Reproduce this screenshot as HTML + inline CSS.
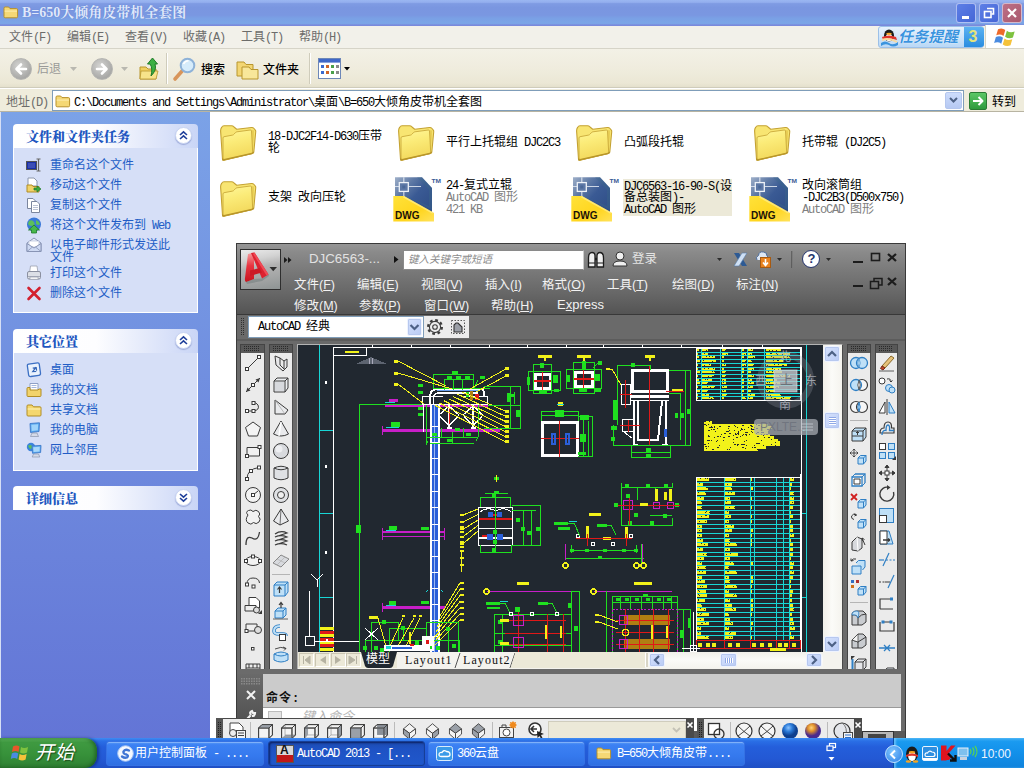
<!DOCTYPE html>
<html lang="zh-CN"><head><meta charset="utf-8"><title>B=650大倾角皮带机全套图</title>
<style>
html,body{margin:0;padding:0;}
body{width:1024px;height:768px;overflow:hidden;position:relative;background:#fff;
 font-family:"Liberation Mono","Noto Sans CJK SC",monospace;font-size:12px;line-height:14px;color:#000;}
div,svg,span.a{position:absolute;box-sizing:border-box;}
svg{overflow:visible}
.t{white-space:nowrap;font-size:12px;line-height:14px;}
.l{letter-spacing:-1.2px;}
.s{font-family:"Liberation Sans","Noto Sans CJK SC",sans-serif;white-space:nowrap;}
.s .l{letter-spacing:0}
.b{font-weight:bold}
.lk{color:#215dc6}
.g{color:#808080}
</style></head><body>
<div style="left:0px;top:0px;width:1024px;height:26px;background:linear-gradient(#9ab6f1 0,#93aeee 9%,#7f9be3 14%,#7a96e0 30%,#7a97e1 58%,#7aa0e5 70%,#7ba6e7 90%,#7a90de 95%,#7986da 100%);"></div>
<svg style="left:3px;top:5px;" width="16" height="14" viewBox="0 0 16 14"><path d="M1 3.2Q1 2 2.2 2H5.6L7 3.6H13.4Q14.6 3.6 14.6 4.8V11.6Q14.6 12.8 13.4 12.8H2.2Q1 12.8 1 11.6Z" fill="#f5d875" stroke="#b8912a" stroke-width="1"/><path d="M1.6 5.6H14V6.6H1.6Z" fill="#fff4c0" opacity=".8"/></svg>
<div class="t" style="left:22px;top:4px;color:#dfe8fb;font-weight:bold;font-size:14px;line-height:17px;font-family:'Liberation Serif','Noto Serif CJK SC',serif;text-shadow:0 0 1px #5b78c8;"><span>B=650</span>大倾角皮带机全套图</div>
<div style="left:956px;top:3px;width:20px;height:20px;border:1px solid rgba(235,240,255,.6);border-radius:3px;background:linear-gradient(135deg,#5d7fe6,#4666d6);"></div>
<div style="left:979px;top:3px;width:20px;height:20px;border:1px solid rgba(235,240,255,.6);border-radius:3px;background:linear-gradient(135deg,#5d7fe6,#4666d6);"></div>
<div style="left:1002px;top:3px;width:20px;height:20px;border:1px solid rgba(235,240,255,.6);border-radius:3px;background:linear-gradient(135deg,#bd6f86,#a9596e);"></div>
<div style="left:962px;top:16px;width:7px;height:3px;background:#fff"></div>
<svg style="left:979px;top:3px;" width="20" height="20" viewBox="0 0 20 20"><path d="M8 5.5H14.5V11H12.5" fill="none" stroke="#fff" stroke-width="1.6"/><rect x="5.5" y="8.5" width="6.5" height="6" fill="none" stroke="#fff" stroke-width="1.6"/></svg>
<svg style="left:1002px;top:3px;" width="20" height="20" viewBox="0 0 20 20"><path d="M6 6L14 14M14 6L6 14" stroke="#fff" stroke-width="2.2"/></svg>
<div style="left:0px;top:26px;width:1024px;height:23px;background:#f2f1ea;border-bottom:1px solid #d6d4c8"></div>
<div class="t" style="left:9px;top:31px;color:#6c6c6a">文件<span class="l">(F)</span></div>
<div class="t" style="left:67px;top:31px;color:#6c6c6a">编辑<span class="l">(E)</span></div>
<div class="t" style="left:125px;top:31px;color:#6c6c6a">查看<span class="l">(V)</span></div>
<div class="t" style="left:183px;top:31px;color:#6c6c6a">收藏<span class="l">(A)</span></div>
<div class="t" style="left:241px;top:31px;color:#6c6c6a">工具<span class="l">(T)</span></div>
<div class="t" style="left:299px;top:31px;color:#6c6c6a">帮助<span class="l">(H)</span></div>
<div style="left:878px;top:26px;width:106px;height:22px;background:linear-gradient(#e7f2fd,#b9d8f6);border:1px solid #9cc0e8;border-radius:3px"></div>
<div style="left:964px;top:27px;width:20px;height:20px;background:linear-gradient(#5cb2f2,#2a8de0);border-radius:0 3px 3px 0"></div>
<div class="s" style="left:968.5px;top:28px;color:#e4e37a;font-weight:bold;font-size:16px;line-height:18px"><span class="l">3</span></div>
<div class="s" style="left:898px;top:28px;color:#3b94de;text-shadow:0 0 1px #fff,0 0 1px #fff;font-weight:bold;font-style:italic;font-size:15px;line-height:18px;letter-spacing:0px">任务提醒</div>
<svg style="left:880px;top:27px;" width="20" height="20" viewBox="0 0 20 20"><path d="M1 16Q5 13 9 16Q13 19 18 15L18 18Q13 21 9 18Q5 16 1 19Z" fill="#3b94de"/><ellipse cx="9" cy="8.500" rx="5" ry="6" fill="#1c1c1c"/><ellipse cx="9" cy="10.500" rx="3.200" ry="3.800" fill="#fff"/><ellipse cx="9" cy="6.800" rx="2.800" ry="1.100" fill="#f5a623"/><path d="M2 10Q9 7 16 10L17 13Q9 10 3 13Z" fill="#e0342c"/><path d="M2 13Q9 10.500 17 15" stroke="#f7d9a0" stroke-width="2" fill="none"/></svg>
<div style="left:985px;top:25px;width:39px;height:23px;background:#fff;border-left:1px solid #d8d5c6"></div>
<svg style="left:994px;top:26px;" width="24" height="22" viewBox="0 0 24 22"><g transform="rotate(6 10 10) scale(1.120)"><path d="M3 3.500Q6.500 1.500 9.500 3.500L8.500 9Q5.500 7.200 2 9Z" fill="#ee6a2a"/><path d="M11 4Q14 6 18 4L17 9.500Q13.500 11.500 10 9.500Z" fill="#7ec23f"/><path d="M1.800 10.500Q5.200 8.600 8.200 10.500L7.200 16Q4.200 14.200 .8 16Z" fill="#4a8be0"/><path d="M9.600 11Q12.800 13 16.600 11L15.600 16.500Q12.200 18.500 8.600 16.500Z" fill="#f5c23a"/></g></svg>
<div style="left:0px;top:49px;width:1024px;height:39px;background:linear-gradient(#f3f1e6,#efecdd 55%,#ebe7d5 90%,#e4e0cc);border-bottom:1px solid #cfccbb"></div>
<div style="left:9.5px;top:58px;width:22px;height:22px;border-radius:11px;background:radial-gradient(circle at 40% 35%,#d4d4d2,#a9a9a7 70%,#9a9a98);border:1px solid #b5b5b2"></div>
<div style="left:90.5px;top:58px;width:22px;height:22px;border-radius:11px;background:radial-gradient(circle at 40% 35%,#d4d4d2,#a9a9a7 70%,#9a9a98);border:1px solid #b5b5b2"></div>
<svg style="left:9.5px;top:58px;" width="22" height="22" viewBox="0 0 22 22"><path d="M16 11H7M11 6.5L6.5 11L11 15.5" fill="none" stroke="#fff" stroke-width="2.6" stroke-linecap="round" stroke-linejoin="round"/></svg>
<svg style="left:90.5px;top:58px;" width="22" height="22" viewBox="0 0 22 22"><path d="M6 11H15M11 6.5L15.5 11L11 15.5" fill="none" stroke="#fff" stroke-width="2.6" stroke-linecap="round" stroke-linejoin="round"/></svg>
<div class="t" style="left:37px;top:63px;color:#9a9a98">后退</div>
<svg style="left:70px;top:67px;" width="7" height="4" viewBox="0 0 7 4"><path d="M0 0H7L3.5 4Z" fill="#b9b8b0"/></svg>
<svg style="left:121px;top:67px;" width="7" height="4" viewBox="0 0 7 4"><path d="M0 0H7L3.5 4Z" fill="#b9b8b0"/></svg>
<svg style="left:138px;top:56px;" width="24" height="26" viewBox="0 0 24 26"><path d="M2 11H8L10 13H18V23H2Z" fill="#f0d060" stroke="#b8962e" stroke-width="1"/><path d="M3 15H20L18 23H2Z" fill="#f7e38a" stroke="#b8962e" stroke-width=".8"/><path d="M13 20Q15 12 12 8H9.5L14.5 2L19.5 8H17Q19 14 13 20Z" fill="#3cb043" stroke="#1f7a28" stroke-width="1"/></svg>
<div style="left:166px;top:53px;width:1px;height:31px;background:#cfccbb;border-right:1px solid #fff;width:2px"></div>
<svg style="left:172px;top:56px;" width="26" height="26" viewBox="0 0 26 26"><path d="M3 23L11 14" stroke="#d8955a" stroke-width="3.6" stroke-linecap="round"/><circle cx="15.5" cy="9.5" r="6.8" fill="#d6ecfb" stroke="#8eb2d8" stroke-width="2"/><path d="M11.5 8Q13 4.8 16.5 4.8" stroke="#fff" stroke-width="1.6" fill="none"/></svg>
<div class="t" style="left:201px;top:63.5px;color:#000;font-weight:500">搜索</div>
<svg style="left:236px;top:57px;" width="24" height="24" viewBox="0 0 24 24"><path d="M1 5H8L10 7.5H17V19H1Z" fill="#f3d673" stroke="#b8962e"/><path d="M6 10H13L15 12.5H22V22H6Z" fill="#f8e79a" stroke="#b8962e"/></svg>
<div class="t" style="left:263px;top:63.5px;color:#000;font-weight:500">文件夹</div>
<div style="left:309px;top:53px;width:2px;height:31px;background:#cfccbb;border-right:1px solid #fff;"></div>
<svg style="left:318px;top:58px;" width="24" height="22" viewBox="0 0 24 22"><rect x=".5" y=".5" width="22" height="20" fill="#fff" stroke="#6d87b8"/><rect x="1" y="1" width="21" height="3.6" fill="#3f68c8"/><rect x="3" y="7" width="3" height="3" fill="#3a6ad0"/><rect x="8" y="7" width="3" height="3" fill="#d0652a"/><rect x="13" y="7" width="3" height="3" fill="#4aa04a"/><rect x="18" y="7" width="3" height="3" fill="#8a8a8a"/><rect x="3" y="13" width="3" height="3" fill="#3a6ad0"/><rect x="8" y="13" width="3" height="3" fill="#d0652a"/><rect x="13" y="13" width="3" height="3" fill="#4aa04a"/><rect x="18" y="13" width="3" height="3" fill="#8a8a8a"/></svg>
<svg style="left:344px;top:67px;" width="6" height="4" viewBox="0 0 6 4"><path d="M0 0H6L3 3.6Z" fill="#000"/></svg>
<div style="left:0px;top:89px;width:1024px;height:23px;background:#efecdc;border-bottom:1px solid #b8b4a2"></div>
<div class="t" style="left:6px;top:95.5px;color:#6c6c6a">地址<span class="l">(D)</span></div>
<div style="left:52px;top:90px;width:912px;height:21px;background:#fff;border:1px solid #7f9db9"></div>
<svg style="left:55px;top:94px;" width="16" height="14" viewBox="0 0 16 14"><path d="M1 3.2Q1 2 2.2 2H5.6L7 3.6H13.4Q14.6 3.6 14.6 4.8V11.6Q14.6 12.8 13.4 12.8H2.2Q1 12.8 1 11.6Z" fill="#f5d875" stroke="#b8912a" stroke-width="1"/><path d="M1.6 5.6H14V6.6H1.6Z" fill="#fff4c0" opacity=".8"/></svg>
<div class="t" style="left:74px;top:95.5px;"><span class="l">C:\Documents and Settings\Administrator\</span>桌面<span class="l">\B=650</span>大倾角皮带机全套图</div>
<div style="left:945px;top:92px;width:17px;height:17px;background:linear-gradient(#cddcfb,#b6c9f3);border:1px solid #b4c6ee;border-radius:2px"></div>
<svg style="left:949px;top:97px;" width="9" height="6" viewBox="0 0 9 6"><path d="M1 1L4.5 4.5L8 1" fill="none" stroke="#4d6185" stroke-width="2"/></svg>
<div style="left:969px;top:92px;width:18px;height:18px;background:linear-gradient(#5cc765,#2f9a3d);border:1px solid #2a7a33;border-radius:2px"></div>
<svg style="left:969px;top:92px;" width="18" height="18" viewBox="0 0 18 18"><path d="M4 9H13M9.5 5L13.5 9L9.5 13" fill="none" stroke="#fff" stroke-width="2" stroke-linejoin="round"/></svg>
<div class="t" style="left:992px;top:95.5px;">转到</div><div style="left:0px;top:112px;width:210px;height:626px;background:linear-gradient(#7ba2e7,#6375d6)"></div>
<div style="left:0px;top:112px;width:1px;height:626px;background:#d6dff5"></div>
<div style="left:13px;top:124px;width:185px;height:24px;background:linear-gradient(90deg,#fff 0,#fdfdff 45%,#c9d5f6 100%);border-radius:4px 4px 0 0"></div><div class="t" style="left:26px;top:129.5px;color:#2156c0;font-weight:bold;font-size:13px;font-family:'Liberation Serif','Noto Serif CJK SC',serif;font-weight:900">文件和文件夹任务</div><div style="left:175px;top:127px;width:17px;height:17px;border-radius:9px;background:#fff;border:1px solid #c8d4f2;box-shadow:0 1px 1px rgba(60,80,160,.35)"></div><svg style="left:175px;top:127px;" width="17" height="17" viewBox="0 0 17 17"><path d="M5 8L8.5 4.8L12 8M5 12L8.5 8.8L12 12" fill="none" stroke="#1f3f9a" stroke-width="1.6"/></svg>
<div style="left:13px;top:148px;width:185px;height:165px;background:#d6dff7;border:1px solid #fff;border-top:none"></div>
<svg style="left:26px;top:156.5px;" width="16" height="16" viewBox="0 0 16 16"><rect x=".5" y="4.5" width="10" height="8" fill="#1a2fa8" stroke="#555"/><rect x="2" y="6" width="7" height="5" fill="#fff" opacity=".15"/><path d="M12.5 2V14M10.5 2H14.5M10.5 14H14.5" stroke="#666" stroke-width="1.2"/></svg>
<div class="t lk" style="left:50px;top:159px;">重命名这个文件</div>
<svg style="left:26px;top:176.5px;" width="16" height="16" viewBox="0 0 16 16"><path d="M2 1H8L11 4V9H2Z" fill="#fff" stroke="#8c96ad"/><path d="M1 8H6L7 9.5H13V15H1Z" fill="#f1d268" stroke="#b08d27"/><path d="M8 11H11V9L15 12L11 15V13H8Z" fill="#3dab3f" stroke="#1f7a2a" stroke-width=".7"/></svg>
<div class="t lk" style="left:50px;top:179px;">移动这个文件</div>
<svg style="left:26px;top:196.5px;" width="16" height="16" viewBox="0 0 16 16"><path d="M1.5 1.5H7L9.5 4V11.5H1.5Z" fill="#fff" stroke="#7b869e"/><path d="M5.5 4.5H11L13.5 7V15.5H5.5Z" fill="#fff" stroke="#7b869e"/><path d="M7 8.5H12M7 10.5H12M7 12.5H12" stroke="#aab3c8" stroke-width=".8"/></svg>
<div class="t lk" style="left:50px;top:199px;">复制这个文件</div>
<svg style="left:26px;top:216.5px;" width="16" height="16" viewBox="0 0 16 16"><circle cx="8" cy="7.5" r="7" fill="#3a78d8"/><path d="M3 4Q6 2 8 5Q10 8 6 9Q3 9 2 7Z" fill="#5cc05a"/><path d="M10 3Q13 4 14 7Q12 9 10 7Z" fill="#5cc05a"/><path d="M8 8L13.5 13H10.5V16H5.5V13H2.5Z" fill="#47b84b" stroke="#1d7a2a" stroke-width=".8"/></svg>
<div class="t lk" style="left:50px;top:219px;">将这个文件发布到<span class="l"> Web</span></div>
<svg style="left:26px;top:236.5px;" width="16" height="16" viewBox="0 0 16 16"><path d="M1 6L8 1L15 6V14.5H1Z" fill="#e9eef9" stroke="#8894b5"/><path d="M3 4H13V10H3Z" fill="#fff" stroke="#b5bfd8" stroke-width=".7"/><path d="M1 6.5L8 11L15 6.5V14.5H1Z" fill="#cfdaf3" stroke="#8894b5"/><path d="M1 14.5L6.5 10M15 14.5L9.5 10" stroke="#8894b5" stroke-width=".8"/></svg>
<div class="t lk" style="left:50px;top:239px;">以电子邮件形式发送此</div>
<svg style="left:26px;top:264.5px;" width="16" height="16" viewBox="0 0 16 16"><path d="M4.5 1H11L12 8H3.5Z" fill="#fff" stroke="#9aa0ae" stroke-width=".8"/><path d="M1.5 8Q1.5 6.5 3 6.5H13Q14.5 6.5 14.5 8V12.5Q14.5 14 13 14H3Q1.5 14 1.5 12.5Z" fill="#dcdfe6" stroke="#8b90a0"/><path d="M2 11.5H14" stroke="#a7abba"/><rect x="4" y="12" width="8" height="2.5" fill="#f4f4f6" stroke="#9096a5" stroke-width=".6"/></svg>
<div class="t lk" style="left:50px;top:267px;">打印这个文件</div>
<svg style="left:26px;top:284.5px;" width="16" height="16" viewBox="0 0 16 16"><path d="M2.5 3L13.5 14M13.5 3L2.5 14" stroke="#d3202f" stroke-width="2.6" stroke-linecap="round"/></svg>
<div class="t lk" style="left:50px;top:287px;">删除这个文件</div>
<div class="t lk" style="left:50px;top:250.5px;">文件</div>
<div style="left:13px;top:329px;width:185px;height:24px;background:linear-gradient(90deg,#fff 0,#fdfdff 45%,#c9d5f6 100%);border-radius:4px 4px 0 0"></div><div class="t" style="left:26px;top:334.5px;color:#2156c0;font-weight:bold;font-size:13px;font-family:'Liberation Serif','Noto Serif CJK SC',serif;font-weight:900">其它位置</div><div style="left:175px;top:332px;width:17px;height:17px;border-radius:9px;background:#fff;border:1px solid #c8d4f2;box-shadow:0 1px 1px rgba(60,80,160,.35)"></div><svg style="left:175px;top:332px;" width="17" height="17" viewBox="0 0 17 17"><path d="M5 8L8.5 4.8L12 8M5 12L8.5 8.8L12 12" fill="none" stroke="#1f3f9a" stroke-width="1.6"/></svg>
<div style="left:13px;top:353px;width:185px;height:118px;background:#d6dff7;border:1px solid #fff;border-top:none"></div>
<svg style="left:26px;top:361.5px;" width="16" height="16" viewBox="0 0 16 16"><path d="M2 3Q2 1.5 3.5 1.5H12.5Q14 1.5 14 3V12Q14 14 12 14H4Q2 14 2 12Z" fill="#eaf2fd" stroke="#3c70c4" stroke-width="1.3" transform="rotate(-8 8 8)"/><path d="M10.5 5.5L6.5 9.5L10 9.8M7 6H10.5V9" fill="none" stroke="#3566b8" stroke-width="1.2" transform="rotate(-8 8 8)"/></svg>
<div class="t lk" style="left:50px;top:364px;">桌面</div>
<svg style="left:26px;top:381.5px;" width="16" height="16" viewBox="0 0 16 16"><path d="M4 1.5H12V9H4Z" fill="#fff" stroke="#8fa0c6"/><path d="M5.5 3.5H10.5M5.5 5.5H10.5" stroke="#9bb0dc" stroke-width=".9"/><path d="M1 6.5Q1 5.5 2 5.5H4V8H12L13 7H15V13.5Q15 14.5 14 14.5H2Q1 14.5 1 13.5Z" fill="#f2d36b" stroke="#b08d27"/></svg>
<div class="t lk" style="left:50px;top:384px;">我的文档</div>
<svg style="left:26px;top:401.5px;" width="16" height="16" viewBox="0 0 16 16"><path d="M1 4Q1 3 2 3H6L7.5 4.8H14Q15 4.8 15 5.8V13Q15 14 14 14H2Q1 14 1 13Z" fill="#f4d76f" stroke="#b08d27"/><path d="M1.6 7H14.4" stroke="#fbeeb0" stroke-width="1.2"/></svg>
<div class="t lk" style="left:50px;top:404px;">共享文档</div>
<svg style="left:26px;top:421.5px;" width="16" height="16" viewBox="0 0 16 16"><path d="M4 1.5L13.5 .8L13 9.5L4.5 10.5Z" fill="#56a8ee" stroke="#3d78c9" stroke-width=".9"/><path d="M5.3 2.7L12.2 2.2L11.8 8.3L5.7 9Z" fill="#9ed3fb"/><path d="M6 11H11L12.5 14.5H4.5Z" fill="#d4dae8" stroke="#8b95ae" stroke-width=".7"/></svg>
<div class="t lk" style="left:50px;top:424px;">我的电脑</div>
<svg style="left:26px;top:441.5px;" width="16" height="16" viewBox="0 0 16 16"><circle cx="5" cy="5" r="4.2" fill="#3a83dc"/><path d="M2 4Q4 2 6 4Q7 6 4 7Z" fill="#5cc05a"/><path d="M6 4L15 3.4L14.6 10.5L6.5 11.3Z" fill="#56a8ee" stroke="#3d78c9" stroke-width=".9"/><path d="M7.2 5.2L13.8 4.7L13.5 9.4L7.6 10Z" fill="#a8d8fb"/><path d="M7.5 12H12.5L13.8 15H6.2Z" fill="#d4dae8" stroke="#8b95ae" stroke-width=".7"/></svg>
<div class="t lk" style="left:50px;top:444px;">网上邻居</div>
<div style="left:13px;top:486px;width:185px;height:24px;background:linear-gradient(90deg,#fff 0,#fdfdff 45%,#c9d5f6 100%);border-radius:4px 4px 0 0"></div><div class="t" style="left:26px;top:491.5px;color:#2156c0;font-weight:bold;font-size:13px;font-family:'Liberation Serif','Noto Serif CJK SC',serif;font-weight:900">详细信息</div><div style="left:175px;top:489px;width:17px;height:17px;border-radius:9px;background:#fff;border:1px solid #c8d4f2;box-shadow:0 1px 1px rgba(60,80,160,.35)"></div><svg style="left:175px;top:489px;" width="17" height="17" viewBox="0 0 17 17"><path d="M5 5L8.5 8.2L12 5M5 9L8.5 12.2L12 9" fill="none" stroke="#1f3f9a" stroke-width="1.6"/></svg><svg style="left:218px;top:122px;" width="40" height="40" viewBox="0 0 40 40"><defs><linearGradient id="fg" x1="0" y1="0" x2=".25" y2="1"><stop offset="0" stop-color="#fff79a"/><stop offset=".45" stop-color="#fbeb78"/><stop offset="1" stop-color="#f3d95c"/></linearGradient></defs>
<path d="M2.600 9Q2.600 6.800 3.600 5.400Q4.500 3.800 6 3.800H13.500Q15 3.800 16 5L18.700 7.200L33.500 5.500Q35 5.300 36 6.500L37.500 8.300Q37.800 9 37.700 10L35.800 30Q35.700 31.200 34.500 31.500L6 38.200Q4.600 38.500 4.500 37Z" fill="#f8e572" stroke="#c4a233" stroke-width="1.100" stroke-linejoin="round"/>
<path d="M33.400 8L36.200 8.600L35 30.500L34.600 31.200Z" fill="#e9cf55"/>
<path d="M5 16Q5 14.900 6 14.700L14.500 13.100Q15.500 12.900 16.200 12L17.400 10.600Q18 10 19 9.800L32.300 8Q33.400 7.900 33.500 9L34.700 30.300Q34.800 31.300 33.700 31.600L6 38Q5 38.200 5 37.200Z" fill="url(#fg)" stroke="#c9a93a" stroke-width=".9" stroke-linejoin="round"/>
<path d="M4.500 36.500L5 38L34 31.500L35.800 30" fill="none" stroke="#b8952a" stroke-width="1.300"/></svg>
<svg style="left:396px;top:122px;" width="40" height="40" viewBox="0 0 40 40"><defs><linearGradient id="fg" x1="0" y1="0" x2=".25" y2="1"><stop offset="0" stop-color="#fff79a"/><stop offset=".45" stop-color="#fbeb78"/><stop offset="1" stop-color="#f3d95c"/></linearGradient></defs>
<path d="M2.600 9Q2.600 6.800 3.600 5.400Q4.500 3.800 6 3.800H13.500Q15 3.800 16 5L18.700 7.200L33.500 5.500Q35 5.300 36 6.500L37.500 8.300Q37.800 9 37.700 10L35.800 30Q35.700 31.200 34.500 31.500L6 38.200Q4.600 38.500 4.500 37Z" fill="#f8e572" stroke="#c4a233" stroke-width="1.100" stroke-linejoin="round"/>
<path d="M33.400 8L36.200 8.600L35 30.500L34.600 31.200Z" fill="#e9cf55"/>
<path d="M5 16Q5 14.900 6 14.700L14.500 13.100Q15.500 12.900 16.200 12L17.400 10.600Q18 10 19 9.800L32.300 8Q33.400 7.900 33.500 9L34.700 30.300Q34.800 31.300 33.700 31.600L6 38Q5 38.200 5 37.200Z" fill="url(#fg)" stroke="#c9a93a" stroke-width=".9" stroke-linejoin="round"/>
<path d="M4.500 36.500L5 38L34 31.500L35.800 30" fill="none" stroke="#b8952a" stroke-width="1.300"/></svg>
<svg style="left:574px;top:122px;" width="40" height="40" viewBox="0 0 40 40"><defs><linearGradient id="fg" x1="0" y1="0" x2=".25" y2="1"><stop offset="0" stop-color="#fff79a"/><stop offset=".45" stop-color="#fbeb78"/><stop offset="1" stop-color="#f3d95c"/></linearGradient></defs>
<path d="M2.600 9Q2.600 6.800 3.600 5.400Q4.500 3.800 6 3.800H13.500Q15 3.800 16 5L18.700 7.200L33.500 5.500Q35 5.300 36 6.500L37.500 8.300Q37.800 9 37.700 10L35.800 30Q35.700 31.200 34.500 31.500L6 38.200Q4.600 38.500 4.500 37Z" fill="#f8e572" stroke="#c4a233" stroke-width="1.100" stroke-linejoin="round"/>
<path d="M33.400 8L36.200 8.600L35 30.500L34.600 31.200Z" fill="#e9cf55"/>
<path d="M5 16Q5 14.900 6 14.700L14.500 13.100Q15.500 12.900 16.200 12L17.400 10.600Q18 10 19 9.800L32.300 8Q33.400 7.900 33.500 9L34.700 30.300Q34.800 31.300 33.700 31.600L6 38Q5 38.200 5 37.200Z" fill="url(#fg)" stroke="#c9a93a" stroke-width=".9" stroke-linejoin="round"/>
<path d="M4.500 36.500L5 38L34 31.500L35.800 30" fill="none" stroke="#b8952a" stroke-width="1.300"/></svg>
<svg style="left:752px;top:122px;" width="40" height="40" viewBox="0 0 40 40"><defs><linearGradient id="fg" x1="0" y1="0" x2=".25" y2="1"><stop offset="0" stop-color="#fff79a"/><stop offset=".45" stop-color="#fbeb78"/><stop offset="1" stop-color="#f3d95c"/></linearGradient></defs>
<path d="M2.600 9Q2.600 6.800 3.600 5.400Q4.500 3.800 6 3.800H13.500Q15 3.800 16 5L18.700 7.200L33.500 5.500Q35 5.300 36 6.500L37.500 8.300Q37.800 9 37.700 10L35.800 30Q35.700 31.200 34.500 31.500L6 38.200Q4.600 38.500 4.500 37Z" fill="#f8e572" stroke="#c4a233" stroke-width="1.100" stroke-linejoin="round"/>
<path d="M33.400 8L36.200 8.600L35 30.500L34.600 31.200Z" fill="#e9cf55"/>
<path d="M5 16Q5 14.900 6 14.700L14.500 13.100Q15.500 12.900 16.200 12L17.400 10.600Q18 10 19 9.800L32.300 8Q33.400 7.900 33.500 9L34.700 30.300Q34.800 31.300 33.700 31.600L6 38Q5 38.200 5 37.200Z" fill="url(#fg)" stroke="#c9a93a" stroke-width=".9" stroke-linejoin="round"/>
<path d="M4.500 36.500L5 38L34 31.500L35.800 30" fill="none" stroke="#b8952a" stroke-width="1.300"/></svg>
<svg style="left:218px;top:178px;" width="40" height="40" viewBox="0 0 40 40"><defs><linearGradient id="fg" x1="0" y1="0" x2=".25" y2="1"><stop offset="0" stop-color="#fff79a"/><stop offset=".45" stop-color="#fbeb78"/><stop offset="1" stop-color="#f3d95c"/></linearGradient></defs>
<path d="M2.600 9Q2.600 6.800 3.600 5.400Q4.500 3.800 6 3.800H13.500Q15 3.800 16 5L18.700 7.200L33.500 5.500Q35 5.300 36 6.500L37.500 8.300Q37.800 9 37.700 10L35.800 30Q35.700 31.200 34.500 31.500L6 38.200Q4.600 38.500 4.500 37Z" fill="#f8e572" stroke="#c4a233" stroke-width="1.100" stroke-linejoin="round"/>
<path d="M33.400 8L36.200 8.600L35 30.500L34.600 31.200Z" fill="#e9cf55"/>
<path d="M5 16Q5 14.900 6 14.700L14.500 13.100Q15.500 12.900 16.200 12L17.400 10.600Q18 10 19 9.800L32.300 8Q33.400 7.900 33.500 9L34.700 30.300Q34.800 31.300 33.700 31.600L6 38Q5 38.200 5 37.200Z" fill="url(#fg)" stroke="#c9a93a" stroke-width=".9" stroke-linejoin="round"/>
<path d="M4.500 36.500L5 38L34 31.500L35.800 30" fill="none" stroke="#b8952a" stroke-width="1.300"/></svg>
<svg style="left:393px;top:176px;" width="48" height="46" viewBox="0 0 48 46"><defs><linearGradient id="dg" x1="0" y1="0" x2="1" y2=".9"><stop offset="0" stop-color="#9fb0c9"/><stop offset=".3" stop-color="#5f7aa6"/><stop offset=".55" stop-color="#3a5a94"/><stop offset="1" stop-color="#2e4d86"/></linearGradient>
<linearGradient id="dy" x1="0" y1="0" x2="1" y2="1"><stop offset="0" stop-color="#ffe23a"/><stop offset=".6" stop-color="#ffd51e"/><stop offset="1" stop-color="#ffe25a"/></linearGradient></defs>
<path d="M2 1.300H29L39 12V38H2Z" fill="url(#dg)"/>
<path d="M14 20L39 34V12L29 1.300H24L36 14V30Z" fill="#3c6a8a" opacity=".35"/>
<path d="M2 10.500H28M10.800 1.300V22" stroke="#e3e9f2" stroke-width="1.200" fill="none" opacity=".85"/>
<rect x="6.300" y="6.600" width="9" height="8.800" fill="#5d78a6" stroke="#eef2f8" stroke-width="1.300"/>
<rect x="9.300" y="9.500" width="3" height="3" fill="#4a6898"/>
<path d="M.3 20H11L38.700 35.400L41 37V45.600H.3Z" fill="url(#dy)"/>
<path d="M11 20L38.700 35.400L41 37L39 37.500L10 21.500Z" fill="#fff4a8" opacity=".55"/>
<text x="2" y="42.800" font-family="Liberation Sans,sans-serif" font-weight="bold" font-size="10.500" fill="#1a1208" textLength="24.500" lengthAdjust="spacingAndGlyphs">DWG</text>
<text x="38.500" y="6.800" font-family="Liberation Sans,sans-serif" font-weight="bold" font-size="5.500" fill="#3a5a94" textLength="9.500" lengthAdjust="spacingAndGlyphs">TM</text></svg>
<svg style="left:571px;top:176px;" width="48" height="46" viewBox="0 0 48 46"><defs><linearGradient id="dg" x1="0" y1="0" x2="1" y2=".9"><stop offset="0" stop-color="#9fb0c9"/><stop offset=".3" stop-color="#5f7aa6"/><stop offset=".55" stop-color="#3a5a94"/><stop offset="1" stop-color="#2e4d86"/></linearGradient>
<linearGradient id="dy" x1="0" y1="0" x2="1" y2="1"><stop offset="0" stop-color="#ffe23a"/><stop offset=".6" stop-color="#ffd51e"/><stop offset="1" stop-color="#ffe25a"/></linearGradient></defs>
<path d="M2 1.300H29L39 12V38H2Z" fill="url(#dg)"/>
<path d="M14 20L39 34V12L29 1.300H24L36 14V30Z" fill="#3c6a8a" opacity=".35"/>
<path d="M2 10.500H28M10.800 1.300V22" stroke="#e3e9f2" stroke-width="1.200" fill="none" opacity=".85"/>
<rect x="6.300" y="6.600" width="9" height="8.800" fill="#5d78a6" stroke="#eef2f8" stroke-width="1.300"/>
<rect x="9.300" y="9.500" width="3" height="3" fill="#4a6898"/>
<path d="M.3 20H11L38.700 35.400L41 37V45.600H.3Z" fill="url(#dy)"/>
<path d="M11 20L38.700 35.400L41 37L39 37.500L10 21.500Z" fill="#fff4a8" opacity=".55"/>
<text x="2" y="42.800" font-family="Liberation Sans,sans-serif" font-weight="bold" font-size="10.500" fill="#1a1208" textLength="24.500" lengthAdjust="spacingAndGlyphs">DWG</text>
<text x="38.500" y="6.800" font-family="Liberation Sans,sans-serif" font-weight="bold" font-size="5.500" fill="#3a5a94" textLength="9.500" lengthAdjust="spacingAndGlyphs">TM</text></svg>
<svg style="left:749px;top:176px;" width="48" height="46" viewBox="0 0 48 46"><defs><linearGradient id="dg" x1="0" y1="0" x2="1" y2=".9"><stop offset="0" stop-color="#9fb0c9"/><stop offset=".3" stop-color="#5f7aa6"/><stop offset=".55" stop-color="#3a5a94"/><stop offset="1" stop-color="#2e4d86"/></linearGradient>
<linearGradient id="dy" x1="0" y1="0" x2="1" y2="1"><stop offset="0" stop-color="#ffe23a"/><stop offset=".6" stop-color="#ffd51e"/><stop offset="1" stop-color="#ffe25a"/></linearGradient></defs>
<path d="M2 1.300H29L39 12V38H2Z" fill="url(#dg)"/>
<path d="M14 20L39 34V12L29 1.300H24L36 14V30Z" fill="#3c6a8a" opacity=".35"/>
<path d="M2 10.500H28M10.800 1.300V22" stroke="#e3e9f2" stroke-width="1.200" fill="none" opacity=".85"/>
<rect x="6.300" y="6.600" width="9" height="8.800" fill="#5d78a6" stroke="#eef2f8" stroke-width="1.300"/>
<rect x="9.300" y="9.500" width="3" height="3" fill="#4a6898"/>
<path d="M.3 20H11L38.700 35.400L41 37V45.600H.3Z" fill="url(#dy)"/>
<path d="M11 20L38.700 35.400L41 37L39 37.500L10 21.500Z" fill="#fff4a8" opacity=".55"/>
<text x="2" y="42.800" font-family="Liberation Sans,sans-serif" font-weight="bold" font-size="10.500" fill="#1a1208" textLength="24.500" lengthAdjust="spacingAndGlyphs">DWG</text>
<text x="38.500" y="6.800" font-family="Liberation Sans,sans-serif" font-weight="bold" font-size="5.500" fill="#3a5a94" textLength="9.500" lengthAdjust="spacingAndGlyphs">TM</text></svg>
<div class="t" style="left:268px;top:130px;"><span class="l">18-DJC2F14-D630</span>压带</div>
<div class="t" style="left:268px;top:142px;">轮</div>
<div class="t" style="left:446px;top:136px;">平行上托辊组<span class="l"> DJC2C3</span></div>
<div class="t" style="left:624px;top:136px;">凸弧段托辊</div>
<div class="t" style="left:802px;top:136px;">托带辊<span class="l"> (DJ2C5)</span></div>
<div class="t" style="left:268px;top:191px;">支架<span class="l"> </span>改向压轮</div>
<div class="t" style="left:446px;top:179px;"><span class="l">24-</span>复式立辊</div>
<div class="t g" style="left:446px;top:191px;"><span class="l">AutoCAD </span>图形</div>
<div class="t g" style="left:446px;top:203px;"><span class="l">421 KB</span></div>
<div style="left:623px;top:179px;width:109px;height:37px;background:#ece9d8"></div>
<div class="t" style="left:624px;top:179.5px;"><span class="l">DJC6563-16-90-S(</span>设</div>
<div class="t" style="left:624px;top:191px;">备总装图<span class="l">)-</span></div>
<div class="t" style="left:624px;top:203px;"><span class="l">AutoCAD </span>图形</div>
<div class="t" style="left:802px;top:179px;">改向滚筒组</div>
<div class="t" style="left:802px;top:191px;"><span class="l">-DJC2B3(D500x750)</span></div>
<div class="t g" style="left:802px;top:203px;"><span class="l">AutoCAD </span>图形</div><div style="left:236px;top:243px;width:670px;height:495px;background:#6b6b6b;border:1px solid #3a3a3a;border-bottom:none"></div>
<div style="left:237px;top:244px;width:668px;height:71px;background:linear-gradient(#969696 0,#8a8a8a 12%,#777 42%,#666 72%,#545454 100%);border-bottom:1px solid #383838"></div>
<div style="left:240px;top:249px;width:41px;height:41px;background:linear-gradient(170deg,#ebebeb 0,#d2d2d2 25%,#b2b2b2 45%,#a4a6a6 70%,#8e9494 100%);border:1px solid #2e2e2e;"></div>
<svg style="left:240px;top:249px;" width="41" height="41" viewBox="0 0 41 41"><defs><linearGradient id="ra" x1="0" y1="0" x2="0" y2="1"><stop offset="0" stop-color="#f4a0a0"/><stop offset=".45" stop-color="#e83440"/><stop offset="1" stop-color="#c8141e"/></linearGradient></defs><path d="M8 5L14 3.500L14 30L6 33Q4.500 32 5 29Z" fill="url(#ra)"/><path d="M11 4L14.500 3.500L28.500 25.500L22 29.500Z" fill="#dc2230"/><path d="M14.500 3.500L28.500 25.500L26.500 26.500L13 5Z" fill="#f04a55"/><path d="M10 21.500L19.500 19L22 23.500L10 27Z" fill="#cc1a26"/><path d="M6 33L14 30L22 29.500L28.500 25.500L29 27L22 32L7 35Z" fill="#5a6a6a" opacity=".35"/><path d="M29.500 18H37L33.200 22.200Z" fill="#2e2e2e"/></svg>
<svg style="left:284px;top:257px;" width="8" height="6" viewBox="0 0 8 6"><path d="M0 0L3.500 3L0 6ZM4 0L7.500 3L4 6Z" fill="#1a1a1a"/></svg>
<div class="s" style="left:309px;top:251px;color:#e2e2e2;font-size:13.3px;line-height:16px;"><span class="l">DJC6563-...</span></div>
<svg style="left:394px;top:256px;" width="5" height="7" viewBox="0 0 5 7"><path d="M0 0L4.500 3.500L0 7Z" fill="#111"/></svg>
<div style="left:403px;top:250px;width:181px;height:20px;background:#fff;border:1px solid #8a8a8a;border-right-color:#ccc"></div>
<div class="s" style="left:408px;top:253px;color:#8c8c8c;font-style:italic;font-size:10.5px;line-height:13px;">键入关键字或短语</div>
<svg style="left:587px;top:250px;" width="18" height="19" viewBox="0 0 18 19"><path d="M1.500 17V8Q1.500 2.500 5 2.500Q8 2.500 8 6V17ZM10 17V6Q10 2.500 13 2.500Q16.500 2.500 16.500 8V17Z" fill="#f0f0f0" stroke="#1c1c1c" stroke-width="1.300"/><path d="M8 9H10" stroke="#1c1c1c" stroke-width="2.500"/><path d="M1.500 13H8M10 13H16.500" stroke="#1c1c1c"/></svg>
<svg style="left:611px;top:250px;" width="18" height="19" viewBox="0 0 18 19"><circle cx="9" cy="6" r="4" fill="#f0f0f0" stroke="#333"/><path d="M2 16Q2 11 9 11Q16 11 16 16Z" fill="#f0f0f0" stroke="#333"/></svg>
<div class="s" style="left:632px;top:252px;color:#e4e4e4;font-size:12.5px;line-height:15px">登录</div>
<svg style="left:717px;top:258px;" width="5" height="4" viewBox="0 0 5 4"><path d="M0 0H5L2.500 3Z" fill="#2c2c2c"/></svg>
<svg style="left:777px;top:258px;" width="5" height="4" viewBox="0 0 5 4"><path d="M0 0H5L2.500 3Z" fill="#2c2c2c"/></svg>
<svg style="left:826px;top:258px;" width="5" height="4" viewBox="0 0 5 4"><path d="M0 0H5L2.500 3Z" fill="#2c2c2c"/></svg>
<svg style="left:732px;top:251px;" width="17" height="17" viewBox="0 0 17 17"><path d="M2 2H7L15 15H10Z" fill="#2d5a94"/><path d="M10 2H15L7 15H2Z" fill="#cfe0f4" stroke="#567aa8" stroke-width=".6"/></svg>
<svg style="left:754px;top:249px;" width="20" height="20" viewBox="0 0 20 20"><path d="M3 11Q1 8 4.500 6.500Q5 2 9.500 3Q13 3 13 7Q16 8 14 11" fill="#dde6f2" stroke="#4a6a9a"/><rect x="6.500" y="8.500" width="10" height="10" fill="#e8821e" stroke="#a85a10"/><path d="M11.500 10V16M9 13.500L11.500 16.500L14 13.500" stroke="#fff" stroke-width="1.600" fill="none"/></svg>
<div style="left:791px;top:251px;width:1px;height:17px;background:rgba(60,60,60,.5);border-right:1px solid rgba(150,150,150,.5);width:2px"></div>
<div style="left:802px;top:250px;width:18px;height:18px;border-radius:9px;background:#fff;border:1.500px solid #24346e"></div>
<div class="s" style="left:807.5px;top:251px;color:#24346e;font-weight:bold;font-size:13px;line-height:16px"><span class="l">?</span></div>
<svg style="left:850px;top:248px;" width="50" height="44" viewBox="0 0 50 44"><path d="M3 14H13" stroke="#1c1c1c" stroke-width="2"/><rect x="21.500" y="5.500" width="8" height="7" fill="none" stroke="#1c1c1c" stroke-width="1.600"/><path d="M38 6L46 13M46 6L38 13" stroke="#1c1c1c" stroke-width="2.300"/><path d="M3 38H13" stroke="#1c1c1c" stroke-width="2"/><rect x="20.500" y="33.500" width="8" height="7" fill="none" stroke="#1c1c1c" stroke-width="1.500"/><path d="M24 33V30.500H32V37H29" fill="none" stroke="#1c1c1c" stroke-width="1.500"/><path d="M38 30L46 37M46 30L38 37" stroke="#1c1c1c" stroke-width="2.300"/></svg>
<div class="s" style="left:294px;top:276.5px;color:#f2f2f2;font-size:12.5px;line-height:16px;">文件(<u>F</u>)</div>
<div class="s" style="left:357px;top:276.5px;color:#f2f2f2;font-size:12.5px;line-height:16px;">编辑(<u>E</u>)</div>
<div class="s" style="left:421px;top:276.5px;color:#f2f2f2;font-size:12.5px;line-height:16px;">视图(<u>V</u>)</div>
<div class="s" style="left:485px;top:276.5px;color:#f2f2f2;font-size:12.5px;line-height:16px;">插入(<u>I</u>)</div>
<div class="s" style="left:542px;top:276.5px;color:#f2f2f2;font-size:12.5px;line-height:16px;">格式(<u>O</u>)</div>
<div class="s" style="left:607px;top:276.5px;color:#f2f2f2;font-size:12.5px;line-height:16px;">工具(<u>T</u>)</div>
<div class="s" style="left:672px;top:276.5px;color:#f2f2f2;font-size:12.5px;line-height:16px;">绘图(<u>D</u>)</div>
<div class="s" style="left:736px;top:276.5px;color:#f2f2f2;font-size:12.5px;line-height:16px;">标注(<u>N</u>)</div>
<div class="s" style="left:294px;top:297.5px;color:#f2f2f2;font-size:12.5px;line-height:16px;">修改(<u>M</u>)</div>
<div class="s" style="left:359px;top:297.5px;color:#f2f2f2;font-size:12.5px;line-height:16px;">参数(<u>P</u>)</div>
<div class="s" style="left:424px;top:297.5px;color:#f2f2f2;font-size:12.5px;line-height:16px;">窗口(<u>W</u>)</div>
<div class="s" style="left:491px;top:297.5px;color:#f2f2f2;font-size:12.5px;line-height:16px;">帮助(<u>H</u>)</div>
<div class="s" style="left:557px;top:297px;color:#f2f2f2;font-size:13px;line-height:16px;">E<u>x</u>press</div>
<div style="left:237px;top:315px;width:668px;height:30px;background:#6a6a6a;"></div>
<svg style="left:240px;top:317px;" width="6" height="20" viewBox="0 0 6 20"><rect x="1" y="1" width="1" height="1" fill="#2f2f2f"/><rect x="1" y="3" width="1" height="1" fill="#2f2f2f"/><rect x="1" y="5" width="1" height="1" fill="#2f2f2f"/><rect x="1" y="7" width="1" height="1" fill="#2f2f2f"/><rect x="1" y="9" width="1" height="1" fill="#2f2f2f"/><rect x="1" y="11" width="1" height="1" fill="#2f2f2f"/><rect x="1" y="13" width="1" height="1" fill="#2f2f2f"/><rect x="1" y="15" width="1" height="1" fill="#2f2f2f"/><rect x="1" y="17" width="1" height="1" fill="#2f2f2f"/><rect x="3" y="1" width="1" height="1" fill="#2f2f2f"/><rect x="3" y="3" width="1" height="1" fill="#2f2f2f"/><rect x="3" y="5" width="1" height="1" fill="#2f2f2f"/><rect x="3" y="7" width="1" height="1" fill="#2f2f2f"/><rect x="3" y="9" width="1" height="1" fill="#2f2f2f"/><rect x="3" y="11" width="1" height="1" fill="#2f2f2f"/><rect x="3" y="13" width="1" height="1" fill="#2f2f2f"/><rect x="3" y="15" width="1" height="1" fill="#2f2f2f"/><rect x="3" y="17" width="1" height="1" fill="#2f2f2f"/></svg>
<div style="left:248px;top:316px;width:176px;height:22px;background:#fff;border:1px solid #7f9db9"></div>
<div class="t" style="left:258px;top:320px;"><span class="l">AutoCAD </span>经典</div>
<div style="left:407px;top:318px;width:15px;height:18px;background:linear-gradient(135deg,#d6e2fd,#b9cbf5);border:1px solid #eef3ff;border-radius:2px;box-shadow:0 0 0 1px #b7c8ef inset"></div><svg style="left:407px;top:318px;" width="15" height="18" viewBox="0 0 15 18"><path d="M3.5 7L7.5 11L11.5 7" fill="none" stroke="#4d6185" stroke-width="2.200"/></svg>
<div style="left:424px;top:316px;width:45px;height:22px;background:#ececec;"></div>
<svg style="left:425px;top:317px;" width="20" height="20" viewBox="0 0 20 20"><circle cx="10" cy="10" r="6.800" fill="none" stroke="#3c3c3c" stroke-width="2.400" stroke-dasharray="2.700 2.640"/><circle cx="10" cy="10" r="5.600" fill="#ececec" stroke="#3c3c3c" stroke-width="1.100"/><circle cx="10" cy="10" r="2.300" fill="none" stroke="#3c3c3c" stroke-width="1.100"/></svg>
<svg style="left:448px;top:317px;" width="20" height="20" viewBox="0 0 20 20"><rect x="3.500" y="3.500" width="13" height="13" fill="none" stroke="#555" stroke-dasharray="1.500 1.500"/><path d="M6 15V8L8 6H10L14 10V15Z" fill="#9a9ea6" stroke="#333" stroke-width="1.100"/></svg>
<div style="left:237px;top:339px;width:668px;height:2px;background:#5c5c5c"></div>
<div style="left:240px;top:344px;width:25px;height:325px;background:#ebebeb;border-left:1px solid #444;border-right:1px solid #4c4c4c"></div><div style="left:240px;top:344px;width:25px;height:8.5px;background:#585858;border:1px solid #444;border-bottom:none"></div><svg style="left:240px;top:344px;" width="25" height="8" viewBox="0 0 25 8"><rect x="4" y="2" width="1" height="1" fill="#2a2a2a"/><rect x="4" y="4" width="1" height="1" fill="#2a2a2a"/><rect x="4" y="6" width="1" height="1" fill="#2a2a2a"/><rect x="6" y="2" width="1" height="1" fill="#2a2a2a"/><rect x="6" y="4" width="1" height="1" fill="#2a2a2a"/><rect x="6" y="6" width="1" height="1" fill="#2a2a2a"/><rect x="8" y="2" width="1" height="1" fill="#2a2a2a"/><rect x="8" y="4" width="1" height="1" fill="#2a2a2a"/><rect x="8" y="6" width="1" height="1" fill="#2a2a2a"/><rect x="10" y="2" width="1" height="1" fill="#2a2a2a"/><rect x="10" y="4" width="1" height="1" fill="#2a2a2a"/><rect x="10" y="6" width="1" height="1" fill="#2a2a2a"/><rect x="12" y="2" width="1" height="1" fill="#2a2a2a"/><rect x="12" y="4" width="1" height="1" fill="#2a2a2a"/><rect x="12" y="6" width="1" height="1" fill="#2a2a2a"/><rect x="14" y="2" width="1" height="1" fill="#2a2a2a"/><rect x="14" y="4" width="1" height="1" fill="#2a2a2a"/><rect x="14" y="6" width="1" height="1" fill="#2a2a2a"/><rect x="16" y="2" width="1" height="1" fill="#2a2a2a"/><rect x="16" y="4" width="1" height="1" fill="#2a2a2a"/><rect x="16" y="6" width="1" height="1" fill="#2a2a2a"/><rect x="18" y="2" width="1" height="1" fill="#2a2a2a"/><rect x="18" y="4" width="1" height="1" fill="#2a2a2a"/><rect x="18" y="6" width="1" height="1" fill="#2a2a2a"/></svg><svg style="left:242.5px;top:352.5px;" width="20" height="20" viewBox="0 0 20 20"><path d="M4 16L16 4" stroke="#3a3a3a" fill="none"/><rect x="2.500" y="14.500" width="3" height="3" fill="#fff" stroke="#3a3a3a"/><rect x="14.500" y="2.500" width="3" height="3" fill="#fff" stroke="#3a3a3a"/></svg><svg style="left:242.5px;top:374.5px;" width="20" height="20" viewBox="0 0 20 20"><path d="M3 17L17 3" stroke="#3a3a3a" fill="none"/><path d="M17 3L12.500 4.500L15.500 7.500ZM3 17L7.500 15.500L4.500 12.500Z" fill="#3a3a3a"/><rect x="8.500" y="8.500" width="3" height="3" fill="#fff" stroke="#3a3a3a"/></svg><svg style="left:242.5px;top:396.5px;" width="20" height="20" viewBox="0 0 20 20"><path d="M4 14H10.500Q17 13 15 8Q13 5 10.500 6" stroke="#3a3a3a" fill="none"/><rect x="2.500" y="12.500" width="3" height="3" fill="#fff" stroke="#3a3a3a"/><rect x="9" y="12.500" width="3" height="3" fill="#fff" stroke="#3a3a3a"/><rect x="9" y="4.500" width="3" height="3" fill="#fff" stroke="#3a3a3a"/></svg><svg style="left:242.5px;top:418.5px;" width="20" height="20" viewBox="0 0 20 20"><path d="M10 3L17.500 8.500L14.500 17H5.500L2.500 8.500Z" fill="#f4f4f4" stroke="#3a3a3a"/></svg><svg style="left:242.5px;top:440.5px;" width="20" height="20" viewBox="0 0 20 20"><path d="M4 6.500H16.500V15H4Z" fill="#f0f0f0" stroke="#3a3a3a"/><rect x="2.500" y="13.500" width="3" height="3" fill="#fff" stroke="#3a3a3a"/><rect x="15" y="4.500" width="3" height="3" fill="#fff" stroke="#3a3a3a"/></svg><svg style="left:242.5px;top:462.5px;" width="20" height="20" viewBox="0 0 20 20"><path d="M4 16Q4 6 16 4.500" stroke="#3a3a3a" fill="none"/><rect x="2.500" y="14.500" width="3" height="3" fill="#fff" stroke="#3a3a3a"/><rect x="14.500" y="3" width="3" height="3" fill="#fff" stroke="#3a3a3a"/><rect x="6.500" y="6.500" width="3" height="3" fill="#fff" stroke="#3a3a3a"/></svg><svg style="left:242.5px;top:484.5px;" width="20" height="20" viewBox="0 0 20 20"><circle cx="10" cy="10" r="7.500" fill="#f2f2f2" stroke="#3a3a3a"/><path d="M10 10L15 6" stroke="#3a3a3a"/><rect x="8.500" y="8.500" width="3" height="3" fill="#fff" stroke="#3a3a3a"/></svg><svg style="left:242.5px;top:506.5px;" width="20" height="20" viewBox="0 0 20 20"><path d="M5 8Q2 5 5.500 3.500Q8 2 10 4.500Q13 2 15.500 4.500Q18 7 15.500 9.500Q18.500 12 16 15Q13 18 10.500 15.500Q8 18.500 5 16Q1.500 13 5 8Z" fill="#f2f2f2" stroke="#3a3a3a"/></svg><svg style="left:242.5px;top:528.5px;" width="20" height="20" viewBox="0 0 20 20"><path d="M3 16Q3 6 9 9Q15 13 16.500 3" stroke="#3a3a3a" fill="none" stroke-width="1.300"/></svg><svg style="left:242.5px;top:550.5px;" width="20" height="20" viewBox="0 0 20 20"><ellipse cx="10" cy="10" rx="7.500" ry="4.500" fill="#f2f2f2" stroke="#3a3a3a"/><rect x="1.500" y="8.500" width="3" height="3" fill="#fff" stroke="#3a3a3a"/><rect x="15.500" y="8.500" width="3" height="3" fill="#fff" stroke="#3a3a3a"/><rect x="8.500" y="4" width="3" height="3" fill="#fff" stroke="#3a3a3a"/></svg><svg style="left:242.5px;top:572.5px;" width="20" height="20" viewBox="0 0 20 20"><path d="M4 11Q4 5 10 5Q16 5 16.500 10" stroke="#3a3a3a" fill="none"/><rect x="2.500" y="10" width="3" height="3" fill="#fff" stroke="#3a3a3a"/><rect x="9" y="12" width="3" height="3" fill="#fff" stroke="#3a3a3a"/></svg><svg style="left:242.5px;top:594.5px;" width="20" height="20" viewBox="0 0 20 20"><path d="M6 2.500H13L16.500 6V13H6Z" fill="#fff" stroke="#3a3a3a"/><path d="M2 10.500H13V16H2Z" fill="#eee" stroke="#3a3a3a"/><circle cx="13.500" cy="15" r="3" fill="#ddd" stroke="#3a3a3a"/><path d="M15 19L19 15V19Z" fill="#3a3a3a"/></svg><svg style="left:242.5px;top:616.5px;" width="20" height="20" viewBox="0 0 20 20"><path d="M3 7H14V14H3Z" fill="#eee" stroke="#3a3a3a"/><circle cx="15" cy="13" r="3.500" fill="#ddd" stroke="#3a3a3a"/><rect x="2" y="12.500" width="3" height="3" fill="#fff" stroke="#3a3a3a"/></svg><svg style="left:242.5px;top:638.5px;" width="20" height="20" viewBox="0 0 20 20"><rect x="8.500" y="8.500" width="2.500" height="2.500" fill="#fff" stroke="#3a3a3a"/></svg><svg style="left:242.5px;top:656px;" width="20" height="20" viewBox="0 0 20 20"><path d="M3 8H17M3 8V14M17 8V14M6 8V12M10 8V12M14 8V12M3 12H17" stroke="#3a3a3a" fill="none"/></svg>
<div style="left:269px;top:344px;width:24px;height:325px;background:#ebebeb;border-left:1px solid #444;border-right:1px solid #4c4c4c"></div><div style="left:269px;top:344px;width:24px;height:8.5px;background:#585858;border:1px solid #444;border-bottom:none"></div><svg style="left:269px;top:344px;" width="24" height="8" viewBox="0 0 24 8"><rect x="4" y="2" width="1" height="1" fill="#2a2a2a"/><rect x="4" y="4" width="1" height="1" fill="#2a2a2a"/><rect x="4" y="6" width="1" height="1" fill="#2a2a2a"/><rect x="6" y="2" width="1" height="1" fill="#2a2a2a"/><rect x="6" y="4" width="1" height="1" fill="#2a2a2a"/><rect x="6" y="6" width="1" height="1" fill="#2a2a2a"/><rect x="8" y="2" width="1" height="1" fill="#2a2a2a"/><rect x="8" y="4" width="1" height="1" fill="#2a2a2a"/><rect x="8" y="6" width="1" height="1" fill="#2a2a2a"/><rect x="10" y="2" width="1" height="1" fill="#2a2a2a"/><rect x="10" y="4" width="1" height="1" fill="#2a2a2a"/><rect x="10" y="6" width="1" height="1" fill="#2a2a2a"/><rect x="12" y="2" width="1" height="1" fill="#2a2a2a"/><rect x="12" y="4" width="1" height="1" fill="#2a2a2a"/><rect x="12" y="6" width="1" height="1" fill="#2a2a2a"/><rect x="14" y="2" width="1" height="1" fill="#2a2a2a"/><rect x="14" y="4" width="1" height="1" fill="#2a2a2a"/><rect x="14" y="6" width="1" height="1" fill="#2a2a2a"/><rect x="16" y="2" width="1" height="1" fill="#2a2a2a"/><rect x="16" y="4" width="1" height="1" fill="#2a2a2a"/><rect x="16" y="6" width="1" height="1" fill="#2a2a2a"/><rect x="18" y="2" width="1" height="1" fill="#2a2a2a"/><rect x="18" y="4" width="1" height="1" fill="#2a2a2a"/><rect x="18" y="6" width="1" height="1" fill="#2a2a2a"/></svg><svg style="left:271px;top:352.5px;" width="20" height="20" viewBox="0 0 20 20"><path d="M4 3L9 5V12L13 16V8L16 6V14L12 18L5 12Z" fill="#e8e8ea" stroke="#3a3a3a"/><path d="M9 5L13 8" stroke="#3a3a3a"/></svg><svg style="left:271px;top:374.5px;" width="20" height="20" viewBox="0 0 20 20"><path d="M3 6L6 3H17V13L14 17H3Z" fill="#eceef0" stroke="#3a3a3a" stroke-linejoin="round"/><path d="M3 6H14V17M14 6L17 3" stroke="#3a3a3a" fill="none"/><rect x="4" y="7" width="9" height="9" fill="#d7d9dd"/></svg><svg style="left:271px;top:396.5px;" width="20" height="20" viewBox="0 0 20 20"><path d="M4 3L17 13L14 17H4Z" fill="#e9eaec" stroke="#3a3a3a" stroke-linejoin="round"/><path d="M4 3L14 17" stroke="#999" stroke-width=".6"/></svg><svg style="left:271px;top:418.5px;" width="20" height="20" viewBox="0 0 20 20"><path d="M10 2L17.500 15Q10 19 2.500 15Z" fill="#e9eaec" stroke="#3a3a3a" stroke-linejoin="round"/><path d="M10 3L8 17" stroke="#fff" stroke-width="1.500"/></svg><svg style="left:271px;top:440.5px;" width="20" height="20" viewBox="0 0 20 20"><circle cx="10" cy="10" r="7.500" fill="#d8dade" stroke="#3a3a3a"/><circle cx="8" cy="8" r="3.500" fill="#f4f4f6" opacity=".8"/></svg><svg style="left:271px;top:462.5px;" width="20" height="20" viewBox="0 0 20 20"><path d="M3 5Q10 1.500 17 5V15Q10 18.500 3 15Z" fill="#dfe1e4" stroke="#3a3a3a"/><path d="M3 5Q10 8.500 17 5" fill="none" stroke="#3a3a3a"/></svg><svg style="left:271px;top:484.5px;" width="20" height="20" viewBox="0 0 20 20"><circle cx="10" cy="10" r="7.500" fill="#dfe1e4" stroke="#3a3a3a"/><circle cx="10" cy="10" r="3.500" fill="#f0f0f0" stroke="#3a3a3a"/></svg><svg style="left:271px;top:506.5px;" width="20" height="20" viewBox="0 0 20 20"><path d="M10 2L17.500 14L9 18L2.500 14Z" fill="#e9eaec" stroke="#3a3a3a" stroke-linejoin="round"/><path d="M10 2L9 18" stroke="#3a3a3a" stroke-width=".7"/></svg><svg style="left:271px;top:528.5px;" width="20" height="20" viewBox="0 0 20 20"><path d="M4 5Q10 1 16 4Q10 6 4 8Q10 5 16 8Q10 10 4 12Q10 9 16 12Q10 14 4 16Q10 13 16 16" fill="none" stroke="#3a3a3a" stroke-width="1.300"/></svg><svg style="left:271px;top:550.5px;" width="20" height="20" viewBox="0 0 20 20"><path d="M2 12L10 4L18 8L10 16Z" fill="#d8dade" stroke="#888"/><path d="M6 8L14 12M6 14L14 6" stroke="#aaa" stroke-width=".6"/></svg><svg style="left:271px;top:579px;" width="20" height="20" viewBox="0 0 20 20"><path d="M3 6L6 3H17V13L14 17H3Z" fill="#bfe0f7" stroke="#2f7fc4" stroke-linejoin="round"/><path d="M3 6H14V17M14 6L17 3" stroke="#2f7fc4" fill="none"/><path d="M8.500 14V8.500M6.500 10.500L8.500 8L10.500 10.500" stroke="#3a3a3a" fill="none" stroke-width="1.200"/></svg><svg style="left:271px;top:600.5px;" width="20" height="20" viewBox="0 0 20 20"><path d="M4 10L7 7H15V14L12 17H4Z" fill="#bfe0f7" stroke="#2f7fc4" stroke-linejoin="round"/><path d="M4 10H12V17M12 10L15 7" stroke="#2f7fc4" fill="none"/><path d="M10 7V2M8 4L10 1.500L12 4" stroke="#3a3a3a" fill="none" stroke-width="1.200"/><path d="M2 18H17" stroke="#3a3a3a" stroke-width=".8"/></svg><svg style="left:271px;top:622.5px;" width="20" height="20" viewBox="0 0 20 20"><path d="M9 3Q3 3 3 8Q3 11 8 11H12Q15 11 15 13" fill="none" stroke="#2f7fc4" stroke-width="3.500"/><path d="M9 3Q3 3 3 8Q3 11 8 11H12Q15 11 15 13" fill="none" stroke="#bfe0f7" stroke-width="2"/><rect x="8.500" y="11.500" width="6" height="6" fill="#fff" stroke="#3a3a3a"/></svg><svg style="left:271px;top:644.5px;" width="20" height="20" viewBox="0 0 20 20"><path d="M3 9Q10 5 17 9V15Q10 19 3 15Z" fill="#bfe0f7" stroke="#2f7fc4"/><path d="M3 9Q10 13 17 9" fill="none" stroke="#2f7fc4"/><path d="M4 4Q10 1 15 3.500M15 3.500L12 2M15 3.500L13 5.500" stroke="#3a3a3a" fill="none" stroke-width=".9"/></svg><div style="left:272px;top:574px;width:18px;height:1px;background:#b5b5b5"></div>
<div style="left:297px;top:343.5px;width:546px;height:326px;background:#f4f3ee;border:1px solid #4a4a4a;border-top-color:#b4b4b4;border-left-color:#b4b4b4"></div>
<svg style="left:298px;top:345px;background:#212830;overflow:hidden" width="525" height="307" viewBox="298 345 525 307" shape-rendering="crispEdges" fill="none"><path d="M319.5 345L319.5 652" stroke="#18d6d6" stroke-width="1"/>
<path d="M319 430.5L334 430.5" stroke="#18d6d6" stroke-width="1"/>
<path d="M319 513.5L334 513.5" stroke="#18d6d6" stroke-width="1"/>
<path d="M319 597.5L334 597.5" stroke="#18d6d6" stroke-width="1"/>
<path d="M806.5 345L806.5 652" stroke="#18d6d6" stroke-width="1"/>
<path d="M801 430.5L807 430.5" stroke="#18d6d6" stroke-width="1"/>
<path d="M801 513.5L807 513.5" stroke="#18d6d6" stroke-width="1"/>
<path d="M801 597.5L807 597.5" stroke="#18d6d6" stroke-width="1"/>
<rect x="333.5" y="347.5" width="467.5" height="310" stroke="#ffffff" stroke-width="1" fill="none"/>
<rect x="333.5" y="347.5" width="33" height="8" stroke="#ffffff" stroke-width="1" fill="none"/>
<rect x="345" y="351" width="14" height="2" fill="#f2f21a" stroke="none"/>
<path d="M372.5 345L372.5 348" stroke="#ffffff" stroke-width="1"/>
<path d="M411.5 345L411.5 348" stroke="#ffffff" stroke-width="1"/>
<path d="M450.5 345L450.5 348" stroke="#ffffff" stroke-width="1"/>
<path d="M489.5 345L489.5 348" stroke="#ffffff" stroke-width="1"/>
<path d="M527.5 345L527.5 348" stroke="#ffffff" stroke-width="1"/>
<path d="M566.5 345L566.5 348" stroke="#ffffff" stroke-width="1"/>
<path d="M603.5 345L603.5 348" stroke="#ffffff" stroke-width="1"/>
<path d="M642.5 345L642.5 348" stroke="#ffffff" stroke-width="1"/>
<path d="M681.5 345L681.5 348" stroke="#ffffff" stroke-width="1"/>
<path d="M722.5 345L722.5 348" stroke="#ffffff" stroke-width="1"/>
<path d="M762.5 345L762.5 348" stroke="#ffffff" stroke-width="1"/>
<rect x="325" y="381" width="2" height="3" fill="#ffffff" stroke="none"/>
<rect x="325" y="465" width="2" height="3" fill="#ffffff" stroke="none"/>
<rect x="325" y="551" width="2" height="3" fill="#ffffff" stroke="none"/>
<rect x="325" y="631" width="2" height="3" fill="#ffffff" stroke="none"/>
<rect x="800" y="391" width="2" height="3" fill="#ffffff" stroke="none"/>
<rect x="800" y="474" width="2" height="3" fill="#ffffff" stroke="none"/>
<rect x="800" y="560" width="2" height="3" fill="#ffffff" stroke="none"/>
<path d="M356 364L371 357L387 364Z" stroke="#5d6470" stroke-width="0" fill="#5d6470"/>
<path d="M369.5 358L369.5 364" stroke="#aab" stroke-width="1"/>
<path d="M372.5 358L372.5 364" stroke="#aab" stroke-width="1"/>
<path d="M359.5 404L359.5 652" stroke="#1fe01f" stroke-width="1"/>
<path d="M359 404.5L440 404.5" stroke="#1fe01f" stroke-width="1"/>
<rect x="356" y="525" width="5" height="8" fill="#1fe01f" stroke="none"/>
<path d="M385 405.5L488 405.5" stroke="#c81ec8" stroke-width="2"/>
<rect x="389" y="399" width="9" height="3" fill="#c81ec8" stroke="none"/>
<path d="M385 402.5L395 402.5" stroke="#18d6d6" stroke-width="1"/>
<path d="M382 430.5L500 430.5" stroke="#c81ec8" stroke-width="3"/>
<path d="M382.5 426L382.5 435" stroke="#c81ec8" stroke-width="1"/>
<rect x="391" y="422" width="9" height="5" fill="#1fe01f" stroke="none"/>
<path d="M386 427.5L399 427.5" stroke="#18d6d6" stroke-width="1"/>
<path d="M382 532L445 532" stroke="#c81ec8" stroke-width="2"/>
<path d="M382 536.5L445 536.5" stroke="#c81ec8" stroke-width="1"/>
<path d="M382.5 528L382.5 540" stroke="#c81ec8" stroke-width="1"/>
<path d="M444.5 528L444.5 540" stroke="#c81ec8" stroke-width="1"/>
<rect x="389" y="526" width="8" height="4" fill="#1fe01f" stroke="none"/>
<rect x="421" y="527" width="8" height="3" fill="#1fe01f" stroke="none"/>
<path d="M386 530.5L396 530.5" stroke="#18d6d6" stroke-width="1"/>
<path d="M382 607L445 607" stroke="#c81ec8" stroke-width="3"/>
<path d="M382.5 603L382.5 612" stroke="#c81ec8" stroke-width="1"/>
<rect x="389" y="601" width="7" height="4" fill="#1fe01f" stroke="none"/>
<rect x="421" y="601" width="8" height="3" fill="#1fe01f" stroke="none"/>
<path d="M386 605.5L396 605.5" stroke="#18d6d6" stroke-width="1"/>
<rect x="430" y="405" width="9" height="247" fill="#2a5fd8" stroke="none"/>
<path d="M430.5 405L430.5 652" stroke="#ffffff" stroke-width="2"/>
<path d="M438.5 405L438.5 652" stroke="#ffffff" stroke-width="2"/>
<path d="M434.5 405L434.5 652" stroke="#9db8f0" stroke-width="1"/>
<path d="M430 426.5L439 426.5" stroke="#ffffff" stroke-width="1.6"/>
<path d="M430 442.5L439 442.5" stroke="#ffffff" stroke-width="1.6"/>
<path d="M430 458.5L439 458.5" stroke="#ffffff" stroke-width="1.6"/>
<path d="M430 474.5L439 474.5" stroke="#ffffff" stroke-width="1.6"/>
<path d="M430 491.5L439 491.5" stroke="#ffffff" stroke-width="1.6"/>
<path d="M430 507.5L439 507.5" stroke="#ffffff" stroke-width="1.6"/>
<path d="M430 524.5L439 524.5" stroke="#ffffff" stroke-width="1.6"/>
<path d="M430 540.5L439 540.5" stroke="#ffffff" stroke-width="1.6"/>
<path d="M430 556.5L439 556.5" stroke="#ffffff" stroke-width="1.6"/>
<path d="M430 572.5L439 572.5" stroke="#ffffff" stroke-width="1.6"/>
<path d="M430 588.5L439 588.5" stroke="#ffffff" stroke-width="1.6"/>
<path d="M430 604.5L439 604.5" stroke="#ffffff" stroke-width="1.6"/>
<path d="M430 620.5L439 620.5" stroke="#ffffff" stroke-width="1.6"/>
<path d="M430 636.5L439 636.5" stroke="#ffffff" stroke-width="1.6"/>
<path d="M426 592L428 590M441 590L443 592" stroke="#18d6d6" stroke-width="1" fill="none"/>
<rect x="422.5" y="396.5" width="65" height="8" stroke="#ffffff" stroke-width="1.6" fill="none"/>
<path d="M430 404V397Q430 389 438 389H480Q484 389 484 393V396" stroke="#ffffff" stroke-width="2" fill="none"/>
<path d="M433.5 404V398Q433.5 393 439 393H478" stroke="#ffffff" stroke-width="1.4" fill="none"/>
<path d="M437 390.5L478 390.5" stroke="#6aa0f0" stroke-width="1"/>
<rect x="443" y="394" width="20" height="3" fill="#212830" stroke="none"/>
<rect x="424" y="398" width="5" height="2" fill="#212830" stroke="none"/>
<rect x="481" y="398" width="5" height="2" fill="#212830" stroke="none"/>
<path d="M449 405L449 428" stroke="#ffffff" stroke-width="1.6"/>
<path d="M473 405L473 428" stroke="#ffffff" stroke-width="1.6"/>
<rect x="447" y="427" width="5" height="2" fill="#ffffff" stroke="none"/>
<rect x="471" y="427" width="5" height="2" fill="#ffffff" stroke="none"/>
<path d="M439 415L449 406L459 415L449 426ZM463 415L473 406L483 415L473 426Z" stroke="#ffffff" stroke-width="1.2" fill="none"/>
<path d="M449.5 409L449.5 424" stroke="#e01818" stroke-width="1"/>
<rect x="470" y="391" width="3" height="9" fill="#b07f12" stroke="none"/>
<rect x="475" y="394" width="4" height="6" fill="#e01818" stroke="none"/>
<rect x="466" y="392" width="3" height="5" fill="#1fe01f" stroke="none"/>
<path d="M423.5 405L423.5 432" stroke="#ffffff" stroke-width="1.2"/>
<path d="M426.5 405L426.5 432" stroke="#e01818" stroke-width="1"/>
<rect x="433.5" y="374.5" width="40" height="14" stroke="#1fe01f" stroke-width="1" fill="none"/>
<path d="M444.5 379L444.5 390" stroke="#1fe01f" stroke-width="1"/>
<path d="M453.5 379L453.5 390" stroke="#1fe01f" stroke-width="1"/>
<path d="M462.5 379L462.5 390" stroke="#1fe01f" stroke-width="1"/>
<path d="M444 379.5L473 379.5" stroke="#1fe01f" stroke-width="1"/>
<rect x="447" y="376" width="5" height="3" fill="#1fe01f" stroke="none"/>
<rect x="456" y="376" width="5" height="3" fill="#1fe01f" stroke="none"/>
<rect x="465" y="376" width="5" height="3" fill="#1fe01f" stroke="none"/>
<rect x="480" y="376" width="5" height="3" fill="#1fe01f" stroke="none"/>
<rect x="452" y="371" width="6" height="3" fill="#1fe01f" stroke="none"/>
<path d="M473 388.5L490 388.5" stroke="#1fe01f" stroke-width="1"/>
<path d="M478 380L474 389" stroke="#1fe01f" stroke-width="1"/>
<rect x="418" y="384" width="5" height="3" fill="#1fe01f" stroke="none"/>
<rect x="418" y="391" width="5" height="3" fill="#1fe01f" stroke="none"/>
<rect x="418" y="407" width="5" height="3" fill="#1fe01f" stroke="none"/>
<rect x="418" y="413" width="5" height="3" fill="#1fe01f" stroke="none"/>
<path d="M426 405V445M426 437H478M441 437V428M463 437V428M478 437V405M430 443H474M452 443V432" stroke="#1fe01f" stroke-width="1" fill="none"/>
<rect x="432" y="433" width="5" height="3" fill="#1fe01f" stroke="none"/>
<rect x="447" y="439" width="5" height="3" fill="#1fe01f" stroke="none"/>
<rect x="466" y="433" width="5" height="3" fill="#1fe01f" stroke="none"/>
<rect x="455" y="428" width="5" height="3" fill="#1fe01f" stroke="none"/>
<path d="M426 445L428 441M478 437L476 441" stroke="#1fe01f" stroke-width="1" fill="none"/>
<rect x="394" y="359.5" width="4" height="3" fill="#f2f21a" stroke="none"/>
<path d="M398 361L446 386" stroke="#f2f21a" stroke-width="1"/>
<rect x="394" y="371.5" width="4" height="3" fill="#f2f21a" stroke="none"/>
<path d="M398 373L452 389" stroke="#f2f21a" stroke-width="1"/>
<rect x="394" y="382.5" width="4" height="3" fill="#f2f21a" stroke="none"/>
<path d="M398 384L424 404" stroke="#f2f21a" stroke-width="1"/>
<path d="M506 369L470 389" stroke="#f2f21a" stroke-width="1"/>
<path d="M506 376L476 392" stroke="#f2f21a" stroke-width="1"/>
<rect x="505" y="367" width="4" height="3" fill="#f2f21a" stroke="none"/>
<rect x="505" y="374" width="4" height="3" fill="#f2f21a" stroke="none"/>
<rect x="505" y="409.5" width="4" height="3" fill="#f2f21a" stroke="none"/>
<path d="M505 411L462 392" stroke="#f2f21a" stroke-width="1"/>
<rect x="505" y="414.6" width="4" height="3" fill="#f2f21a" stroke="none"/>
<path d="M505 416.1L457.5 394.2" stroke="#f2f21a" stroke-width="1"/>
<rect x="505" y="419.7" width="4" height="3" fill="#f2f21a" stroke="none"/>
<path d="M505 421.2L453 396.4" stroke="#f2f21a" stroke-width="1"/>
<rect x="505" y="424.8" width="4" height="3" fill="#f2f21a" stroke="none"/>
<path d="M505 426.3L448.5 398.6" stroke="#f2f21a" stroke-width="1"/>
<rect x="505" y="429.9" width="4" height="3" fill="#f2f21a" stroke="none"/>
<path d="M505 431.4L444 400.8" stroke="#f2f21a" stroke-width="1"/>
<rect x="505" y="435" width="4" height="3" fill="#f2f21a" stroke="none"/>
<path d="M505 436.5L439.5 403" stroke="#f2f21a" stroke-width="1"/>
<rect x="505" y="440.1" width="4" height="3" fill="#f2f21a" stroke="none"/>
<path d="M505 441.6L435 405.2" stroke="#f2f21a" stroke-width="1"/>
<path d="M484 386.5H520V428H484" stroke="#1fe01f" stroke-width="1" fill="none"/>
<path d="M510.5 386L510.5 428" stroke="#1fe01f" stroke-width="1"/>
<path d="M514.5 392L514.5 404" stroke="#1fe01f" stroke-width="1"/>
<rect x="507" y="393" width="4" height="9" fill="#1fe01f" stroke="none"/>
<rect x="516" y="410" width="4" height="7" fill="#1fe01f" stroke="none"/>
<rect x="511" y="394" width="3" height="3" fill="#1fe01f" stroke="none"/>
<path d="M488 405L520 405" stroke="#1fe01f" stroke-width="1"/>
<rect x="494" y="477" width="5" height="3" fill="#1fe01f" stroke="none"/>
<path d="M496.5 475L496.5 482" stroke="#f2f21a" stroke-width="1"/>
<rect x="494" y="491" width="5" height="2" fill="#1fe01f" stroke="none"/>
<path d="M485 493.5L508 493.5" stroke="#1fe01f" stroke-width="1"/>
<rect x="460" y="514" width="4" height="2" fill="#f2f21a" stroke="none"/>
<path d="M463 515L478 509" stroke="#f2f21a" stroke-width="1"/>
<rect x="460" y="521.2" width="4" height="2" fill="#f2f21a" stroke="none"/>
<path d="M463 522.2L478 514.5" stroke="#f2f21a" stroke-width="1"/>
<rect x="460" y="528.4" width="4" height="2" fill="#f2f21a" stroke="none"/>
<path d="M463 529.4L478 520" stroke="#f2f21a" stroke-width="1"/>
<rect x="460" y="535.6" width="4" height="2" fill="#f2f21a" stroke="none"/>
<path d="M463 536.6L478 525.5" stroke="#f2f21a" stroke-width="1"/>
<rect x="460" y="542.8" width="4" height="2" fill="#f2f21a" stroke="none"/>
<path d="M463 543.8L478 531" stroke="#f2f21a" stroke-width="1"/>
<rect x="460" y="550" width="4" height="2" fill="#f2f21a" stroke="none"/>
<path d="M461.5 551L461.5 558" stroke="#f2f21a" stroke-width="1"/>
<rect x="460" y="557.2" width="4" height="2" fill="#f2f21a" stroke="none"/>
<path d="M461.5 558.2L461.5 565.2" stroke="#f2f21a" stroke-width="1"/>
<rect x="460" y="564.4" width="4" height="2" fill="#f2f21a" stroke="none"/>
<path d="M461.5 565.4L461.5 572.4" stroke="#f2f21a" stroke-width="1"/>
<path d="M461.5 551L461.5 567" stroke="#f2f21a" stroke-width="1"/>
<rect x="460" y="582" width="4" height="2" fill="#f2f21a" stroke="none"/>
<path d="M460 583L440 616" stroke="#f2f21a" stroke-width="1"/>
<rect x="460" y="588.2" width="4" height="2" fill="#f2f21a" stroke="none"/>
<path d="M460 589.2L438.5 621.5" stroke="#f2f21a" stroke-width="1"/>
<rect x="460" y="594.4" width="4" height="2" fill="#f2f21a" stroke="none"/>
<path d="M460 595.4L437 627" stroke="#f2f21a" stroke-width="1"/>
<rect x="460" y="600.6" width="4" height="2" fill="#f2f21a" stroke="none"/>
<path d="M460 601.6L435.5 632.5" stroke="#f2f21a" stroke-width="1"/>
<rect x="460" y="606.8" width="4" height="2" fill="#f2f21a" stroke="none"/>
<path d="M460 607.8L434 638" stroke="#f2f21a" stroke-width="1"/>
<rect x="460" y="613" width="4" height="2" fill="#f2f21a" stroke="none"/>
<path d="M460 614L432.5 643.5" stroke="#f2f21a" stroke-width="1"/>
<rect x="460" y="619.2" width="4" height="2" fill="#f2f21a" stroke="none"/>
<path d="M460 620.2L431 649" stroke="#f2f21a" stroke-width="1"/>
<path d="M365 652V640H459V652M371 652V622H398V640M389 652V628H426M426 640V622H458V652M403 640V628M448 652V632" stroke="#1fe01f" stroke-width="1" fill="none"/>
<rect x="363" y="646" width="4" height="4" fill="#1fe01f" stroke="none"/>
<rect x="374" y="646" width="4" height="4" fill="#1fe01f" stroke="none"/>
<rect x="382" y="620" width="4" height="4" fill="#1fe01f" stroke="none"/>
<rect x="401" y="626" width="4" height="4" fill="#1fe01f" stroke="none"/>
<rect x="415" y="641" width="4" height="4" fill="#1fe01f" stroke="none"/>
<rect x="446" y="627" width="4" height="4" fill="#1fe01f" stroke="none"/>
<rect x="452" y="644" width="4" height="4" fill="#1fe01f" stroke="none"/>
<rect x="380" y="648" width="4" height="4" fill="#1fe01f" stroke="none"/>
<rect x="436" y="646" width="4" height="4" fill="#1fe01f" stroke="none"/>
<rect x="369" y="616" width="9" height="3" fill="#f2f21a" stroke="none"/>
<path d="M378 618L386 646" stroke="#f2f21a" stroke-width="1"/>
<path d="M403 618L390 646" stroke="#f2f21a" stroke-width="1"/>
<path d="M414 618L398 646" stroke="#f2f21a" stroke-width="1"/>
<path d="M420 618L406 646" stroke="#f2f21a" stroke-width="1"/>
<rect x="402" y="615" width="3" height="2" fill="#f2f21a" stroke="none"/>
<rect x="413" y="615" width="3" height="2" fill="#f2f21a" stroke="none"/>
<rect x="419" y="615" width="3" height="2" fill="#f2f21a" stroke="none"/>
<rect x="384" y="645" width="40" height="6" fill="#ffffff" stroke="none"/>
<rect x="392" y="647" width="20" height="2" fill="#2a5fd8" stroke="none"/>
<rect x="386" y="646" width="5" height="3" fill="#18d6d6" stroke="none"/>
<rect x="410" y="644" width="4" height="2" fill="#e01818" stroke="none"/>
<rect x="422" y="636" width="12" height="15" fill="#ffffff" stroke="none"/>
<rect x="426" y="640" width="3" height="4" fill="#e01818" stroke="none"/>
<rect x="430" y="646" width="2" height="3" fill="#1fe01f" stroke="none"/>
<path d="M410 632L410 644" stroke="#f2f21a" stroke-width="2"/>
<path d="M365 628L378 640M378 628L365 640" stroke="#ffffff" stroke-width="1" fill="none"/>
<rect x="320" y="627" width="14" height="3" fill="#f2f21a" stroke="none"/>
<rect x="320" y="631" width="14" height="3" fill="#e01818" stroke="none"/>
<rect x="320" y="634" width="14" height="3" fill="#f2f21a" stroke="none"/>
<rect x="320" y="638" width="14" height="3" fill="#e01818" stroke="none"/>
<rect x="320" y="641" width="14" height="3" fill="#f2f21a" stroke="none"/>
<rect x="320" y="644" width="14" height="3" fill="#e01818" stroke="none"/>
<rect x="320" y="648" width="14" height="3" fill="#f2f21a" stroke="none"/>
<rect x="326" y="639" width="2" height="2" fill="#ffffff" stroke="none"/>
<rect x="305.5" y="636.5" width="9" height="9" stroke="#ffffff" stroke-width="1" fill="none"/>
<path d="M309.5 591L309.5 637" stroke="#ffffff" stroke-width="1"/>
<path d="M314 641.5L359 641.5" stroke="#ffffff" stroke-width="1"/>
<path d="M311 574L317 580L323 574M317 580V587" stroke="#ffffff" stroke-width="1" fill="none"/>
<rect x="528.5" y="371.5" width="32" height="19" stroke="#1fe01f" stroke-width="1" fill="none"/>
<rect x="535" y="374" width="15" height="14" stroke="#ffffff" stroke-width="3" fill="none"/>
<path d="M542.5 372L542.5 390" stroke="#e01818" stroke-width="1.4"/>
<path d="M533 381L552 381" stroke="#e01818" stroke-width="1.4"/>
<rect x="538" y="355" width="14" height="3" fill="#f2f21a" stroke="none"/>
<path d="M545 358L545 361" stroke="#f2f21a" stroke-width="2"/>
<rect x="533.5" y="364.5" width="18" height="29" stroke="#1fe01f" stroke-width="1" fill="none"/>
<rect x="540" y="363" width="4" height="5" fill="#1fe01f" stroke="none"/>
<rect x="527" y="377" width="3" height="8" fill="#1fe01f" stroke="none"/>
<rect x="553" y="375" width="5" height="8" fill="#1fe01f" stroke="none"/>
<rect x="539" y="390" width="8" height="3" fill="#1fe01f" stroke="none"/>
<rect x="554" y="389" width="5" height="3" fill="#1fe01f" stroke="none"/>
<rect x="566.5" y="369.5" width="35" height="19" stroke="#1fe01f" stroke-width="1" fill="none"/>
<rect x="575" y="372" width="17" height="14" stroke="#ffffff" stroke-width="3" fill="none"/>
<path d="M583.5 370L583.5 388" stroke="#e01818" stroke-width="1.4"/>
<path d="M573 379L594 379" stroke="#e01818" stroke-width="1.4"/>
<rect x="577" y="355" width="14" height="3" fill="#f2f21a" stroke="none"/>
<path d="M584 358L584 361" stroke="#f2f21a" stroke-width="2"/>
<rect x="573.5" y="362.5" width="21" height="31" stroke="#1fe01f" stroke-width="1" fill="none"/>
<rect x="582" y="361" width="4" height="8" fill="#1fe01f" stroke="none"/>
<rect x="566" y="375" width="4" height="7" fill="#1fe01f" stroke="none"/>
<rect x="595" y="374" width="5" height="7" fill="#1fe01f" stroke="none"/>
<rect x="579" y="389" width="8" height="3" fill="#1fe01f" stroke="none"/>
<rect x="595" y="389" width="6" height="3" fill="#1fe01f" stroke="none"/>
<path d="M593 368L599 362H601" stroke="#1fe01f" stroke-width="1" fill="none"/>
<rect x="598" y="361" width="4" height="4" fill="#1fe01f" stroke="none"/>
<rect x="542.5" y="422.5" width="35" height="33" stroke="#ffffff" stroke-width="3" fill="none"/>
<path d="M559.5 421L559.5 457" stroke="#e01818" stroke-width="1.4"/>
<path d="M541 438.5L579 438.5" stroke="#e01818" stroke-width="1.4"/>
<rect x="551.5" y="433.5" width="3" height="10" stroke="#2a5fd8" stroke-width="2" fill="none"/>
<rect x="565.5" y="433.5" width="3" height="10" stroke="#2a5fd8" stroke-width="2" fill="none"/>
<path d="M541 421V411H578V421M541 415.5H578M578 416H592V456H578M583.5 416V456M588.5 421V456" stroke="#1fe01f" stroke-width="1" fill="none"/>
<rect x="555" y="410" width="9" height="7" fill="#1fe01f" stroke="none"/>
<rect x="580" y="415" width="9" height="5" fill="#1fe01f" stroke="none"/>
<rect x="580" y="434" width="6" height="8" fill="#1fe01f" stroke="none"/>
<rect x="578" y="452" width="8" height="3" fill="#1fe01f" stroke="none"/>
<rect x="558" y="402" width="5" height="4" fill="#f2f21a" stroke="none"/>
<path d="M557 404.5L564 404.5" stroke="#18d6d6" stroke-width="1"/>
<rect x="632.5" y="370.5" width="35" height="21" stroke="#ffffff" stroke-width="3" fill="none"/>
<path d="M631 396.5L669 396.5" stroke="#ffffff" stroke-width="3"/>
<path d="M631 400.5L669 400.5" stroke="#ffffff" stroke-width="1.5"/>
<path d="M634 401V445M638 401V440L642 440M666 401V445M662 401L658 440H642M634 445H638M662 445H668" stroke="#ffffff" stroke-width="2" fill="none"/>
<path d="M649.5 365L649.5 446" stroke="#e01818" stroke-width="1.2"/>
<rect x="621.5" y="384.5" width="9" height="20" stroke="#ffffff" stroke-width="1.2" fill="none"/>
<path d="M625.5 380L625.5 408" stroke="#e01818" stroke-width="1.4"/>
<path d="M620 394.5L632 394.5" stroke="#e01818" stroke-width="1.4"/>
<rect x="622.5" y="419.5" width="12" height="12" stroke="#ffffff" stroke-width="1.4" fill="none"/>
<path d="M620 425.5L640 425.5" stroke="#e01818" stroke-width="1.4"/>
<path d="M628.5 420L628.5 432" stroke="#e01818" stroke-width="1.4"/>
<path d="M624 432L632 438" stroke="#ffffff" stroke-width="1" fill="none"/>
<rect x="664" y="429" width="3" height="8" fill="#2a5fd8" stroke="none"/>
<path d="M617 365.5H650M617 365V425M650 365V370M669 370.500H690V445M669 393H680V440M685 370V445M613 445.5H691M631 445V457H670V445M631 452.500H670M613 425V445" stroke="#1fe01f" stroke-width="1" fill="none"/>
<rect x="631" y="363" width="4" height="4" fill="#1fe01f" stroke="none"/>
<rect x="646" y="448" width="5" height="4" fill="#1fe01f" stroke="none"/>
<rect x="646" y="454" width="5" height="3" fill="#1fe01f" stroke="none"/>
<rect x="687" y="409" width="3" height="5" fill="#1fe01f" stroke="none"/>
<rect x="681" y="413" width="3" height="5" fill="#1fe01f" stroke="none"/>
<rect x="675" y="413" width="3" height="5" fill="#1fe01f" stroke="none"/>
<rect x="611" y="426" width="6" height="4" fill="#1fe01f" stroke="none"/>
<rect x="611" y="437" width="4" height="4" fill="#1fe01f" stroke="none"/>
<rect x="613" y="400" width="5" height="20" fill="#1fe01f" stroke="none"/>
<rect x="645" y="355" width="10" height="3" fill="#f2f21a" stroke="none"/>
<path d="M650 358L650 361" stroke="#f2f21a" stroke-width="2"/>
<rect x="606" y="368" width="4" height="2" fill="#f2f21a" stroke="none"/>
<path d="M610 369H612L621 385" stroke="#f2f21a" stroke-width="1" fill="none"/>
<rect x="672" y="389" width="11" height="3" fill="#f2f21a" stroke="none"/>
<path d="M666 391.5L684 391.5" stroke="#e01818" stroke-width="1"/>
<path d="M696 352.5L800 352.5" stroke="#18d6d6" stroke-width="1.5"/>
<path d="M696 355.5L800 355.5" stroke="#18d6d6" stroke-width="1.5"/>
<path d="M696 359.5L800 359.5" stroke="#18d6d6" stroke-width="1.5"/>
<path d="M696 363.5L800 363.5" stroke="#18d6d6" stroke-width="1.5"/>
<path d="M696 367.5L800 367.5" stroke="#18d6d6" stroke-width="1.5"/>
<path d="M696 370.5L800 370.5" stroke="#18d6d6" stroke-width="1.5"/>
<path d="M696 374.5L800 374.5" stroke="#18d6d6" stroke-width="1.5"/>
<path d="M696 378.5L800 378.5" stroke="#18d6d6" stroke-width="1.5"/>
<path d="M696 381.5L800 381.5" stroke="#18d6d6" stroke-width="1.5"/>
<path d="M696 385.5L800 385.5" stroke="#18d6d6" stroke-width="1.5"/>
<path d="M696 389.5L800 389.5" stroke="#18d6d6" stroke-width="1.5"/>
<path d="M696 393.5L800 393.5" stroke="#18d6d6" stroke-width="1.5"/>
<path d="M696 396.5L800 396.5" stroke="#18d6d6" stroke-width="1.5"/>
<path d="M701.5 348L701.5 400" stroke="#18d6d6" stroke-width="1"/>
<path d="M720.5 348L720.5 400" stroke="#18d6d6" stroke-width="1"/>
<path d="M741.5 348L741.5 400" stroke="#18d6d6" stroke-width="1"/>
<path d="M747.5 348L747.5 400" stroke="#18d6d6" stroke-width="1"/>
<path d="M764.5 348L764.5 400" stroke="#18d6d6" stroke-width="1"/>
<rect x="697" y="349" width="2" height="2" fill="#f2f21a" stroke="none"/>
<rect x="697" y="353" width="1" height="2" fill="#f2f21a" stroke="none"/>
<rect x="697" y="356" width="2" height="2" fill="#f2f21a" stroke="none"/>
<rect x="697" y="360" width="3" height="2" fill="#f2f21a" stroke="none"/>
<rect x="697" y="364" width="1" height="2" fill="#f2f21a" stroke="none"/>
<rect x="697" y="368" width="1" height="2" fill="#f2f21a" stroke="none"/>
<rect x="697" y="371" width="3" height="2" fill="#f2f21a" stroke="none"/>
<rect x="697" y="375" width="1" height="2" fill="#f2f21a" stroke="none"/>
<rect x="697" y="379" width="2" height="2" fill="#f2f21a" stroke="none"/>
<rect x="697" y="382" width="3" height="2" fill="#f2f21a" stroke="none"/>
<rect x="697" y="386" width="1" height="2" fill="#f2f21a" stroke="none"/>
<rect x="697" y="390" width="3" height="2" fill="#f2f21a" stroke="none"/>
<rect x="697" y="394" width="1" height="2" fill="#f2f21a" stroke="none"/>
<rect x="697" y="397" width="1" height="2" fill="#f2f21a" stroke="none"/>
<rect x="702" y="349" width="6" height="2" fill="#f2f21a" stroke="none"/>
<rect x="706" y="350" width="1" height="1" fill="#212830" stroke="none"/>
<rect x="702" y="353" width="6" height="2" fill="#f2f21a" stroke="none"/>
<rect x="704" y="353" width="1" height="1" fill="#212830" stroke="none"/>
<rect x="702" y="356" width="13" height="2" fill="#f2f21a" stroke="none"/>
<rect x="709" y="356" width="1" height="1" fill="#212830" stroke="none"/>
<rect x="712" y="356" width="1" height="1" fill="#212830" stroke="none"/>
<rect x="706" y="356" width="1" height="1" fill="#212830" stroke="none"/>
<rect x="702" y="360" width="14" height="2" fill="#f2f21a" stroke="none"/>
<rect x="712" y="361" width="1" height="1" fill="#212830" stroke="none"/>
<rect x="703" y="360" width="1" height="1" fill="#212830" stroke="none"/>
<rect x="703" y="360" width="1" height="1" fill="#212830" stroke="none"/>
<rect x="702" y="364" width="9" height="2" fill="#f2f21a" stroke="none"/>
<rect x="709" y="364" width="1" height="1" fill="#212830" stroke="none"/>
<rect x="704" y="365" width="1" height="1" fill="#212830" stroke="none"/>
<rect x="702" y="368" width="13" height="2" fill="#f2f21a" stroke="none"/>
<rect x="713" y="368" width="1" height="1" fill="#212830" stroke="none"/>
<rect x="704" y="368" width="1" height="1" fill="#212830" stroke="none"/>
<rect x="708" y="368" width="1" height="1" fill="#212830" stroke="none"/>
<rect x="702" y="371" width="13" height="2" fill="#f2f21a" stroke="none"/>
<rect x="714" y="371" width="1" height="1" fill="#212830" stroke="none"/>
<rect x="712" y="371" width="1" height="1" fill="#212830" stroke="none"/>
<rect x="712" y="371" width="1" height="1" fill="#212830" stroke="none"/>
<rect x="702" y="375" width="12" height="2" fill="#f2f21a" stroke="none"/>
<rect x="713" y="376" width="1" height="1" fill="#212830" stroke="none"/>
<rect x="708" y="376" width="1" height="1" fill="#212830" stroke="none"/>
<rect x="712" y="376" width="1" height="1" fill="#212830" stroke="none"/>
<rect x="702" y="379" width="10" height="2" fill="#f2f21a" stroke="none"/>
<rect x="707" y="379" width="1" height="1" fill="#212830" stroke="none"/>
<rect x="705" y="379" width="1" height="1" fill="#212830" stroke="none"/>
<rect x="702" y="382" width="6" height="2" fill="#f2f21a" stroke="none"/>
<rect x="707" y="383" width="1" height="1" fill="#212830" stroke="none"/>
<rect x="702" y="386" width="13" height="2" fill="#f2f21a" stroke="none"/>
<rect x="710" y="387" width="1" height="1" fill="#212830" stroke="none"/>
<rect x="714" y="387" width="1" height="1" fill="#212830" stroke="none"/>
<rect x="707" y="386" width="1" height="1" fill="#212830" stroke="none"/>
<rect x="702" y="390" width="6" height="2" fill="#f2f21a" stroke="none"/>
<rect x="707" y="391" width="1" height="1" fill="#212830" stroke="none"/>
<rect x="702" y="394" width="7" height="2" fill="#f2f21a" stroke="none"/>
<rect x="705" y="394" width="1" height="1" fill="#212830" stroke="none"/>
<rect x="702" y="397" width="12" height="2" fill="#f2f21a" stroke="none"/>
<rect x="709" y="397" width="1" height="1" fill="#212830" stroke="none"/>
<rect x="713" y="397" width="1" height="1" fill="#212830" stroke="none"/>
<rect x="711" y="398" width="1" height="1" fill="#212830" stroke="none"/>
<rect x="722" y="349" width="4" height="2" fill="#f2f21a" stroke="none"/>
<rect x="725" y="350" width="1" height="1" fill="#212830" stroke="none"/>
<rect x="722" y="353" width="6" height="2" fill="#f2f21a" stroke="none"/>
<rect x="726" y="354" width="1" height="1" fill="#212830" stroke="none"/>
<rect x="722" y="356" width="2" height="2" fill="#f2f21a" stroke="none"/>
<rect x="722" y="360" width="2" height="2" fill="#f2f21a" stroke="none"/>
<rect x="722" y="364" width="4" height="2" fill="#f2f21a" stroke="none"/>
<rect x="724" y="364" width="1" height="1" fill="#212830" stroke="none"/>
<rect x="722" y="368" width="2" height="2" fill="#f2f21a" stroke="none"/>
<rect x="722" y="371" width="4" height="2" fill="#f2f21a" stroke="none"/>
<rect x="725" y="372" width="1" height="1" fill="#212830" stroke="none"/>
<rect x="722" y="375" width="4" height="2" fill="#f2f21a" stroke="none"/>
<rect x="725" y="376" width="1" height="1" fill="#212830" stroke="none"/>
<rect x="722" y="379" width="4" height="2" fill="#f2f21a" stroke="none"/>
<rect x="723" y="380" width="1" height="1" fill="#212830" stroke="none"/>
<rect x="722" y="382" width="4" height="2" fill="#f2f21a" stroke="none"/>
<rect x="723" y="382" width="1" height="1" fill="#212830" stroke="none"/>
<rect x="722" y="386" width="5" height="2" fill="#f2f21a" stroke="none"/>
<rect x="723" y="386" width="1" height="1" fill="#212830" stroke="none"/>
<rect x="722" y="390" width="4" height="2" fill="#f2f21a" stroke="none"/>
<rect x="723" y="390" width="1" height="1" fill="#212830" stroke="none"/>
<rect x="722" y="394" width="5" height="2" fill="#f2f21a" stroke="none"/>
<rect x="726" y="395" width="1" height="1" fill="#212830" stroke="none"/>
<rect x="722" y="397" width="2" height="2" fill="#f2f21a" stroke="none"/>
<rect x="742" y="349" width="2" height="2" fill="#f2f21a" stroke="none"/>
<rect x="742" y="353" width="4" height="2" fill="#f2f21a" stroke="none"/>
<rect x="744" y="354" width="1" height="1" fill="#212830" stroke="none"/>
<rect x="742" y="356" width="2" height="2" fill="#f2f21a" stroke="none"/>
<rect x="742" y="360" width="4" height="2" fill="#f2f21a" stroke="none"/>
<rect x="745" y="361" width="1" height="1" fill="#212830" stroke="none"/>
<rect x="742" y="364" width="4" height="2" fill="#f2f21a" stroke="none"/>
<rect x="744" y="365" width="1" height="1" fill="#212830" stroke="none"/>
<rect x="742" y="368" width="2" height="2" fill="#f2f21a" stroke="none"/>
<rect x="742" y="371" width="2" height="2" fill="#f2f21a" stroke="none"/>
<rect x="742" y="375" width="1" height="2" fill="#f2f21a" stroke="none"/>
<rect x="742" y="379" width="2" height="2" fill="#f2f21a" stroke="none"/>
<rect x="742" y="382" width="2" height="2" fill="#f2f21a" stroke="none"/>
<rect x="742" y="386" width="2" height="2" fill="#f2f21a" stroke="none"/>
<rect x="742" y="390" width="2" height="2" fill="#f2f21a" stroke="none"/>
<rect x="742" y="394" width="1" height="2" fill="#f2f21a" stroke="none"/>
<rect x="742" y="397" width="4" height="2" fill="#f2f21a" stroke="none"/>
<rect x="745" y="397" width="1" height="1" fill="#212830" stroke="none"/>
<rect x="748" y="349" width="5" height="2" fill="#f2f21a" stroke="none"/>
<rect x="751" y="349" width="1" height="1" fill="#212830" stroke="none"/>
<rect x="748" y="353" width="4" height="2" fill="#f2f21a" stroke="none"/>
<rect x="750" y="354" width="1" height="1" fill="#212830" stroke="none"/>
<rect x="748" y="356" width="7" height="2" fill="#f2f21a" stroke="none"/>
<rect x="753" y="357" width="1" height="1" fill="#212830" stroke="none"/>
<rect x="748" y="360" width="4" height="2" fill="#f2f21a" stroke="none"/>
<rect x="751" y="360" width="1" height="1" fill="#212830" stroke="none"/>
<rect x="748" y="364" width="6" height="2" fill="#f2f21a" stroke="none"/>
<rect x="753" y="365" width="1" height="1" fill="#212830" stroke="none"/>
<rect x="748" y="368" width="6" height="2" fill="#f2f21a" stroke="none"/>
<rect x="752" y="369" width="1" height="1" fill="#212830" stroke="none"/>
<rect x="748" y="371" width="3" height="2" fill="#f2f21a" stroke="none"/>
<rect x="748" y="375" width="6" height="2" fill="#f2f21a" stroke="none"/>
<rect x="752" y="375" width="1" height="1" fill="#212830" stroke="none"/>
<rect x="748" y="379" width="4" height="2" fill="#f2f21a" stroke="none"/>
<rect x="749" y="379" width="1" height="1" fill="#212830" stroke="none"/>
<rect x="748" y="382" width="6" height="2" fill="#f2f21a" stroke="none"/>
<rect x="750" y="382" width="1" height="1" fill="#212830" stroke="none"/>
<rect x="748" y="386" width="5" height="2" fill="#f2f21a" stroke="none"/>
<rect x="749" y="386" width="1" height="1" fill="#212830" stroke="none"/>
<rect x="748" y="390" width="3" height="2" fill="#f2f21a" stroke="none"/>
<rect x="748" y="394" width="7" height="2" fill="#f2f21a" stroke="none"/>
<rect x="750" y="394" width="1" height="1" fill="#212830" stroke="none"/>
<rect x="748" y="397" width="5" height="2" fill="#f2f21a" stroke="none"/>
<rect x="749" y="397" width="1" height="1" fill="#212830" stroke="none"/>
<rect x="766" y="349" width="15" height="2" fill="#f2f21a" stroke="none"/>
<rect x="776" y="350" width="1" height="1" fill="#212830" stroke="none"/>
<rect x="769" y="350" width="1" height="1" fill="#212830" stroke="none"/>
<rect x="772" y="350" width="1" height="1" fill="#212830" stroke="none"/>
<rect x="766" y="353" width="24" height="2" fill="#f2f21a" stroke="none"/>
<rect x="770" y="353" width="1" height="1" fill="#212830" stroke="none"/>
<rect x="782" y="354" width="1" height="1" fill="#212830" stroke="none"/>
<rect x="782" y="354" width="1" height="1" fill="#212830" stroke="none"/>
<rect x="776" y="353" width="1" height="1" fill="#212830" stroke="none"/>
<rect x="771" y="353" width="1" height="1" fill="#212830" stroke="none"/>
<rect x="777" y="354" width="1" height="1" fill="#212830" stroke="none"/>
<rect x="766" y="356" width="24" height="2" fill="#f2f21a" stroke="none"/>
<rect x="789" y="356" width="1" height="1" fill="#212830" stroke="none"/>
<rect x="783" y="356" width="1" height="1" fill="#212830" stroke="none"/>
<rect x="773" y="357" width="1" height="1" fill="#212830" stroke="none"/>
<rect x="771" y="356" width="1" height="1" fill="#212830" stroke="none"/>
<rect x="783" y="357" width="1" height="1" fill="#212830" stroke="none"/>
<rect x="787" y="356" width="1" height="1" fill="#212830" stroke="none"/>
<rect x="766" y="360" width="17" height="2" fill="#f2f21a" stroke="none"/>
<rect x="778" y="360" width="1" height="1" fill="#212830" stroke="none"/>
<rect x="778" y="360" width="1" height="1" fill="#212830" stroke="none"/>
<rect x="777" y="360" width="1" height="1" fill="#212830" stroke="none"/>
<rect x="773" y="360" width="1" height="1" fill="#212830" stroke="none"/>
<rect x="766" y="364" width="21" height="2" fill="#f2f21a" stroke="none"/>
<rect x="774" y="364" width="1" height="1" fill="#212830" stroke="none"/>
<rect x="783" y="365" width="1" height="1" fill="#212830" stroke="none"/>
<rect x="778" y="364" width="1" height="1" fill="#212830" stroke="none"/>
<rect x="767" y="365" width="1" height="1" fill="#212830" stroke="none"/>
<rect x="782" y="365" width="1" height="1" fill="#212830" stroke="none"/>
<rect x="766" y="368" width="15" height="2" fill="#f2f21a" stroke="none"/>
<rect x="778" y="369" width="1" height="1" fill="#212830" stroke="none"/>
<rect x="774" y="369" width="1" height="1" fill="#212830" stroke="none"/>
<rect x="772" y="368" width="1" height="1" fill="#212830" stroke="none"/>
<rect x="766" y="371" width="16" height="2" fill="#f2f21a" stroke="none"/>
<rect x="768" y="371" width="1" height="1" fill="#212830" stroke="none"/>
<rect x="774" y="371" width="1" height="1" fill="#212830" stroke="none"/>
<rect x="772" y="371" width="1" height="1" fill="#212830" stroke="none"/>
<rect x="774" y="371" width="1" height="1" fill="#212830" stroke="none"/>
<rect x="766" y="375" width="24" height="2" fill="#f2f21a" stroke="none"/>
<rect x="787" y="376" width="1" height="1" fill="#212830" stroke="none"/>
<rect x="787" y="375" width="1" height="1" fill="#212830" stroke="none"/>
<rect x="788" y="375" width="1" height="1" fill="#212830" stroke="none"/>
<rect x="779" y="375" width="1" height="1" fill="#212830" stroke="none"/>
<rect x="782" y="375" width="1" height="1" fill="#212830" stroke="none"/>
<rect x="780" y="376" width="1" height="1" fill="#212830" stroke="none"/>
<rect x="766" y="379" width="11" height="2" fill="#f2f21a" stroke="none"/>
<rect x="773" y="380" width="1" height="1" fill="#212830" stroke="none"/>
<rect x="773" y="379" width="1" height="1" fill="#212830" stroke="none"/>
<rect x="766" y="382" width="14" height="2" fill="#f2f21a" stroke="none"/>
<rect x="769" y="382" width="1" height="1" fill="#212830" stroke="none"/>
<rect x="767" y="382" width="1" height="1" fill="#212830" stroke="none"/>
<rect x="776" y="383" width="1" height="1" fill="#212830" stroke="none"/>
<rect x="766" y="386" width="13" height="2" fill="#f2f21a" stroke="none"/>
<rect x="776" y="387" width="1" height="1" fill="#212830" stroke="none"/>
<rect x="777" y="387" width="1" height="1" fill="#212830" stroke="none"/>
<rect x="769" y="386" width="1" height="1" fill="#212830" stroke="none"/>
<rect x="766" y="390" width="9" height="2" fill="#f2f21a" stroke="none"/>
<rect x="767" y="390" width="1" height="1" fill="#212830" stroke="none"/>
<rect x="769" y="391" width="1" height="1" fill="#212830" stroke="none"/>
<rect x="766" y="394" width="15" height="2" fill="#f2f21a" stroke="none"/>
<rect x="780" y="394" width="1" height="1" fill="#212830" stroke="none"/>
<rect x="767" y="395" width="1" height="1" fill="#212830" stroke="none"/>
<rect x="770" y="395" width="1" height="1" fill="#212830" stroke="none"/>
<rect x="766" y="397" width="25" height="2" fill="#f2f21a" stroke="none"/>
<rect x="774" y="398" width="1" height="1" fill="#212830" stroke="none"/>
<rect x="775" y="398" width="1" height="1" fill="#212830" stroke="none"/>
<rect x="771" y="397" width="1" height="1" fill="#212830" stroke="none"/>
<rect x="790" y="398" width="1" height="1" fill="#212830" stroke="none"/>
<rect x="781" y="398" width="1" height="1" fill="#212830" stroke="none"/>
<rect x="783" y="397" width="1" height="1" fill="#212830" stroke="none"/>
<rect x="696.5" y="348.5" width="104" height="52" stroke="#ffffff" stroke-width="1" fill="none"/>
<path d="M696 482.5L800 482.5" stroke="#18d6d6" stroke-width="1.7"/>
<path d="M696 486.5L800 486.5" stroke="#18d6d6" stroke-width="1.7"/>
<path d="M696 491.5L800 491.5" stroke="#18d6d6" stroke-width="1.7"/>
<path d="M696 496.5L800 496.5" stroke="#18d6d6" stroke-width="1.7"/>
<path d="M696 500.5L800 500.5" stroke="#18d6d6" stroke-width="1.7"/>
<path d="M696 505.5L800 505.5" stroke="#18d6d6" stroke-width="1.7"/>
<path d="M696 510.5L800 510.5" stroke="#18d6d6" stroke-width="1.7"/>
<path d="M696 514.5L800 514.5" stroke="#18d6d6" stroke-width="1.7"/>
<path d="M696 519.5L800 519.5" stroke="#18d6d6" stroke-width="1.7"/>
<path d="M696 524.5L800 524.5" stroke="#18d6d6" stroke-width="1.7"/>
<path d="M696 528.5L800 528.5" stroke="#18d6d6" stroke-width="1.7"/>
<path d="M696 533.5L800 533.5" stroke="#18d6d6" stroke-width="1.7"/>
<path d="M696 538.5L800 538.5" stroke="#18d6d6" stroke-width="1.7"/>
<path d="M696 542.5L800 542.5" stroke="#18d6d6" stroke-width="1.7"/>
<path d="M696 547.5L800 547.5" stroke="#18d6d6" stroke-width="1.7"/>
<path d="M696 552.5L800 552.5" stroke="#18d6d6" stroke-width="1.7"/>
<path d="M696 556.5L800 556.5" stroke="#18d6d6" stroke-width="1.7"/>
<path d="M696 561.5L800 561.5" stroke="#18d6d6" stroke-width="1.7"/>
<path d="M696 565.5L800 565.5" stroke="#18d6d6" stroke-width="1.7"/>
<path d="M696 570.5L800 570.5" stroke="#18d6d6" stroke-width="1.7"/>
<path d="M696 575.5L800 575.5" stroke="#18d6d6" stroke-width="1.7"/>
<path d="M696 579.5L800 579.5" stroke="#18d6d6" stroke-width="1.7"/>
<path d="M696 584.5L800 584.5" stroke="#18d6d6" stroke-width="1.7"/>
<path d="M696 589.5L800 589.5" stroke="#18d6d6" stroke-width="1.7"/>
<path d="M696 593.5L800 593.5" stroke="#18d6d6" stroke-width="1.7"/>
<path d="M696 598.5L800 598.5" stroke="#18d6d6" stroke-width="1.7"/>
<path d="M696 603.5L800 603.5" stroke="#18d6d6" stroke-width="1.7"/>
<path d="M696 607.5L800 607.5" stroke="#18d6d6" stroke-width="1.7"/>
<path d="M696 612.5L800 612.5" stroke="#18d6d6" stroke-width="1.7"/>
<path d="M696 617.5L800 617.5" stroke="#18d6d6" stroke-width="1.7"/>
<path d="M696 621.5L800 621.5" stroke="#18d6d6" stroke-width="1.7"/>
<path d="M696 626.5L800 626.5" stroke="#18d6d6" stroke-width="1.7"/>
<path d="M696 631.5L800 631.5" stroke="#18d6d6" stroke-width="1.7"/>
<path d="M696 635.5L800 635.5" stroke="#18d6d6" stroke-width="1.7"/>
<path d="M724.5 477L724.5 640" stroke="#18d6d6" stroke-width="1"/>
<path d="M750.5 477L750.5 640" stroke="#18d6d6" stroke-width="1"/>
<path d="M754.5 477L754.5 640" stroke="#18d6d6" stroke-width="1"/>
<path d="M776.5 477L776.5 640" stroke="#18d6d6" stroke-width="1"/>
<path d="M783.5 477L783.5 640" stroke="#18d6d6" stroke-width="1"/>
<path d="M789.5 477L789.5 640" stroke="#18d6d6" stroke-width="1"/>
<rect x="697" y="478" width="12" height="3" fill="#f2f21a" stroke="none"/>
<rect x="700" y="478" width="1" height="1" fill="#212830" stroke="none"/>
<rect x="705" y="478" width="1" height="1" fill="#212830" stroke="none"/>
<rect x="707" y="478" width="1" height="1" fill="#212830" stroke="none"/>
<rect x="697" y="483" width="6" height="3" fill="#f2f21a" stroke="none"/>
<rect x="699" y="483" width="1" height="1" fill="#212830" stroke="none"/>
<rect x="697" y="487" width="11" height="3" fill="#f2f21a" stroke="none"/>
<rect x="707" y="487" width="1" height="1" fill="#212830" stroke="none"/>
<rect x="706" y="487" width="1" height="1" fill="#212830" stroke="none"/>
<rect x="697" y="492" width="9" height="3" fill="#f2f21a" stroke="none"/>
<rect x="705" y="492" width="1" height="1" fill="#212830" stroke="none"/>
<rect x="698" y="492" width="1" height="1" fill="#212830" stroke="none"/>
<rect x="697" y="497" width="7" height="3" fill="#f2f21a" stroke="none"/>
<rect x="700" y="497" width="1" height="1" fill="#212830" stroke="none"/>
<rect x="697" y="501" width="5" height="3" fill="#f2f21a" stroke="none"/>
<rect x="701" y="501" width="1" height="1" fill="#212830" stroke="none"/>
<rect x="697" y="506" width="5" height="3" fill="#f2f21a" stroke="none"/>
<rect x="701" y="507" width="1" height="1" fill="#212830" stroke="none"/>
<rect x="697" y="511" width="13" height="3" fill="#f2f21a" stroke="none"/>
<rect x="706" y="511" width="1" height="1" fill="#212830" stroke="none"/>
<rect x="709" y="512" width="1" height="1" fill="#212830" stroke="none"/>
<rect x="705" y="512" width="1" height="1" fill="#212830" stroke="none"/>
<rect x="697" y="515" width="12" height="3" fill="#f2f21a" stroke="none"/>
<rect x="701" y="516" width="1" height="1" fill="#212830" stroke="none"/>
<rect x="706" y="515" width="1" height="1" fill="#212830" stroke="none"/>
<rect x="705" y="515" width="1" height="1" fill="#212830" stroke="none"/>
<rect x="697" y="520" width="10" height="3" fill="#f2f21a" stroke="none"/>
<rect x="699" y="521" width="1" height="1" fill="#212830" stroke="none"/>
<rect x="705" y="521" width="1" height="1" fill="#212830" stroke="none"/>
<rect x="697" y="525" width="5" height="3" fill="#f2f21a" stroke="none"/>
<rect x="699" y="526" width="1" height="1" fill="#212830" stroke="none"/>
<rect x="697" y="529" width="5" height="3" fill="#f2f21a" stroke="none"/>
<rect x="699" y="530" width="1" height="1" fill="#212830" stroke="none"/>
<rect x="697" y="534" width="5" height="3" fill="#f2f21a" stroke="none"/>
<rect x="699" y="535" width="1" height="1" fill="#212830" stroke="none"/>
<rect x="697" y="539" width="6" height="3" fill="#f2f21a" stroke="none"/>
<rect x="700" y="539" width="1" height="1" fill="#212830" stroke="none"/>
<rect x="697" y="543" width="11" height="3" fill="#f2f21a" stroke="none"/>
<rect x="701" y="543" width="1" height="1" fill="#212830" stroke="none"/>
<rect x="704" y="544" width="1" height="1" fill="#212830" stroke="none"/>
<rect x="697" y="548" width="6" height="3" fill="#f2f21a" stroke="none"/>
<rect x="699" y="548" width="1" height="1" fill="#212830" stroke="none"/>
<rect x="697" y="553" width="10" height="3" fill="#f2f21a" stroke="none"/>
<rect x="706" y="554" width="1" height="1" fill="#212830" stroke="none"/>
<rect x="703" y="554" width="1" height="1" fill="#212830" stroke="none"/>
<rect x="697" y="557" width="7" height="3" fill="#f2f21a" stroke="none"/>
<rect x="700" y="558" width="1" height="1" fill="#212830" stroke="none"/>
<rect x="697" y="562" width="5" height="3" fill="#f2f21a" stroke="none"/>
<rect x="700" y="562" width="1" height="1" fill="#212830" stroke="none"/>
<rect x="697" y="566" width="9" height="3" fill="#f2f21a" stroke="none"/>
<rect x="705" y="567" width="1" height="1" fill="#212830" stroke="none"/>
<rect x="698" y="567" width="1" height="1" fill="#212830" stroke="none"/>
<rect x="697" y="571" width="9" height="3" fill="#f2f21a" stroke="none"/>
<rect x="702" y="571" width="1" height="1" fill="#212830" stroke="none"/>
<rect x="699" y="571" width="1" height="1" fill="#212830" stroke="none"/>
<rect x="697" y="576" width="5" height="3" fill="#f2f21a" stroke="none"/>
<rect x="698" y="577" width="1" height="1" fill="#212830" stroke="none"/>
<rect x="697" y="580" width="8" height="3" fill="#f2f21a" stroke="none"/>
<rect x="698" y="580" width="1" height="1" fill="#212830" stroke="none"/>
<rect x="700" y="580" width="1" height="1" fill="#212830" stroke="none"/>
<rect x="697" y="585" width="10" height="3" fill="#f2f21a" stroke="none"/>
<rect x="702" y="586" width="1" height="1" fill="#212830" stroke="none"/>
<rect x="700" y="586" width="1" height="1" fill="#212830" stroke="none"/>
<rect x="697" y="590" width="9" height="3" fill="#f2f21a" stroke="none"/>
<rect x="699" y="591" width="1" height="1" fill="#212830" stroke="none"/>
<rect x="698" y="590" width="1" height="1" fill="#212830" stroke="none"/>
<rect x="697" y="594" width="10" height="3" fill="#f2f21a" stroke="none"/>
<rect x="699" y="595" width="1" height="1" fill="#212830" stroke="none"/>
<rect x="698" y="594" width="1" height="1" fill="#212830" stroke="none"/>
<rect x="697" y="599" width="8" height="3" fill="#f2f21a" stroke="none"/>
<rect x="698" y="599" width="1" height="1" fill="#212830" stroke="none"/>
<rect x="698" y="600" width="1" height="1" fill="#212830" stroke="none"/>
<rect x="697" y="604" width="5" height="3" fill="#f2f21a" stroke="none"/>
<rect x="701" y="604" width="1" height="1" fill="#212830" stroke="none"/>
<rect x="697" y="608" width="9" height="3" fill="#f2f21a" stroke="none"/>
<rect x="704" y="609" width="1" height="1" fill="#212830" stroke="none"/>
<rect x="700" y="608" width="1" height="1" fill="#212830" stroke="none"/>
<rect x="697" y="613" width="12" height="3" fill="#f2f21a" stroke="none"/>
<rect x="701" y="613" width="1" height="1" fill="#212830" stroke="none"/>
<rect x="700" y="614" width="1" height="1" fill="#212830" stroke="none"/>
<rect x="698" y="613" width="1" height="1" fill="#212830" stroke="none"/>
<rect x="697" y="618" width="7" height="3" fill="#f2f21a" stroke="none"/>
<rect x="700" y="619" width="1" height="1" fill="#212830" stroke="none"/>
<rect x="697" y="622" width="12" height="3" fill="#f2f21a" stroke="none"/>
<rect x="701" y="623" width="1" height="1" fill="#212830" stroke="none"/>
<rect x="705" y="622" width="1" height="1" fill="#212830" stroke="none"/>
<rect x="702" y="623" width="1" height="1" fill="#212830" stroke="none"/>
<rect x="697" y="627" width="4" height="3" fill="#f2f21a" stroke="none"/>
<rect x="699" y="627" width="1" height="1" fill="#212830" stroke="none"/>
<rect x="697" y="632" width="4" height="3" fill="#f2f21a" stroke="none"/>
<rect x="698" y="632" width="1" height="1" fill="#212830" stroke="none"/>
<rect x="697" y="636" width="12" height="3" fill="#f2f21a" stroke="none"/>
<rect x="705" y="636" width="1" height="1" fill="#212830" stroke="none"/>
<rect x="705" y="636" width="1" height="1" fill="#212830" stroke="none"/>
<rect x="708" y="637" width="1" height="1" fill="#212830" stroke="none"/>
<rect x="725" y="478" width="11" height="3" fill="#f2f21a" stroke="none"/>
<rect x="734" y="479" width="1" height="1" fill="#212830" stroke="none"/>
<rect x="734" y="479" width="1" height="1" fill="#212830" stroke="none"/>
<rect x="725" y="483" width="7" height="3" fill="#f2f21a" stroke="none"/>
<rect x="727" y="484" width="1" height="1" fill="#212830" stroke="none"/>
<rect x="725" y="487" width="7" height="3" fill="#f2f21a" stroke="none"/>
<rect x="731" y="487" width="1" height="1" fill="#212830" stroke="none"/>
<rect x="725" y="492" width="10" height="3" fill="#f2f21a" stroke="none"/>
<rect x="731" y="492" width="1" height="1" fill="#212830" stroke="none"/>
<rect x="728" y="492" width="1" height="1" fill="#212830" stroke="none"/>
<rect x="725" y="497" width="5" height="3" fill="#f2f21a" stroke="none"/>
<rect x="728" y="498" width="1" height="1" fill="#212830" stroke="none"/>
<rect x="725" y="501" width="6" height="3" fill="#f2f21a" stroke="none"/>
<rect x="726" y="501" width="1" height="1" fill="#212830" stroke="none"/>
<rect x="725" y="506" width="10" height="3" fill="#f2f21a" stroke="none"/>
<rect x="734" y="507" width="1" height="1" fill="#212830" stroke="none"/>
<rect x="729" y="507" width="1" height="1" fill="#212830" stroke="none"/>
<rect x="725" y="511" width="4" height="3" fill="#f2f21a" stroke="none"/>
<rect x="727" y="511" width="1" height="1" fill="#212830" stroke="none"/>
<rect x="725" y="515" width="6" height="3" fill="#f2f21a" stroke="none"/>
<rect x="728" y="516" width="1" height="1" fill="#212830" stroke="none"/>
<rect x="725" y="520" width="4" height="3" fill="#f2f21a" stroke="none"/>
<rect x="727" y="521" width="1" height="1" fill="#212830" stroke="none"/>
<rect x="725" y="525" width="9" height="3" fill="#f2f21a" stroke="none"/>
<rect x="731" y="525" width="1" height="1" fill="#212830" stroke="none"/>
<rect x="726" y="526" width="1" height="1" fill="#212830" stroke="none"/>
<rect x="725" y="529" width="7" height="3" fill="#f2f21a" stroke="none"/>
<rect x="728" y="529" width="1" height="1" fill="#212830" stroke="none"/>
<rect x="725" y="534" width="4" height="3" fill="#f2f21a" stroke="none"/>
<rect x="727" y="535" width="1" height="1" fill="#212830" stroke="none"/>
<rect x="725" y="539" width="5" height="3" fill="#f2f21a" stroke="none"/>
<rect x="729" y="540" width="1" height="1" fill="#212830" stroke="none"/>
<rect x="725" y="543" width="12" height="3" fill="#f2f21a" stroke="none"/>
<rect x="736" y="543" width="1" height="1" fill="#212830" stroke="none"/>
<rect x="729" y="543" width="1" height="1" fill="#212830" stroke="none"/>
<rect x="727" y="544" width="1" height="1" fill="#212830" stroke="none"/>
<rect x="725" y="548" width="5" height="3" fill="#f2f21a" stroke="none"/>
<rect x="727" y="549" width="1" height="1" fill="#212830" stroke="none"/>
<rect x="725" y="553" width="13" height="3" fill="#f2f21a" stroke="none"/>
<rect x="726" y="554" width="1" height="1" fill="#212830" stroke="none"/>
<rect x="726" y="554" width="1" height="1" fill="#212830" stroke="none"/>
<rect x="730" y="553" width="1" height="1" fill="#212830" stroke="none"/>
<rect x="725" y="557" width="5" height="3" fill="#f2f21a" stroke="none"/>
<rect x="727" y="558" width="1" height="1" fill="#212830" stroke="none"/>
<rect x="725" y="562" width="9" height="3" fill="#f2f21a" stroke="none"/>
<rect x="733" y="562" width="1" height="1" fill="#212830" stroke="none"/>
<rect x="730" y="562" width="1" height="1" fill="#212830" stroke="none"/>
<rect x="725" y="566" width="4" height="3" fill="#f2f21a" stroke="none"/>
<rect x="728" y="567" width="1" height="1" fill="#212830" stroke="none"/>
<rect x="725" y="571" width="12" height="3" fill="#f2f21a" stroke="none"/>
<rect x="728" y="571" width="1" height="1" fill="#212830" stroke="none"/>
<rect x="736" y="571" width="1" height="1" fill="#212830" stroke="none"/>
<rect x="727" y="571" width="1" height="1" fill="#212830" stroke="none"/>
<rect x="725" y="576" width="4" height="3" fill="#f2f21a" stroke="none"/>
<rect x="726" y="577" width="1" height="1" fill="#212830" stroke="none"/>
<rect x="725" y="580" width="5" height="3" fill="#f2f21a" stroke="none"/>
<rect x="729" y="581" width="1" height="1" fill="#212830" stroke="none"/>
<rect x="725" y="585" width="12" height="3" fill="#f2f21a" stroke="none"/>
<rect x="726" y="585" width="1" height="1" fill="#212830" stroke="none"/>
<rect x="736" y="585" width="1" height="1" fill="#212830" stroke="none"/>
<rect x="733" y="586" width="1" height="1" fill="#212830" stroke="none"/>
<rect x="725" y="590" width="4" height="3" fill="#f2f21a" stroke="none"/>
<rect x="727" y="590" width="1" height="1" fill="#212830" stroke="none"/>
<rect x="725" y="594" width="12" height="3" fill="#f2f21a" stroke="none"/>
<rect x="734" y="594" width="1" height="1" fill="#212830" stroke="none"/>
<rect x="736" y="594" width="1" height="1" fill="#212830" stroke="none"/>
<rect x="733" y="595" width="1" height="1" fill="#212830" stroke="none"/>
<rect x="725" y="599" width="5" height="3" fill="#f2f21a" stroke="none"/>
<rect x="728" y="599" width="1" height="1" fill="#212830" stroke="none"/>
<rect x="725" y="604" width="7" height="3" fill="#f2f21a" stroke="none"/>
<rect x="727" y="605" width="1" height="1" fill="#212830" stroke="none"/>
<rect x="725" y="608" width="11" height="3" fill="#f2f21a" stroke="none"/>
<rect x="732" y="608" width="1" height="1" fill="#212830" stroke="none"/>
<rect x="733" y="609" width="1" height="1" fill="#212830" stroke="none"/>
<rect x="725" y="613" width="4" height="3" fill="#f2f21a" stroke="none"/>
<rect x="728" y="613" width="1" height="1" fill="#212830" stroke="none"/>
<rect x="725" y="618" width="5" height="3" fill="#f2f21a" stroke="none"/>
<rect x="727" y="619" width="1" height="1" fill="#212830" stroke="none"/>
<rect x="725" y="622" width="8" height="3" fill="#f2f21a" stroke="none"/>
<rect x="731" y="623" width="1" height="1" fill="#212830" stroke="none"/>
<rect x="730" y="622" width="1" height="1" fill="#212830" stroke="none"/>
<rect x="725" y="627" width="4" height="3" fill="#f2f21a" stroke="none"/>
<rect x="727" y="627" width="1" height="1" fill="#212830" stroke="none"/>
<rect x="725" y="632" width="11" height="3" fill="#f2f21a" stroke="none"/>
<rect x="730" y="632" width="1" height="1" fill="#212830" stroke="none"/>
<rect x="729" y="633" width="1" height="1" fill="#212830" stroke="none"/>
<rect x="725" y="636" width="8" height="3" fill="#f2f21a" stroke="none"/>
<rect x="731" y="637" width="1" height="1" fill="#212830" stroke="none"/>
<rect x="729" y="637" width="1" height="1" fill="#212830" stroke="none"/>
<rect x="751" y="478" width="1" height="3" fill="#f2f21a" stroke="none"/>
<rect x="751" y="483" width="0" height="3" fill="#f2f21a" stroke="none"/>
<rect x="751" y="487" width="2" height="3" fill="#f2f21a" stroke="none"/>
<rect x="751" y="492" width="0" height="3" fill="#f2f21a" stroke="none"/>
<rect x="751" y="497" width="1" height="3" fill="#f2f21a" stroke="none"/>
<rect x="751" y="501" width="0" height="3" fill="#f2f21a" stroke="none"/>
<rect x="751" y="506" width="1" height="3" fill="#f2f21a" stroke="none"/>
<rect x="751" y="511" width="0" height="3" fill="#f2f21a" stroke="none"/>
<rect x="751" y="515" width="1" height="3" fill="#f2f21a" stroke="none"/>
<rect x="751" y="520" width="1" height="3" fill="#f2f21a" stroke="none"/>
<rect x="751" y="525" width="0" height="3" fill="#f2f21a" stroke="none"/>
<rect x="751" y="529" width="2" height="3" fill="#f2f21a" stroke="none"/>
<rect x="751" y="534" width="1" height="3" fill="#f2f21a" stroke="none"/>
<rect x="751" y="539" width="1" height="3" fill="#f2f21a" stroke="none"/>
<rect x="751" y="543" width="1" height="3" fill="#f2f21a" stroke="none"/>
<rect x="751" y="548" width="0" height="3" fill="#f2f21a" stroke="none"/>
<rect x="751" y="553" width="0" height="3" fill="#f2f21a" stroke="none"/>
<rect x="751" y="557" width="0" height="3" fill="#f2f21a" stroke="none"/>
<rect x="751" y="562" width="2" height="3" fill="#f2f21a" stroke="none"/>
<rect x="751" y="566" width="0" height="3" fill="#f2f21a" stroke="none"/>
<rect x="751" y="571" width="0" height="3" fill="#f2f21a" stroke="none"/>
<rect x="751" y="576" width="2" height="3" fill="#f2f21a" stroke="none"/>
<rect x="751" y="580" width="2" height="3" fill="#f2f21a" stroke="none"/>
<rect x="751" y="585" width="1" height="3" fill="#f2f21a" stroke="none"/>
<rect x="751" y="590" width="1" height="3" fill="#f2f21a" stroke="none"/>
<rect x="751" y="594" width="0" height="3" fill="#f2f21a" stroke="none"/>
<rect x="751" y="599" width="2" height="3" fill="#f2f21a" stroke="none"/>
<rect x="751" y="604" width="2" height="3" fill="#f2f21a" stroke="none"/>
<rect x="751" y="608" width="2" height="3" fill="#f2f21a" stroke="none"/>
<rect x="751" y="613" width="1" height="3" fill="#f2f21a" stroke="none"/>
<rect x="751" y="618" width="0" height="3" fill="#f2f21a" stroke="none"/>
<rect x="751" y="622" width="2" height="3" fill="#f2f21a" stroke="none"/>
<rect x="751" y="627" width="1" height="3" fill="#f2f21a" stroke="none"/>
<rect x="751" y="632" width="0" height="3" fill="#f2f21a" stroke="none"/>
<rect x="751" y="636" width="1" height="3" fill="#f2f21a" stroke="none"/>
<rect x="790" y="478" width="4" height="3" fill="#f2f21a" stroke="none"/>
<rect x="792" y="478" width="1" height="1" fill="#212830" stroke="none"/>
<rect x="790" y="483" width="2" height="3" fill="#f2f21a" stroke="none"/>
<rect x="790" y="487" width="1" height="3" fill="#f2f21a" stroke="none"/>
<rect x="790" y="492" width="4" height="3" fill="#f2f21a" stroke="none"/>
<rect x="793" y="493" width="1" height="1" fill="#212830" stroke="none"/>
<rect x="790" y="497" width="4" height="3" fill="#f2f21a" stroke="none"/>
<rect x="792" y="497" width="1" height="1" fill="#212830" stroke="none"/>
<rect x="790" y="501" width="4" height="3" fill="#f2f21a" stroke="none"/>
<rect x="792" y="502" width="1" height="1" fill="#212830" stroke="none"/>
<rect x="790" y="506" width="3" height="3" fill="#f2f21a" stroke="none"/>
<rect x="790" y="511" width="1" height="3" fill="#f2f21a" stroke="none"/>
<rect x="790" y="515" width="3" height="3" fill="#f2f21a" stroke="none"/>
<rect x="790" y="520" width="1" height="3" fill="#f2f21a" stroke="none"/>
<rect x="790" y="525" width="3" height="3" fill="#f2f21a" stroke="none"/>
<rect x="790" y="529" width="3" height="3" fill="#f2f21a" stroke="none"/>
<rect x="790" y="534" width="4" height="3" fill="#f2f21a" stroke="none"/>
<rect x="791" y="534" width="1" height="1" fill="#212830" stroke="none"/>
<rect x="790" y="539" width="1" height="3" fill="#f2f21a" stroke="none"/>
<rect x="790" y="543" width="3" height="3" fill="#f2f21a" stroke="none"/>
<rect x="790" y="548" width="3" height="3" fill="#f2f21a" stroke="none"/>
<rect x="790" y="553" width="3" height="3" fill="#f2f21a" stroke="none"/>
<rect x="790" y="557" width="1" height="3" fill="#f2f21a" stroke="none"/>
<rect x="790" y="562" width="4" height="3" fill="#f2f21a" stroke="none"/>
<rect x="792" y="562" width="1" height="1" fill="#212830" stroke="none"/>
<rect x="790" y="566" width="3" height="3" fill="#f2f21a" stroke="none"/>
<rect x="790" y="571" width="4" height="3" fill="#f2f21a" stroke="none"/>
<rect x="792" y="571" width="1" height="1" fill="#212830" stroke="none"/>
<rect x="790" y="576" width="3" height="3" fill="#f2f21a" stroke="none"/>
<rect x="790" y="580" width="1" height="3" fill="#f2f21a" stroke="none"/>
<rect x="790" y="585" width="1" height="3" fill="#f2f21a" stroke="none"/>
<rect x="790" y="590" width="3" height="3" fill="#f2f21a" stroke="none"/>
<rect x="790" y="594" width="2" height="3" fill="#f2f21a" stroke="none"/>
<rect x="790" y="599" width="2" height="3" fill="#f2f21a" stroke="none"/>
<rect x="790" y="604" width="3" height="3" fill="#f2f21a" stroke="none"/>
<rect x="790" y="608" width="4" height="3" fill="#f2f21a" stroke="none"/>
<rect x="793" y="609" width="1" height="1" fill="#212830" stroke="none"/>
<rect x="790" y="613" width="2" height="3" fill="#f2f21a" stroke="none"/>
<rect x="790" y="618" width="3" height="3" fill="#f2f21a" stroke="none"/>
<rect x="790" y="622" width="4" height="3" fill="#f2f21a" stroke="none"/>
<rect x="791" y="623" width="1" height="1" fill="#212830" stroke="none"/>
<rect x="790" y="627" width="5" height="3" fill="#f2f21a" stroke="none"/>
<rect x="792" y="627" width="1" height="1" fill="#212830" stroke="none"/>
<rect x="790" y="632" width="1" height="3" fill="#f2f21a" stroke="none"/>
<rect x="790" y="636" width="4" height="3" fill="#f2f21a" stroke="none"/>
<rect x="792" y="636" width="1" height="1" fill="#212830" stroke="none"/>
<rect x="696.5" y="477.5" width="104" height="163" stroke="#ffffff" stroke-width="1" fill="none"/>
<rect x="696.5" y="640.5" width="104" height="8" stroke="#e01818" stroke-width="1" fill="none"/>
<path d="M724.5 640L724.5 648" stroke="#e01818" stroke-width="1"/>
<path d="M750.5 640L750.5 648" stroke="#e01818" stroke-width="1"/>
<path d="M776.5 640L776.5 648" stroke="#e01818" stroke-width="1"/>
<path d="M789.5 640L789.5 648" stroke="#e01818" stroke-width="1"/>
<rect x="698" y="643" width="4" height="4" fill="#f2f21a" stroke="none"/>
<rect x="706" y="643" width="4" height="4" fill="#f2f21a" stroke="none"/>
<rect x="712" y="643" width="4" height="4" fill="#f2f21a" stroke="none"/>
<rect x="728" y="643" width="4" height="4" fill="#f2f21a" stroke="none"/>
<rect x="736" y="643" width="4" height="4" fill="#f2f21a" stroke="none"/>
<rect x="752" y="643" width="4" height="4" fill="#f2f21a" stroke="none"/>
<rect x="760" y="643" width="4" height="4" fill="#f2f21a" stroke="none"/>
<rect x="768" y="643" width="4" height="4" fill="#f2f21a" stroke="none"/>
<rect x="778" y="643" width="4" height="4" fill="#f2f21a" stroke="none"/>
<rect x="784" y="643" width="4" height="4" fill="#f2f21a" stroke="none"/>
<rect x="792" y="643" width="4" height="4" fill="#f2f21a" stroke="none"/>
<rect x="770" y="648" width="16" height="3" fill="#f2f21a" stroke="none"/>
<rect x="704" y="421" width="8" height="2.5" fill="#f2f21a" stroke="none"/>
<rect x="704" y="423.5" width="64" height="2.5" fill="#f2f21a" stroke="none"/>
<rect x="704" y="426" width="68" height="2.5" fill="#f2f21a" stroke="none"/>
<rect x="704" y="428.5" width="66" height="2.5" fill="#f2f21a" stroke="none"/>
<rect x="704" y="431" width="64" height="2.5" fill="#f2f21a" stroke="none"/>
<rect x="704" y="433.5" width="66" height="2.5" fill="#f2f21a" stroke="none"/>
<rect x="704" y="436" width="70" height="2.5" fill="#f2f21a" stroke="none"/>
<rect x="704" y="438.5" width="74" height="2.5" fill="#f2f21a" stroke="none"/>
<rect x="704" y="441" width="76" height="2.5" fill="#f2f21a" stroke="none"/>
<rect x="704" y="443.5" width="76" height="2.5" fill="#f2f21a" stroke="none"/>
<rect x="704" y="446" width="62" height="2.5" fill="#f2f21a" stroke="none"/>
<rect x="704" y="448.5" width="54" height="2.5" fill="#f2f21a" stroke="none"/>
<rect x="740" y="436" width="1" height="1" fill="#212830" stroke="none"/>
<rect x="774" y="425" width="1" height="1" fill="#212830" stroke="none"/>
<rect x="764" y="434" width="1" height="1" fill="#212830" stroke="none"/>
<rect x="740" y="430" width="1" height="1" fill="#212830" stroke="none"/>
<rect x="737" y="433" width="2" height="1" fill="#212830" stroke="none"/>
<rect x="734" y="430" width="1" height="1" fill="#212830" stroke="none"/>
<rect x="775" y="442" width="1" height="1" fill="#212830" stroke="none"/>
<rect x="719" y="426" width="2" height="1" fill="#212830" stroke="none"/>
<rect x="724" y="423" width="1" height="1" fill="#212830" stroke="none"/>
<rect x="768" y="449" width="1" height="1" fill="#212830" stroke="none"/>
<rect x="774" y="428" width="1" height="1" fill="#212830" stroke="none"/>
<rect x="746" y="445" width="1" height="1" fill="#212830" stroke="none"/>
<rect x="758" y="425" width="2" height="1" fill="#212830" stroke="none"/>
<rect x="728" y="428" width="1" height="1" fill="#212830" stroke="none"/>
<rect x="726" y="431" width="2" height="1" fill="#212830" stroke="none"/>
<rect x="715" y="431" width="1" height="1" fill="#212830" stroke="none"/>
<rect x="751" y="429" width="2" height="1" fill="#212830" stroke="none"/>
<rect x="729" y="449" width="1" height="1" fill="#212830" stroke="none"/>
<rect x="756" y="433" width="1" height="1" fill="#212830" stroke="none"/>
<rect x="771" y="427" width="1" height="1" fill="#212830" stroke="none"/>
<rect x="738" y="431" width="1" height="1" fill="#212830" stroke="none"/>
<rect x="767" y="429" width="2" height="1" fill="#212830" stroke="none"/>
<rect x="750" y="425" width="2" height="1" fill="#212830" stroke="none"/>
<rect x="768" y="437" width="2" height="1" fill="#212830" stroke="none"/>
<rect x="731" y="423" width="1" height="1" fill="#212830" stroke="none"/>
<rect x="735" y="433" width="1" height="1" fill="#212830" stroke="none"/>
<rect x="761" y="434" width="1" height="1" fill="#212830" stroke="none"/>
<rect x="706" y="425" width="1" height="1" fill="#212830" stroke="none"/>
<rect x="758" y="443" width="1" height="1" fill="#212830" stroke="none"/>
<rect x="766" y="421" width="1" height="1" fill="#212830" stroke="none"/>
<rect x="754" y="447" width="2" height="1" fill="#212830" stroke="none"/>
<rect x="763" y="435" width="1" height="1" fill="#212830" stroke="none"/>
<rect x="717" y="428" width="1" height="1" fill="#212830" stroke="none"/>
<rect x="723" y="437" width="2" height="1" fill="#212830" stroke="none"/>
<rect x="717" y="447" width="2" height="1" fill="#212830" stroke="none"/>
<rect x="762" y="423" width="2" height="1" fill="#212830" stroke="none"/>
<rect x="709" y="421" width="1" height="1" fill="#212830" stroke="none"/>
<rect x="733" y="439" width="1" height="1" fill="#212830" stroke="none"/>
<rect x="742" y="425" width="2" height="1" fill="#212830" stroke="none"/>
<rect x="736" y="437" width="2" height="1" fill="#212830" stroke="none"/>
<rect x="759" y="443" width="1" height="1" fill="#212830" stroke="none"/>
<rect x="716" y="423" width="1" height="1" fill="#212830" stroke="none"/>
<rect x="771" y="439" width="1" height="1" fill="#212830" stroke="none"/>
<rect x="753" y="429" width="1" height="1" fill="#212830" stroke="none"/>
<rect x="704" y="421" width="2" height="1" fill="#212830" stroke="none"/>
<rect x="742" y="435" width="1" height="1" fill="#212830" stroke="none"/>
<rect x="744" y="441" width="1" height="1" fill="#212830" stroke="none"/>
<rect x="764" y="437" width="1" height="1" fill="#212830" stroke="none"/>
<rect x="774" y="428" width="1" height="1" fill="#212830" stroke="none"/>
<rect x="756" y="443" width="2" height="1" fill="#212830" stroke="none"/>
<rect x="743" y="422" width="1" height="1" fill="#212830" stroke="none"/>
<rect x="728" y="436" width="2" height="1" fill="#212830" stroke="none"/>
<rect x="757" y="423" width="1" height="1" fill="#212830" stroke="none"/>
<rect x="733" y="442" width="1" height="1" fill="#212830" stroke="none"/>
<rect x="751" y="428" width="1" height="1" fill="#212830" stroke="none"/>
<rect x="708" y="443" width="1" height="1" fill="#212830" stroke="none"/>
<rect x="757" y="432" width="2" height="1" fill="#212830" stroke="none"/>
<rect x="754" y="427" width="1" height="1" fill="#212830" stroke="none"/>
<rect x="741" y="444" width="2" height="1" fill="#212830" stroke="none"/>
<rect x="712" y="427" width="1" height="1" fill="#212830" stroke="none"/>
<rect x="729" y="430" width="1" height="1" fill="#212830" stroke="none"/>
<rect x="733" y="435" width="1" height="1" fill="#212830" stroke="none"/>
<rect x="737" y="445" width="1" height="1" fill="#212830" stroke="none"/>
<rect x="717" y="440" width="1" height="1" fill="#212830" stroke="none"/>
<rect x="727" y="449" width="1" height="1" fill="#212830" stroke="none"/>
<rect x="766" y="434" width="2" height="1" fill="#212830" stroke="none"/>
<rect x="711" y="440" width="1" height="1" fill="#212830" stroke="none"/>
<rect x="754" y="422" width="1" height="1" fill="#212830" stroke="none"/>
<rect x="707" y="440" width="1" height="1" fill="#212830" stroke="none"/>
<rect x="757" y="422" width="2" height="1" fill="#212830" stroke="none"/>
<rect x="711" y="426" width="1" height="1" fill="#212830" stroke="none"/>
<rect x="761" y="449" width="2" height="1" fill="#212830" stroke="none"/>
<rect x="744" y="444" width="1" height="1" fill="#212830" stroke="none"/>
<rect x="714" y="426" width="1" height="1" fill="#212830" stroke="none"/>
<rect x="728" y="426" width="2" height="1" fill="#212830" stroke="none"/>
<rect x="771" y="444" width="1" height="1" fill="#212830" stroke="none"/>
<rect x="708" y="430" width="2" height="1" fill="#212830" stroke="none"/>
<rect x="752" y="447" width="1" height="1" fill="#212830" stroke="none"/>
<rect x="746" y="435" width="1" height="1" fill="#212830" stroke="none"/>
<rect x="717" y="421" width="1" height="1" fill="#212830" stroke="none"/>
<rect x="739" y="423" width="1" height="1" fill="#212830" stroke="none"/>
<rect x="757" y="449" width="1" height="1" fill="#212830" stroke="none"/>
<rect x="775" y="445" width="1" height="1" fill="#212830" stroke="none"/>
<rect x="752" y="432" width="1" height="1" fill="#212830" stroke="none"/>
<rect x="759" y="423" width="1" height="1" fill="#212830" stroke="none"/>
<rect x="764" y="427" width="1" height="1" fill="#212830" stroke="none"/>
<rect x="773" y="435" width="1" height="1" fill="#212830" stroke="none"/>
<rect x="745" y="432" width="2" height="1" fill="#212830" stroke="none"/>
<rect x="764" y="421" width="2" height="1" fill="#212830" stroke="none"/>
<rect x="756" y="428" width="2" height="1" fill="#212830" stroke="none"/>
<rect x="755" y="422" width="1" height="1" fill="#212830" stroke="none"/>
<rect x="708" y="435" width="1" height="1" fill="#212830" stroke="none"/>
<rect x="711" y="429" width="1" height="1" fill="#212830" stroke="none"/>
<rect x="712" y="449" width="2" height="1" fill="#212830" stroke="none"/>
<rect x="747" y="432" width="1" height="1" fill="#212830" stroke="none"/>
<rect x="746" y="440" width="1" height="1" fill="#212830" stroke="none"/>
<rect x="737" y="444" width="2" height="1" fill="#212830" stroke="none"/>
<rect x="744" y="429" width="1" height="1" fill="#212830" stroke="none"/>
<rect x="704" y="444" width="2" height="1" fill="#212830" stroke="none"/>
<rect x="712" y="421" width="1" height="1" fill="#212830" stroke="none"/>
<rect x="717" y="436" width="2" height="1" fill="#212830" stroke="none"/>
<rect x="763" y="445" width="1" height="1" fill="#212830" stroke="none"/>
<rect x="736" y="434" width="1" height="1" fill="#212830" stroke="none"/>
<rect x="720" y="436" width="1" height="1" fill="#212830" stroke="none"/>
<rect x="705" y="446" width="2" height="1" fill="#212830" stroke="none"/>
<rect x="742" y="447" width="2" height="1" fill="#212830" stroke="none"/>
<rect x="723" y="440" width="1" height="1" fill="#212830" stroke="none"/>
<rect x="745" y="448" width="1" height="1" fill="#212830" stroke="none"/>
<rect x="762" y="432" width="2" height="1" fill="#212830" stroke="none"/>
<rect x="714" y="437" width="1" height="1" fill="#212830" stroke="none"/>
<rect x="754" y="445" width="1" height="1" fill="#212830" stroke="none"/>
<rect x="735" y="434" width="1" height="1" fill="#212830" stroke="none"/>
<rect x="708" y="436" width="2" height="1" fill="#212830" stroke="none"/>
<rect x="773" y="431" width="1" height="1" fill="#212830" stroke="none"/>
<rect x="758" y="449" width="1" height="1" fill="#212830" stroke="none"/>
<rect x="713" y="429" width="2" height="1" fill="#212830" stroke="none"/>
<rect x="714" y="427" width="1" height="1" fill="#212830" stroke="none"/>
<rect x="757" y="436" width="2" height="1" fill="#212830" stroke="none"/>
<rect x="761" y="426" width="1" height="1" fill="#212830" stroke="none"/>
<rect x="721" y="434" width="1" height="1" fill="#212830" stroke="none"/>
<rect x="734" y="444" width="2" height="1" fill="#212830" stroke="none"/>
<rect x="719" y="445" width="1" height="1" fill="#212830" stroke="none"/>
<rect x="741" y="429" width="2" height="1" fill="#212830" stroke="none"/>
<rect x="738" y="432" width="1" height="1" fill="#212830" stroke="none"/>
<rect x="737" y="427" width="1" height="1" fill="#212830" stroke="none"/>
<rect x="735" y="426" width="1" height="1" fill="#212830" stroke="none"/>
<rect x="734" y="425" width="1" height="1" fill="#212830" stroke="none"/>
<rect x="728" y="431" width="1" height="1" fill="#212830" stroke="none"/>
<rect x="754" y="429" width="1" height="1" fill="#212830" stroke="none"/>
<rect x="768" y="437" width="1" height="1" fill="#212830" stroke="none"/>
<rect x="716" y="441" width="1" height="1" fill="#212830" stroke="none"/>
<rect x="708" y="424" width="1" height="1" fill="#212830" stroke="none"/>
<rect x="764" y="449" width="1" height="1" fill="#212830" stroke="none"/>
<rect x="761" y="432" width="1" height="1" fill="#212830" stroke="none"/>
<rect x="741" y="428" width="1" height="1" fill="#212830" stroke="none"/>
<rect x="710" y="427" width="2" height="1" fill="#212830" stroke="none"/>
<rect x="728" y="423" width="1" height="1" fill="#212830" stroke="none"/>
<rect x="769" y="448" width="1" height="1" fill="#212830" stroke="none"/>
<rect x="761" y="440" width="1" height="1" fill="#212830" stroke="none"/>
<rect x="704" y="424" width="2" height="1" fill="#212830" stroke="none"/>
<rect x="748" y="427" width="1" height="1" fill="#212830" stroke="none"/>
<rect x="751" y="431" width="1" height="1" fill="#212830" stroke="none"/>
<rect x="709" y="427" width="1" height="1" fill="#212830" stroke="none"/>
<rect x="708" y="440" width="2" height="1" fill="#212830" stroke="none"/>
<rect x="730" y="447" width="1" height="1" fill="#212830" stroke="none"/>
<rect x="745" y="434" width="2" height="1" fill="#212830" stroke="none"/>
<rect x="751" y="426" width="2" height="1" fill="#212830" stroke="none"/>
<rect x="743" y="423" width="1" height="1" fill="#212830" stroke="none"/>
<rect x="708" y="446" width="1" height="1" fill="#212830" stroke="none"/>
<rect x="774" y="436" width="1" height="1" fill="#212830" stroke="none"/>
<rect x="756" y="424" width="1" height="1" fill="#212830" stroke="none"/>
<rect x="774" y="425" width="2" height="1" fill="#212830" stroke="none"/>
<rect x="772" y="423" width="2" height="1" fill="#212830" stroke="none"/>
<rect x="724" y="433" width="2" height="1" fill="#212830" stroke="none"/>
<rect x="738" y="434" width="1" height="1" fill="#212830" stroke="none"/>
<rect x="743" y="434" width="1" height="1" fill="#212830" stroke="none"/>
<rect x="743" y="444" width="2" height="1" fill="#212830" stroke="none"/>
<rect x="749" y="434" width="1" height="1" fill="#212830" stroke="none"/>
<rect x="706" y="448" width="1" height="1" fill="#212830" stroke="none"/>
<rect x="729" y="433" width="2" height="1" fill="#212830" stroke="none"/>
<rect x="478.5" y="507.5" width="34" height="38" stroke="#ffffff" stroke-width="1.6" fill="none"/>
<path d="M480 512Q487 506 496 511Q504 506 511 512" stroke="#ffffff" stroke-width="1" fill="none"/>
<path d="M479 519L512 519" stroke="#e01818" stroke-width="1.2"/>
<path d="M479 528L512 528" stroke="#ffffff" stroke-width="1"/>
<path d="M479 538L512 538" stroke="#ffffff" stroke-width="1.5"/>
<rect x="488" y="512" width="5" height="5" fill="#2a5fd8" stroke="none"/>
<rect x="497" y="512" width="5" height="5" fill="#2a5fd8" stroke="none"/>
<rect x="487" y="534" width="6" height="6" fill="#2a5fd8" stroke="none"/>
<rect x="497" y="534" width="6" height="6" fill="#2a5fd8" stroke="none"/>
<rect x="482" y="535" width="5" height="2" fill="#e01818" stroke="none"/>
<rect x="493" y="514" width="4" height="2" fill="#e01818" stroke="none"/>
<path d="M480 497.5H510M480 497V507M510 497V507M495 495V553M480 545V552H511V545M512 505.5H540V545.5H512M523 510V545M531 510V545M512 510H536" stroke="#1fe01f" stroke-width="1" fill="none"/>
<rect x="492" y="494" width="4" height="4" fill="#1fe01f" stroke="none"/>
<rect x="492" y="548" width="4" height="4" fill="#1fe01f" stroke="none"/>
<rect x="516" y="518" width="4" height="4" fill="#1fe01f" stroke="none"/>
<rect x="521" y="527" width="4" height="4" fill="#1fe01f" stroke="none"/>
<rect x="527" y="531" width="4" height="4" fill="#1fe01f" stroke="none"/>
<rect x="536" y="527" width="4" height="4" fill="#1fe01f" stroke="none"/>
<rect x="493" y="530" width="4" height="4" fill="#1fe01f" stroke="none"/>
<rect x="493" y="540" width="4" height="4" fill="#1fe01f" stroke="none"/>
<rect x="460" y="514" width="4" height="2" fill="#f2f21a" stroke="none"/>
<rect x="460" y="521" width="4" height="2" fill="#f2f21a" stroke="none"/>
<rect x="460" y="526" width="4" height="2" fill="#f2f21a" stroke="none"/>
<rect x="460" y="531" width="4" height="2" fill="#f2f21a" stroke="none"/>
<rect x="460" y="541" width="4" height="2" fill="#f2f21a" stroke="none"/>
<rect x="460" y="546" width="4" height="2" fill="#f2f21a" stroke="none"/>
<path d="M565 544V560M565 558.5H644M571 545V553M571 550.5H636M636 545V553M641 544V565" stroke="#1fe01f" stroke-width="1" fill="none"/>
<path d="M565 544L565 560" stroke="#c81ec8" stroke-width="1"/>
<path d="M642.5 544L642.5 562" stroke="#c81ec8" stroke-width="1"/>
<rect x="570" y="549" width="4" height="3" fill="#1fe01f" stroke="none"/>
<rect x="585" y="549" width="4" height="3" fill="#1fe01f" stroke="none"/>
<rect x="603" y="549" width="4" height="3" fill="#1fe01f" stroke="none"/>
<rect x="622" y="549" width="4" height="3" fill="#1fe01f" stroke="none"/>
<rect x="634" y="549" width="4" height="3" fill="#1fe01f" stroke="none"/>
<rect x="598" y="556" width="4" height="3" fill="#1fe01f" stroke="none"/>
<rect x="586" y="526" width="3" height="12" fill="#f2f21a" stroke="none"/>
<rect x="625" y="527" width="3" height="12" fill="#f2f21a" stroke="none"/>
<rect x="603" y="537" width="8" height="3" fill="#f2f21a" stroke="none"/>
<path d="M576 538.5L632 538.5" stroke="#e01818" stroke-width="1.4"/>
<path d="M587.5 534L587.5 546" stroke="#e01818" stroke-width="1"/>
<path d="M626.5 534L626.5 546" stroke="#e01818" stroke-width="1"/>
<rect x="576.5" y="534.5" width="3" height="3" stroke="#ffffff" stroke-width="1" fill="none"/>
<rect x="591.5" y="542.5" width="3" height="3" stroke="#ffffff" stroke-width="1" fill="none"/>
<rect x="611.5" y="542.5" width="3" height="3" stroke="#ffffff" stroke-width="1" fill="none"/>
<rect x="629.5" y="534.5" width="3" height="3" stroke="#ffffff" stroke-width="1" fill="none"/>
<rect x="554" y="522" width="14" height="3" fill="#1fe01f" stroke="none"/>
<rect x="558" y="527" width="12" height="3" fill="#1fe01f" stroke="none"/>
<rect x="597" y="524" width="10" height="3" fill="#1fe01f" stroke="none"/>
<path d="M568 523H574L580 536M607 525H611L616 535" stroke="#1fe01f" stroke-width="1" fill="none"/>
<path d="M569 521.5L577 521.5" stroke="#18d6d6" stroke-width="1"/>
<rect x="589" y="513" width="12" height="3" fill="#f2f21a" stroke="none"/>
<circle cx="565.5" cy="565.5" r="2.5" stroke="#f2f21a" stroke-width="1.5" fill="none"/>
<circle cx="636.5" cy="565.5" r="2.5" stroke="#f2f21a" stroke-width="1.5" fill="none"/>
<circle cx="643.5" cy="565.5" r="2.5" stroke="#f2f21a" stroke-width="1.5" fill="none"/>
<path d="M621 483V525H672V518M621 487.500H672V483M637 487V500M655 487V500M614 505.5H680M650 515H672" stroke="#1fe01f" stroke-width="1" fill="none"/>
<rect x="625" y="484" width="4" height="4" fill="#1fe01f" stroke="none"/>
<rect x="646" y="484" width="4" height="4" fill="#1fe01f" stroke="none"/>
<rect x="664" y="484" width="4" height="4" fill="#1fe01f" stroke="none"/>
<rect x="626" y="494" width="4" height="4" fill="#1fe01f" stroke="none"/>
<rect x="614" y="503" width="4" height="4" fill="#1fe01f" stroke="none"/>
<rect x="634" y="513" width="4" height="4" fill="#1fe01f" stroke="none"/>
<rect x="650" y="521" width="4" height="4" fill="#1fe01f" stroke="none"/>
<rect x="628" y="521" width="4" height="4" fill="#1fe01f" stroke="none"/>
<rect x="663" y="514" width="4" height="4" fill="#1fe01f" stroke="none"/>
<rect x="675" y="503" width="4" height="4" fill="#1fe01f" stroke="none"/>
<rect x="623.5" y="500.5" width="9" height="9" stroke="#c81ec8" stroke-width="1.5" fill="none"/>
<rect x="653.5" y="502.5" width="6" height="6" stroke="#c81ec8" stroke-width="1.5" fill="none"/>
<rect x="667.5" y="502.5" width="6" height="6" stroke="#c81ec8" stroke-width="1.5" fill="none"/>
<path d="M629.5 498L629.5 525" stroke="#e01818" stroke-width="1.4"/>
<path d="M618 505.5L680 505.5" stroke="#e01818" stroke-width="1"/>
<rect x="655" y="489" width="3" height="12" fill="#f2f21a" stroke="none"/>
<rect x="664" y="492" width="3" height="8" fill="#f2f21a" stroke="none"/>
<rect x="669" y="489" width="3" height="12" fill="#f2f21a" stroke="none"/>
<rect x="640" y="503" width="8" height="3" fill="#f2f21a" stroke="none"/>
<path d="M487 591.5L580 591.5" stroke="#c81ec8" stroke-width="1.4"/>
<circle cx="486.5" cy="591.5" r="2.5" stroke="#f2f21a" stroke-width="1.5" fill="none"/>
<path d="M571 591V652M579 591V652M571 591.5H579M494.5 652V614H572M502 614V652M494 633.5H572M494 645H572" stroke="#1fe01f" stroke-width="1" fill="none"/>
<rect x="515" y="607" width="5" height="5" fill="#1fe01f" stroke="none"/>
<rect x="568" y="603" width="4" height="5" fill="#1fe01f" stroke="none"/>
<rect x="574" y="626" width="4" height="5" fill="#1fe01f" stroke="none"/>
<rect x="498" y="620" width="4" height="4" fill="#1fe01f" stroke="none"/>
<rect x="498" y="640" width="4" height="4" fill="#1fe01f" stroke="none"/>
<rect x="486" y="602" width="14" height="3" fill="#1fe01f" stroke="none"/>
<rect x="487" y="607" width="13" height="2" fill="#1fe01f" stroke="none"/>
<path d="M500 603H505L510 613" stroke="#1fe01f" stroke-width="1" fill="none"/>
<path d="M500 601.5L508 601.5" stroke="#18d6d6" stroke-width="1"/>
<rect x="538" y="602" width="10" height="3" fill="#1fe01f" stroke="none"/>
<path d="M548 603H552L557 613" stroke="#1fe01f" stroke-width="1" fill="none"/>
<path d="M505 620.5L566 620.5" stroke="#e01818" stroke-width="1.4"/>
<path d="M505 633.5L566 633.5" stroke="#e01818" stroke-width="1.4"/>
<path d="M505 644.5L566 644.5" stroke="#e01818" stroke-width="1.4"/>
<path d="M518.5 612L518.5 652" stroke="#e01818" stroke-width="1.4"/>
<path d="M547.5 614L547.5 652" stroke="#e01818" stroke-width="1"/>
<path d="M563.5 614L563.5 652" stroke="#e01818" stroke-width="1"/>
<rect x="513.5" y="615.5" width="10" height="10" stroke="#c81ec8" stroke-width="1.5" fill="none"/>
<rect x="513.5" y="637.5" width="10" height="10" stroke="#c81ec8" stroke-width="1.5" fill="none"/>
<rect x="545" y="625" width="2" height="14" fill="#f2f21a" stroke="none"/>
<rect x="560" y="626" width="2" height="12" fill="#f2f21a" stroke="none"/>
<rect x="500" y="619" width="9" height="3" fill="#f2f21a" stroke="none"/>
<rect x="500" y="642" width="9" height="3" fill="#f2f21a" stroke="none"/>
<rect x="509.5" y="612.5" width="3" height="3" stroke="#ffffff" stroke-width="1" fill="none"/>
<rect x="530.5" y="612.5" width="3" height="3" stroke="#ffffff" stroke-width="1" fill="none"/>
<rect x="555.5" y="612.5" width="3" height="3" stroke="#ffffff" stroke-width="1" fill="none"/>
<rect x="517" y="582" width="12" height="3" fill="#f2f21a" stroke="none"/>
<path d="M594 591.5L672 591.5" stroke="#c81ec8" stroke-width="1.4"/>
<circle cx="593.5" cy="591.5" r="2.5" stroke="#f2f21a" stroke-width="1.5" fill="none"/>
<path d="M606 591V652M612.5 596.5H677M612.5 596V652M677 596V652M612 602.5H677M677 609.5H690V652M683 609V652" stroke="#1fe01f" stroke-width="1" fill="none"/>
<path d="M620.5 596L620.5 609" stroke="#1fe01f" stroke-width="1"/>
<path d="M630.5 596L630.5 609" stroke="#1fe01f" stroke-width="1"/>
<path d="M641.5 596L641.5 609" stroke="#1fe01f" stroke-width="1"/>
<path d="M652.5 596L652.5 609" stroke="#1fe01f" stroke-width="1"/>
<path d="M663.5 596L663.5 609" stroke="#1fe01f" stroke-width="1"/>
<path d="M671.5 596L671.5 609" stroke="#1fe01f" stroke-width="1"/>
<rect x="616" y="598" width="4" height="3" fill="#1fe01f" stroke="none"/>
<rect x="625" y="598" width="4" height="3" fill="#1fe01f" stroke="none"/>
<rect x="635" y="598" width="4" height="3" fill="#1fe01f" stroke="none"/>
<rect x="646" y="598" width="4" height="3" fill="#1fe01f" stroke="none"/>
<rect x="657" y="598" width="4" height="3" fill="#1fe01f" stroke="none"/>
<rect x="667" y="598" width="4" height="3" fill="#1fe01f" stroke="none"/>
<rect x="643" y="594" width="5" height="3" fill="#1fe01f" stroke="none"/>
<rect x="624" y="615" width="46" height="10" fill="#b07f12" stroke="none"/>
<rect x="624" y="639" width="46" height="10" fill="#b07f12" stroke="none"/>
<rect x="612.5" y="609.5" width="65" height="43" stroke="#c81ec8" stroke-width="1.2" fill="none" stroke-dasharray="2 1.500"/>
<path d="M616 620.5L674 620.5" stroke="#e01818" stroke-width="1.4"/>
<path d="M616 632.5L674 632.5" stroke="#e01818" stroke-width="1.4"/>
<path d="M616 644.5L674 644.5" stroke="#e01818" stroke-width="1.4"/>
<path d="M625.5 609L625.5 652" stroke="#e01818" stroke-width="1.2"/>
<path d="M639.5 609L639.5 652" stroke="#e01818" stroke-width="1.2"/>
<path d="M653.5 609L653.5 652" stroke="#e01818" stroke-width="1.2"/>
<path d="M668.5 609L668.5 652" stroke="#e01818" stroke-width="1.2"/>
<rect x="619.5" y="615.5" width="8" height="9" stroke="#c81ec8" stroke-width="1.5" fill="none"/>
<rect x="619.5" y="639.5" width="8" height="9" stroke="#c81ec8" stroke-width="1.5" fill="none"/>
<circle cx="625.5" cy="632.5" r="3" stroke="#f2f21a" stroke-width="1.2" fill="none"/>
<rect x="651" y="625" width="2" height="14" fill="#f2f21a" stroke="none"/>
<rect x="666" y="626" width="2" height="12" fill="#f2f21a" stroke="none"/>
<rect x="595" y="614" width="4" height="2" fill="#f2f21a" stroke="none"/>
<rect x="595" y="621" width="4" height="2" fill="#f2f21a" stroke="none"/>
<path d="M599 615L618 622M599 622L618 629" stroke="#f2f21a" stroke-width="1" fill="none"/>
<rect x="634" y="582" width="18" height="3" fill="#f2f21a" stroke="none"/>
<rect x="688" y="618" width="3" height="10" fill="#1fe01f" stroke="none"/>
<rect x="680" y="630" width="3" height="8" fill="#1fe01f" stroke="none"/>
<path d="M693.5 612L693.5 652" stroke="#ffffff" stroke-width="1"/>
<rect x="690.5" y="645.5" width="6" height="6" stroke="#ffffff" stroke-width="1" fill="none"/>
<path d="M682 648.5L700 648.5" stroke="#ffffff" stroke-width="1"/></svg>
<svg style="left:745px;top:350px;" width="80" height="62" viewBox="0 0 80 62"><circle cx="40.500" cy="30" r="25" fill="none" stroke="rgba(150,155,165,.28)" stroke-width="7"/><rect x="29" y="20" width="23" height="22" fill="rgba(190,194,200,.82)" stroke="rgba(230,230,235,.6)"/></svg>
<div class="t" style="left:779px;top:351px;color:rgba(190,194,202,.75);font-size:12px">北</div>
<div class="t" style="left:805px;top:375px;color:rgba(190,194,202,.75);font-size:12px">东</div>
<div class="t" style="left:779px;top:399px;color:rgba(190,194,202,.75);font-size:12px">南</div>
<div class="t" style="left:755px;top:375px;color:rgba(190,194,202,.75);font-size:12px">西</div>
<div class="t" style="left:780px;top:374px;color:#6a7078;font-size:13px">上</div>
<div style="left:754px;top:419px;width:64px;height:16px;background:rgba(170,174,182,.72);border-radius:4px"></div>
<div class="s" style="left:760px;top:420px;color:rgba(110,115,125,.9);font-size:12px;line-height:14px"><span class="l">PXLTE...</span></div>
<svg style="left:801px;top:423px;" width="12" height="8" viewBox="0 0 12 8"><path d="M0 1H12M0 4H12M0 7H12" stroke="rgba(200,205,212,.8)"/></svg>
<div style="left:823px;top:345px;width:18px;height:307px;background:linear-gradient(90deg,#f1f0ea,#fbfbf8 50%,#f5f4ef)"></div>
<div style="left:824px;top:346px;width:16px;height:16px;background:linear-gradient(135deg,#d6e2fd,#b9cbf5);border:1px solid #eef3ff;border-radius:2px;box-shadow:0 0 0 1px #b7c8ef inset"></div><svg style="left:824px;top:346px;" width="16" height="16" viewBox="0 0 16 16"><path d="M4 10L8 6L12 10" fill="none" stroke="#4d6185" stroke-width="2.200"/></svg>
<div style="left:824px;top:636px;width:16px;height:16px;background:linear-gradient(135deg,#d6e2fd,#b9cbf5);border:1px solid #eef3ff;border-radius:2px;box-shadow:0 0 0 1px #b7c8ef inset"></div><svg style="left:824px;top:636px;" width="16" height="16" viewBox="0 0 16 16"><path d="M4 6L8 10L12 6" fill="none" stroke="#4d6185" stroke-width="2.200"/></svg>
<div style="left:824px;top:412px;width:16px;height:17px;background:linear-gradient(135deg,#d6e2fd,#b9cbf5);border:1px solid #eef3ff;border-radius:2px;box-shadow:0 0 0 1px #b7c8ef inset"></div><svg style="left:824px;top:412px;" width="16" height="17" viewBox="0 0 16 17"><path d="M5 5.5H12" stroke="#8fa8e6"/><path d="M5 6.5H12" stroke="#fff"/><path d="M5 7.5H12" stroke="#8fa8e6"/><path d="M5 8.5H12" stroke="#fff"/><path d="M5 9.5H12" stroke="#8fa8e6"/><path d="M5 10.5H12" stroke="#fff"/><path d="M5 11.5H12" stroke="#8fa8e6"/><path d="M5 12.5H12" stroke="#fff"/></svg>
<div style="left:298px;top:652px;width:525px;height:16px;background:#ece9d8"></div>
<div style="left:299px;top:653px;width:15px;height:14px;border:1px solid #c9c5b2;border-right-color:#fff;border-bottom-color:#fff;background:#ece9d8"></div>
<div style="left:315px;top:653px;width:15px;height:14px;border:1px solid #c9c5b2;border-right-color:#fff;border-bottom-color:#fff;background:#ece9d8"></div>
<div style="left:331px;top:653px;width:15px;height:14px;border:1px solid #c9c5b2;border-right-color:#fff;border-bottom-color:#fff;background:#ece9d8"></div>
<div style="left:346px;top:653px;width:15px;height:14px;border:1px solid #c9c5b2;border-right-color:#fff;border-bottom-color:#fff;background:#ece9d8"></div>
<svg style="left:299px;top:653px;" width="62" height="14" viewBox="0 0 62 14"><path d="M4.500 3V11M11 3L6 7L11 11Z" fill="#b5b2a2" stroke="#b5b2a2"/><path d="M27 3L21 7L27 11Z" fill="#b5b2a2"/><path d="M36 3L42 7L36 11Z" fill="#b5b2a2"/><path d="M50 3L56 7L50 11ZM57.500 3V11" fill="#b5b2a2" stroke="#b5b2a2"/></svg>
<div style="left:397px;top:652px;width:121px;height:16px;background:#f4f3ee"></div>
<svg style="left:360px;top:652px;" width="160" height="16" viewBox="0 0 160 16"><path d="M1 0H37L33 14Q32 16 30 16H8Q6 16 5 14Z" fill="#212830"/><path d="M95 16L100 1M150 16L155 1" fill="none" stroke="#555" stroke-width="1"/><path d="M155.500 0L150.500 16H162V0Z" fill="#ece9d8"/></svg>
<div class="t" style="left:366px;top:653px;color:#fff;font-size:12px">模型</div>
<div class="t" style="left:405px;top:653px;color:#111;font-family:'Liberation Serif',serif;font-size:12px;letter-spacing:1.1px">Layout1</div>
<div class="t" style="left:463px;top:653px;color:#111;font-family:'Liberation Serif',serif;font-size:12px;letter-spacing:1.1px">Layout2</div>
<div style="left:645px;top:652px;width:178px;height:16px;background:linear-gradient(#f1f0ea,#fbfbf8 50%,#f5f4ef)"></div>
<div style="left:645px;top:653px;width:3px;height:14px;background:#d8d5c6;border-left:1px solid #fff"></div>
<div style="left:649px;top:653px;width:16px;height:14px;background:linear-gradient(135deg,#d6e2fd,#b9cbf5);border:1px solid #eef3ff;border-radius:2px;box-shadow:0 0 0 1px #b7c8ef inset"></div><svg style="left:649px;top:653px;" width="16" height="14" viewBox="0 0 16 14"><path d="M10 3L6 7L10 11" fill="none" stroke="#4d6185" stroke-width="2.200"/></svg>
<div style="left:806px;top:653px;width:16px;height:14px;background:linear-gradient(135deg,#d6e2fd,#b9cbf5);border:1px solid #eef3ff;border-radius:2px;box-shadow:0 0 0 1px #b7c8ef inset"></div><svg style="left:806px;top:653px;" width="16" height="14" viewBox="0 0 16 14"><path d="M6 3L10 7L6 11" fill="none" stroke="#4d6185" stroke-width="2.200"/></svg>
<div style="left:720px;top:653px;width:17px;height:14px;background:linear-gradient(135deg,#d6e2fd,#b9cbf5);border:1px solid #eef3ff;border-radius:2px;box-shadow:0 0 0 1px #b7c8ef inset"></div><svg style="left:720px;top:653px;" width="17" height="14" viewBox="0 0 17 14"><path d="M5.5 5V10" stroke="#8fa8e6"/><path d="M6.5 5V10" stroke="#fff"/><path d="M7.5 5V10" stroke="#8fa8e6"/><path d="M8.5 5V10" stroke="#fff"/><path d="M9.5 5V10" stroke="#8fa8e6"/><path d="M10.5 5V10" stroke="#fff"/><path d="M11.5 5V10" stroke="#8fa8e6"/><path d="M12.5 5V10" stroke="#fff"/></svg>
<div style="left:847px;top:344px;width:24px;height:325px;background:#ebebeb;border-left:1px solid #444;border-right:1px solid #4c4c4c"></div><div style="left:847px;top:344px;width:24px;height:8.5px;background:#585858;border:1px solid #444;border-bottom:none"></div><svg style="left:847px;top:344px;" width="24" height="8" viewBox="0 0 24 8"><rect x="4" y="2" width="1" height="1" fill="#2a2a2a"/><rect x="4" y="4" width="1" height="1" fill="#2a2a2a"/><rect x="4" y="6" width="1" height="1" fill="#2a2a2a"/><rect x="6" y="2" width="1" height="1" fill="#2a2a2a"/><rect x="6" y="4" width="1" height="1" fill="#2a2a2a"/><rect x="6" y="6" width="1" height="1" fill="#2a2a2a"/><rect x="8" y="2" width="1" height="1" fill="#2a2a2a"/><rect x="8" y="4" width="1" height="1" fill="#2a2a2a"/><rect x="8" y="6" width="1" height="1" fill="#2a2a2a"/><rect x="10" y="2" width="1" height="1" fill="#2a2a2a"/><rect x="10" y="4" width="1" height="1" fill="#2a2a2a"/><rect x="10" y="6" width="1" height="1" fill="#2a2a2a"/><rect x="12" y="2" width="1" height="1" fill="#2a2a2a"/><rect x="12" y="4" width="1" height="1" fill="#2a2a2a"/><rect x="12" y="6" width="1" height="1" fill="#2a2a2a"/><rect x="14" y="2" width="1" height="1" fill="#2a2a2a"/><rect x="14" y="4" width="1" height="1" fill="#2a2a2a"/><rect x="14" y="6" width="1" height="1" fill="#2a2a2a"/><rect x="16" y="2" width="1" height="1" fill="#2a2a2a"/><rect x="16" y="4" width="1" height="1" fill="#2a2a2a"/><rect x="16" y="6" width="1" height="1" fill="#2a2a2a"/><rect x="18" y="2" width="1" height="1" fill="#2a2a2a"/><rect x="18" y="4" width="1" height="1" fill="#2a2a2a"/><rect x="18" y="6" width="1" height="1" fill="#2a2a2a"/></svg><svg style="left:849px;top:352.5px;" width="20" height="20" viewBox="0 0 20 20"><circle cx="7" cy="10" r="5.500" fill="#bfe0f7" stroke="#2f7fc4" stroke-width="1.300"/><circle cx="13" cy="10" r="5.500" fill="#bfe0f7" stroke="#2f7fc4" stroke-width="1.300"/><path d="M10 5.400Q12.500 10 10 14.600Q7.500 10 10 5.400Z" fill="#bfe0f7" stroke="#2f7fc4" stroke-width=".6"/></svg><svg style="left:849px;top:374.5px;" width="20" height="20" viewBox="0 0 20 20"><circle cx="13" cy="10" r="5.500" fill="#f6f6f6" stroke="#3a3a3a" stroke-width="1.200"/><circle cx="7" cy="10" r="5.500" fill="#bfe0f7" stroke="#2f7fc4" stroke-width="1.300"/><path d="M10 5.400Q12.500 10 10 14.600Q7.500 10 10 5.400Z" fill="#f6f6f6" stroke="#3a3a3a" stroke-width=".8"/></svg><svg style="left:849px;top:396.5px;" width="20" height="20" viewBox="0 0 20 20"><circle cx="7" cy="10" r="5.500" fill="#f6f6f6" stroke="#3a3a3a" stroke-width="1.200"/><circle cx="13" cy="10" r="5.500" fill="#f6f6f6" stroke="#3a3a3a" stroke-width="1.200"/><path d="M10 5.400Q12.500 10 10 14.600Q7.500 10 10 5.400Z" fill="#bfe0f7" stroke="#2f7fc4" stroke-width="1"/></svg><svg style="left:849px;top:424px;" width="20" height="20" viewBox="0 0 20 20"><path d="M3 7L6 4H17V13L14 17H3Z" fill="#bfe0f7" stroke="#3a3a3a" stroke-linejoin="round"/><path d="M3 7H14V17M14 7L17 4M3 12H14" stroke="#3a3a3a" fill="none"/><path d="M8.500 11V7.500M7 9L8.500 7.500L10 9" stroke="#3a3a3a" fill="none"/></svg><svg style="left:849px;top:447px;" width="20" height="20" viewBox="0 0 20 20"><path d="M9 11L11.500 8.500H17V14L14.500 17H9Z" fill="#bfe0f7" stroke="#2f7fc4"/><path d="M9 11H14.500V17M14.500 11L17 8.500" stroke="#2f7fc4" fill="none"/><path d="M5 2V10M1 6H9M5 2L3.500 3.500M5 2L6.500 3.500M5 10L3.500 8.500M5 10L6.500 8.500M1 6L2.500 4.500M1 6L2.500 7.500M9 6L7.500 4.500M9 6L7.500 7.500" stroke="#3a3a3a" fill="none" stroke-width=".9"/></svg><svg style="left:849px;top:469px;" width="20" height="20" viewBox="0 0 20 20"><path d="M3 8H13V17H3Z" fill="#fff" stroke="#2f7fc4" stroke-width="1.300"/><path d="M6 5H16V14" fill="none" stroke="#2f7fc4" stroke-width="1.300"/><path d="M3 8L6 5M13 8L16 5M13 17L16 14" stroke="#2f7fc4"/><path d="M5 10H11V15H5Z" fill="none" stroke="#3a3a3a"/></svg><svg style="left:849px;top:491px;" width="20" height="20" viewBox="0 0 20 20"><path d="M9 11L11.500 8.500H17V14L14.500 17H9Z" fill="#bfe0f7" stroke="#2f7fc4"/><path d="M9 11H14.500V17M14.500 11L17 8.500" stroke="#2f7fc4" fill="none"/><path d="M2 3L8 9M8 3L2 9" stroke="#d02020" stroke-width="1.800"/></svg><svg style="left:849px;top:511px;" width="20" height="20" viewBox="0 0 20 20"><path d="M9 11L11.500 8.500H17V14L14.500 17H9Z" fill="#bfe0f7" stroke="#2f7fc4"/><path d="M9 11H14.500V17M14.500 11L17 8.500" stroke="#2f7fc4" fill="none"/><path d="M7.500 4Q4 2 2.500 5Q2 8 5 8.500M7.500 4L5.500 2.500M7.500 4L5.500 5" stroke="#3a3a3a" fill="none"/></svg><svg style="left:849px;top:533px;" width="20" height="20" viewBox="0 0 20 20"><path d="M3 17V9L8 4L13 6V15L9 18Z" fill="#d7d9dd" stroke="#3a3a3a"/><path d="M8 4L9 18" stroke="#fff"/><path d="M16 12L13 5M13 5L13.500 8M13 5L15.500 6.500" stroke="#3a3a3a" fill="none"/></svg><svg style="left:849px;top:556px;" width="20" height="20" viewBox="0 0 20 20"><path d="M7 7L9.500 4.500H16V11L13.500 14" fill="#bfe0f7" stroke="#2f7fc4"/><path d="M3 10H12V18H3Z" fill="#bfe0f7" stroke="#2f7fc4"/><path d="M2 5Q4 2 7 3M2 5L2 2.500M2 5L4.500 4.500" fill="none" stroke="#3a3a3a"/></svg><svg style="left:849px;top:578px;" width="20" height="20" viewBox="0 0 20 20"><path d="M9 11L11.500 8.500H17V14L14.500 17H9Z" fill="#bfe0f7" stroke="#2f7fc4"/><path d="M9 11H14.500V17M14.500 11L17 8.500" stroke="#2f7fc4" fill="none"/><rect x="2" y="2" width="3" height="3" fill="#2f6fc4"/><rect x="7" y="2" width="3" height="3" fill="#b03030"/><rect x="2" y="7" width="3" height="3" fill="#d0701a"/></svg><svg style="left:849px;top:608px;" width="20" height="20" viewBox="0 0 20 20"><path d="M3 7Q3 3 8 3H14L17 6V14L13 17H3Z" fill="#c9ccd0" stroke="#3a3a3a"/><path d="M3 7Q8 6 9 10V17M9 10Q12 6 17 6" fill="none" stroke="#3a3a3a"/><path d="M3 7Q3 3 8 3Q11 3 9 10Q8 6 3 7Z" fill="#bfe0f7" stroke="#2f7fc4" stroke-width=".8"/></svg><svg style="left:849px;top:631px;" width="20" height="20" viewBox="0 0 20 20"><path d="M3 9L9 3H14L17 6V14L13 17H3Z" fill="#c9ccd0" stroke="#3a3a3a"/><path d="M3 9L9 11V17M9 11L17 6" fill="none" stroke="#3a3a3a"/><path d="M3 9L9 3L9 11Z" fill="#f4f4f4" stroke="#3a3a3a" stroke-width=".7"/></svg><svg style="left:849px;top:653px;" width="20" height="20" viewBox="0 0 20 20"><path d="M6 9L9 6H17V14L14 17H6Z" fill="#e4e5e8" stroke="#3a3a3a"/><path d="M6 9H14V17M14 9L17 6" stroke="#3a3a3a" fill="none"/><path d="M3.500 6V19" stroke="#2f7fc4" stroke-width="2"/><path d="M2 3L6 3L2 7Z" fill="#3a3a3a"/></svg><div style="left:850px;top:420px;width:18px;height:1px;background:#b5b5b5"></div><div style="left:850px;top:602px;width:18px;height:1px;background:#b5b5b5"></div>
<div style="left:875px;top:344px;width:23px;height:325px;background:#ebebeb;border-left:1px solid #444;border-right:1px solid #4c4c4c"></div><div style="left:875px;top:344px;width:23px;height:8.5px;background:#585858;border:1px solid #444;border-bottom:none"></div><svg style="left:875px;top:344px;" width="23" height="8" viewBox="0 0 23 8"><rect x="4" y="2" width="1" height="1" fill="#2a2a2a"/><rect x="4" y="4" width="1" height="1" fill="#2a2a2a"/><rect x="4" y="6" width="1" height="1" fill="#2a2a2a"/><rect x="6" y="2" width="1" height="1" fill="#2a2a2a"/><rect x="6" y="4" width="1" height="1" fill="#2a2a2a"/><rect x="6" y="6" width="1" height="1" fill="#2a2a2a"/><rect x="8" y="2" width="1" height="1" fill="#2a2a2a"/><rect x="8" y="4" width="1" height="1" fill="#2a2a2a"/><rect x="8" y="6" width="1" height="1" fill="#2a2a2a"/><rect x="10" y="2" width="1" height="1" fill="#2a2a2a"/><rect x="10" y="4" width="1" height="1" fill="#2a2a2a"/><rect x="10" y="6" width="1" height="1" fill="#2a2a2a"/><rect x="12" y="2" width="1" height="1" fill="#2a2a2a"/><rect x="12" y="4" width="1" height="1" fill="#2a2a2a"/><rect x="12" y="6" width="1" height="1" fill="#2a2a2a"/><rect x="14" y="2" width="1" height="1" fill="#2a2a2a"/><rect x="14" y="4" width="1" height="1" fill="#2a2a2a"/><rect x="14" y="6" width="1" height="1" fill="#2a2a2a"/><rect x="16" y="2" width="1" height="1" fill="#2a2a2a"/><rect x="16" y="4" width="1" height="1" fill="#2a2a2a"/><rect x="16" y="6" width="1" height="1" fill="#2a2a2a"/></svg><svg style="left:876.5px;top:353px;" width="20" height="20" viewBox="0 0 20 20"><path d="M5 13L14 3L17 5L8 15Z" fill="#e6c27a" stroke="#8a6a2a"/><path d="M5 13L8 15L6 17L3.500 15.500Z" fill="#c04a2a" stroke="#7a2a1a"/><path d="M2 18H17" stroke="#3a3a3a" stroke-width=".8"/></svg><svg style="left:876.5px;top:374.9px;" width="20" height="20" viewBox="0 0 20 20"><circle cx="5" cy="6" r="3" fill="#fff" stroke="#3a3a3a"/><circle cx="12" cy="13" r="3.500" fill="#bfe0f7" stroke="#2f7fc4"/><circle cx="15" cy="15" r="3" fill="#bfe0f7" stroke="#2f7fc4"/><path d="M10 4Q14 3 14 7M14 7L12.500 5.500M14 7L15.500 5.500" fill="none" stroke="#3a3a3a"/></svg><svg style="left:876.5px;top:396.8px;" width="20" height="20" viewBox="0 0 20 20"><path d="M10 2V18" stroke="#3a3a3a"/><path d="M8 5V16H2Z" fill="#fff" stroke="#3a3a3a"/><path d="M12 5V16H18Z" fill="#bfe0f7" stroke="#2f7fc4"/></svg><svg style="left:876.5px;top:418.7px;" width="20" height="20" viewBox="0 0 20 20"><path d="M3 14Q3 9 7 9Q7 3 11 3Q15 3 14.500 9H17V14Z" fill="none" stroke="#3a3a3a" stroke-width="1.200"/><path d="M5 16Q5 11 9 11.500Q9 6 11 6Q13 6 12.500 11.500H17" fill="none" stroke="#2f7fc4" stroke-width="1.300"/></svg><svg style="left:876.5px;top:440.6px;" width="20" height="20" viewBox="0 0 20 20"><rect x="2.500" y="2.500" width="6" height="6" fill="#fff" stroke="#3a3a3a"/><rect x="11.500" y="2.500" width="6" height="6" fill="#bfe0f7" stroke="#2f7fc4"/><rect x="2.500" y="11.500" width="6" height="6" fill="#bfe0f7" stroke="#2f7fc4"/><rect x="11.500" y="11.500" width="6" height="6" fill="#bfe0f7" stroke="#2f7fc4"/><path d="M19 15V19H15Z" fill="#3a3a3a"/></svg><svg style="left:876.5px;top:462.5px;" width="20" height="20" viewBox="0 0 20 20"><path d="M10 2V18M2 10H18M10 2L8 4.500H12ZM10 18L8 15.500H12ZM2 10L4.500 8V12ZM18 10L15.500 8V12Z" stroke="#3a3a3a" fill="#3a3a3a"/><rect x="8" y="8" width="4" height="4" fill="#fff" stroke="#3a3a3a"/></svg><svg style="left:876.5px;top:484.4px;" width="20" height="20" viewBox="0 0 20 20"><path d="M12 3.500A7 7 0 1 0 16.500 8" fill="none" stroke="#3a3a3a" stroke-width="1.400"/><path d="M10 1L13.500 3.500L10 6Z" fill="#3a3a3a"/></svg><svg style="left:876.5px;top:506.3px;" width="20" height="20" viewBox="0 0 20 20"><rect x="2.500" y="2.500" width="14" height="14" fill="#bfe0f7" stroke="#2f7fc4"/><rect x="2.500" y="9.500" width="7" height="7" fill="#fff" stroke="#3a3a3a"/></svg><svg style="left:876.5px;top:528.2px;" width="20" height="20" viewBox="0 0 20 20"><path d="M3 3H12L16 16H3Z" fill="#bfe0f7" stroke="#2f7fc4"/><path d="M3 3H10V16H3Z" fill="#fff" stroke="#3a3a3a"/><path d="M6 12H13M13 12L11 10.500M13 12L11 13.500" stroke="#3a3a3a" fill="none" stroke-width="1.300"/></svg><svg style="left:876.5px;top:550.1px;" width="20" height="20" viewBox="0 0 20 20"><path d="M2 10H7" stroke="#2f7fc4" stroke-width="1.200"/><path d="M9 10H18" stroke="#2f7fc4" stroke-dasharray="2 1.500"/><path d="M6 16L12 3" stroke="#2f7fc4" stroke-width="1.200"/></svg><svg style="left:876.5px;top:572px;" width="20" height="20" viewBox="0 0 20 20"><path d="M2 10H8" stroke="#3a3a3a" stroke-width="1.200" stroke-dasharray="2 1.500"/><path d="M8 10H13" stroke="#3a3a3a"/><path d="M11 16L17 3" stroke="#2f7fc4" stroke-width="1.200"/></svg><svg style="left:876.5px;top:593.9px;" width="20" height="20" viewBox="0 0 20 20"><path d="M3 15V5H14" fill="none" stroke="#3a3a3a" stroke-width="1.200"/><path d="M3 15H16" stroke="#3a3a3a"/><rect x="13" y="3.500" width="3" height="3" fill="#2f7fc4"/></svg><svg style="left:876.5px;top:615.8px;" width="20" height="20" viewBox="0 0 20 20"><path d="M3 6V15H17V6" fill="none" stroke="#3a3a3a" stroke-width="1.200"/><path d="M7 6H13" stroke="#3a3a3a"/><rect x="4.500" y="4.500" width="3" height="3" fill="#2f7fc4"/><rect x="12.500" y="4.500" width="3" height="3" fill="#2f7fc4"/></svg><svg style="left:876.5px;top:637.7px;" width="20" height="20" viewBox="0 0 20 20"><path d="M2 10H18M7 7L10 10L7 13M13 7L10 10L13 13" fill="none" stroke="#2f7fc4" stroke-width="1.300"/></svg><svg style="left:876.5px;top:660px;" width="20" height="20" viewBox="0 0 20 20"><path d="M3 17L10 8H17V17" fill="#e6eef8" stroke="#3a3a3a"/></svg>
<div style="left:237px;top:669px;width:668px;height:6px;background:#6b6b6b"></div>
<div style="left:237px;top:674px;width:26px;height:64px;background:linear-gradient(#6a6a6a,#4a4a4a);"></div>
<svg style="left:240px;top:677px;" width="20" height="8" viewBox="0 0 20 8"><rect x="1" y="1" width="1.500" height="1.500" fill="#8a8a8a"/><rect x="1" y="3.5" width="1.500" height="1.500" fill="#8a8a8a"/><rect x="1" y="6" width="1.500" height="1.500" fill="#8a8a8a"/><rect x="3.5" y="1" width="1.500" height="1.500" fill="#8a8a8a"/><rect x="3.5" y="3.5" width="1.500" height="1.500" fill="#8a8a8a"/><rect x="3.5" y="6" width="1.500" height="1.500" fill="#8a8a8a"/><rect x="6" y="1" width="1.500" height="1.500" fill="#8a8a8a"/><rect x="6" y="3.5" width="1.500" height="1.500" fill="#8a8a8a"/><rect x="6" y="6" width="1.500" height="1.500" fill="#8a8a8a"/><rect x="8.5" y="1" width="1.500" height="1.500" fill="#8a8a8a"/><rect x="8.5" y="3.5" width="1.500" height="1.500" fill="#8a8a8a"/><rect x="8.5" y="6" width="1.500" height="1.500" fill="#8a8a8a"/><rect x="11" y="1" width="1.500" height="1.500" fill="#8a8a8a"/><rect x="11" y="3.5" width="1.500" height="1.500" fill="#8a8a8a"/><rect x="11" y="6" width="1.500" height="1.500" fill="#8a8a8a"/><rect x="13.5" y="1" width="1.500" height="1.500" fill="#8a8a8a"/><rect x="13.5" y="3.5" width="1.500" height="1.500" fill="#8a8a8a"/><rect x="13.5" y="6" width="1.500" height="1.500" fill="#8a8a8a"/><rect x="16" y="1" width="1.500" height="1.500" fill="#8a8a8a"/><rect x="16" y="3.5" width="1.500" height="1.500" fill="#8a8a8a"/><rect x="16" y="6" width="1.500" height="1.500" fill="#8a8a8a"/><rect x="18.5" y="1" width="1.500" height="1.500" fill="#8a8a8a"/><rect x="18.5" y="3.5" width="1.500" height="1.500" fill="#8a8a8a"/><rect x="18.5" y="6" width="1.500" height="1.500" fill="#8a8a8a"/></svg>
<svg style="left:246px;top:690px;" width="10" height="10" viewBox="0 0 10 10"><path d="M1 1L9 9M9 1L1 9" stroke="#f2f2f2" stroke-width="2"/></svg>
<svg style="left:243px;top:710px;" width="14" height="12" viewBox="0 0 14 12"><path d="M2 11L8 5M8 5Q6 2 9 1L10 3L12 3Q12 6 9 6" stroke="#f2f2f2" stroke-width="2.200" fill="none"/></svg>
<div style="left:263px;top:674px;width:638px;height:33px;background:#cbcbcb"></div>
<div class="t" style="left:266px;top:692px;color:#111;font-size:12px;line-height:14px;font-weight:bold;letter-spacing:1px">命令<span class="l">:</span></div>
<div style="left:263px;top:707px;width:638px;height:24px;background:#fff;border-top:1px solid #9a9a9a"></div>
<div style="left:268px;top:711px;width:14px;height:10px;background:#e4e4e4;border:1px solid #bbb"></div>
<div class="s" style="left:302px;top:710px;color:#b4b4b4;font-size:13px;font-style:italic">键入命令</div>
<div style="left:237px;top:731px;width:668px;height:8px;background:#5a5a5a"></div>
<div style="left:862px;top:731px;width:32px;height:8px;background:#b8b8b8;border:1px solid #333"></div>
<div style="left:868px;top:734px;width:18px;height:4px;background:#444"></div>
<div style="left:216px;top:718px;width:478px;height:21px;background:#ececec;border:1px solid #4a4a4a"></div>
<div style="left:216px;top:718px;width:7px;height:21px;background:#555"></div>
<svg style="left:217px;top:721px;" width="5" height="16" viewBox="0 0 5 16"><rect x="1" y="1" width="1" height="1" fill="#222"/><rect x="1" y="3" width="1" height="1" fill="#222"/><rect x="1" y="5" width="1" height="1" fill="#222"/><rect x="1" y="7" width="1" height="1" fill="#222"/><rect x="1" y="9" width="1" height="1" fill="#222"/><rect x="1" y="11" width="1" height="1" fill="#222"/><rect x="1" y="13" width="1" height="1" fill="#222"/><rect x="1" y="15" width="1" height="1" fill="#222"/><rect x="3" y="1" width="1" height="1" fill="#222"/><rect x="3" y="3" width="1" height="1" fill="#222"/><rect x="3" y="5" width="1" height="1" fill="#222"/><rect x="3" y="7" width="1" height="1" fill="#222"/><rect x="3" y="9" width="1" height="1" fill="#222"/><rect x="3" y="11" width="1" height="1" fill="#222"/><rect x="3" y="13" width="1" height="1" fill="#222"/><rect x="3" y="15" width="1" height="1" fill="#222"/></svg>
<svg style="left:226px;top:720px;" width="22" height="20" viewBox="0 0 22 20"><path d="M4 3H13L17 7V14H4Z" fill="#fff" stroke="#444"/><circle cx="7" cy="13" r="3.500" fill="#eee" stroke="#444"/><rect x="10.500" y="10.500" width="9" height="8" fill="#f4f4f4" stroke="#444"/><path d="M12 13H18M12 15.500H18" stroke="#444"/></svg>
<div style="left:250px;top:722px;width:1px;height:16px;background:#bbb"></div>
<svg style="left:255.5px;top:721.5px;" width="19" height="19" viewBox="0 0 22 22"><path d="M3 7L7 3H19V15L15 19H3Z" fill="#f4f4f4" stroke="#3a3a3a" stroke-linejoin="round"/><path d="M3 7H15V19M15 7L19 3" stroke="#3a3a3a" fill="none"/><path d="M3 7L7 3H19L15 7Z" fill="#9aa0a8"/><path d="M3 7L7 3H19V15L15 19H3Z" fill="none" stroke="#3a3a3a" stroke-linejoin="round"/><path d="M3 7H15V19M15 7L19 3" stroke="#3a3a3a" fill="none"/></svg>
<svg style="left:278.5px;top:721.5px;" width="19" height="19" viewBox="0 0 22 22"><path d="M3 7L7 3H19V15L15 19H3Z" fill="#f4f4f4" stroke="#3a3a3a" stroke-linejoin="round"/><path d="M3 7H15V19M15 7L19 3" stroke="#3a3a3a" fill="none"/><path d="M3 19L7 15H19L15 19Z" fill="#9aa0a8"/><path d="M7 3V15H19" stroke="#888" fill="none" stroke-width=".7"/><path d="M3 7L7 3H19V15L15 19H3Z" fill="none" stroke="#3a3a3a" stroke-linejoin="round"/><path d="M3 7H15V19M15 7L19 3" stroke="#3a3a3a" fill="none"/></svg>
<svg style="left:301.5px;top:721.5px;" width="19" height="19" viewBox="0 0 22 22"><path d="M3 7L7 3H19V15L15 19H3Z" fill="#f4f4f4" stroke="#3a3a3a" stroke-linejoin="round"/><path d="M3 7H15V19M15 7L19 3" stroke="#3a3a3a" fill="none"/><path d="M3 7L7 3V15L3 19Z" fill="#9aa0a8"/><path d="M7 15H19" stroke="#888" stroke-width=".7"/><path d="M3 7L7 3H19V15L15 19H3Z" fill="none" stroke="#3a3a3a" stroke-linejoin="round"/><path d="M3 7H15V19M15 7L19 3" stroke="#3a3a3a" fill="none"/></svg>
<svg style="left:324.5px;top:721.5px;" width="19" height="19" viewBox="0 0 22 22"><path d="M3 7L7 3H19V15L15 19H3Z" fill="#f4f4f4" stroke="#3a3a3a" stroke-linejoin="round"/><path d="M3 7H15V19M15 7L19 3" stroke="#3a3a3a" fill="none"/><path d="M15 7L19 3V15L15 19Z" fill="#9aa0a8"/><path d="M7 3V15H19M7 15L3 19" stroke="#888" fill="none" stroke-width=".7"/><path d="M3 7L7 3H19V15L15 19H3Z" fill="none" stroke="#3a3a3a" stroke-linejoin="round"/><path d="M3 7H15V19M15 7L19 3" stroke="#3a3a3a" fill="none"/></svg>
<svg style="left:347.5px;top:721.5px;" width="19" height="19" viewBox="0 0 22 22"><path d="M3 7L7 3H19V15L15 19H3Z" fill="#f4f4f4" stroke="#3a3a3a" stroke-linejoin="round"/><path d="M3 7H15V19M15 7L19 3" stroke="#3a3a3a" fill="none"/><path d="M3 7H15V19H3Z" fill="#9aa0a8"/><path d="M3 7L7 3H19V15L15 19H3Z" fill="none" stroke="#3a3a3a" stroke-linejoin="round"/><path d="M3 7H15V19M15 7L19 3" stroke="#3a3a3a" fill="none"/></svg>
<svg style="left:370.5px;top:721.5px;" width="19" height="19" viewBox="0 0 22 22"><path d="M3 7L7 3H19V15L15 19H3Z" fill="#f4f4f4" stroke="#3a3a3a" stroke-linejoin="round"/><path d="M3 7H15V19M15 7L19 3" stroke="#3a3a3a" fill="none"/><path d="M7 3H19V15H7Z" fill="#8a9098"/><path d="M3 7L7 3H19V15L15 19H3Z" fill="none" stroke="#3a3a3a" stroke-linejoin="round"/><path d="M3 7H15V19M15 7L19 3" stroke="#3a3a3a" fill="none"/></svg>
<div style="left:394px;top:722px;width:1px;height:16px;background:#bbb"></div>
<svg style="left:399.5px;top:721.5px;" width="19" height="19" viewBox="0 0 22 22"><path d="M11 2L18 8L11 13L4 8Z" fill="#f4f4f4" stroke="#3a3a3a"/><path d="M4 8L11 13V20L4 14Z" fill="#9aa0a8" stroke="#3a3a3a"/><path d="M18 8L11 13V20L18 14Z" fill="#f4f4f4" stroke="#3a3a3a"/></svg>
<svg style="left:422.5px;top:721.5px;" width="19" height="19" viewBox="0 0 22 22"><path d="M11 2L18 8L11 13L4 8Z" fill="#f4f4f4" stroke="#3a3a3a"/><path d="M4 8L11 13V20L4 14Z" fill="#f4f4f4" stroke="#3a3a3a"/><path d="M18 8L11 13V20L18 14Z" fill="#9aa0a8" stroke="#3a3a3a"/></svg>
<svg style="left:445.5px;top:721.5px;" width="19" height="19" viewBox="0 0 22 22"><path d="M11 2L18 8L11 13L4 8Z" fill="#9aa0a8" stroke="#3a3a3a"/><path d="M4 8L11 13V20L4 14Z" fill="#f4f4f4" stroke="#3a3a3a"/><path d="M18 8L11 13V20L18 14Z" fill="#f4f4f4" stroke="#3a3a3a"/></svg>
<svg style="left:468.5px;top:721.5px;" width="19" height="19" viewBox="0 0 22 22"><path d="M11 2L18 8L11 13L4 8Z" fill="#9aa0a8" stroke="#3a3a3a"/><path d="M4 8L11 13V20L4 14Z" fill="#9aa0a8" stroke="#3a3a3a"/><path d="M18 8L11 13V20L18 14Z" fill="#f4f4f4" stroke="#3a3a3a"/></svg>
<div style="left:492px;top:722px;width:1px;height:16px;background:#bbb"></div>
<svg style="left:496px;top:720px;" width="22" height="20" viewBox="0 0 22 20"><rect x="3.500" y="7.500" width="14" height="10" fill="#f2f2f2" stroke="#444"/><circle cx="10.500" cy="12.500" r="3.500" fill="#fff" stroke="#444"/><path d="M6 7V5H10V7" stroke="#444" fill="none"/><circle cx="17" cy="5" r="3" fill="#f08a1e"/><path d="M17 1V9M13 5H21M14 2L20 8M20 2L14 8" stroke="#f08a1e" stroke-width=".8"/></svg>
<svg style="left:526px;top:720px;" width="22" height="20" viewBox="0 0 22 20"><circle cx="9" cy="9" r="6" fill="#fff" stroke="#333" stroke-width="1.600"/><path d="M5 9H11M8 6L5 9L8 12" stroke="#333" stroke-width="1.600" fill="none"/><path d="M11 11L18 14L15 15L17 19L15.500 19.500L13.500 16L11.500 18Z" fill="#222"/></svg>
<div style="left:548px;top:721px;width:138px;height:18px;background:#ece9d8;border:1px solid #d0cdbd"></div>
<svg style="left:672px;top:727px;" width="9" height="6" viewBox="0 0 9 6"><path d="M1 1L4.500 4.500L8 1" fill="none" stroke="#c4c2b6" stroke-width="1.800"/></svg>
<div style="left:686px;top:718px;width:8px;height:21px;background:#4a4a4a"></div>
<svg style="left:687px;top:722px;" width="6" height="6" viewBox="0 0 6 6"><path d="M.5 .5L5.500 5.500M5.500 .5L.5 5.500" stroke="#fff" stroke-width="1.600"/></svg>
<div style="left:697px;top:718px;width:165px;height:21px;background:#ececec;border:1px solid #4a4a4a"></div>
<div style="left:697px;top:718px;width:7px;height:21px;background:#555"></div>
<svg style="left:698px;top:721px;" width="5" height="16" viewBox="0 0 5 16"><rect x="1" y="1" width="1" height="1" fill="#222"/><rect x="1" y="3" width="1" height="1" fill="#222"/><rect x="1" y="5" width="1" height="1" fill="#222"/><rect x="1" y="7" width="1" height="1" fill="#222"/><rect x="1" y="9" width="1" height="1" fill="#222"/><rect x="1" y="11" width="1" height="1" fill="#222"/><rect x="1" y="13" width="1" height="1" fill="#222"/><rect x="1" y="15" width="1" height="1" fill="#222"/><rect x="3" y="1" width="1" height="1" fill="#222"/><rect x="3" y="3" width="1" height="1" fill="#222"/><rect x="3" y="5" width="1" height="1" fill="#222"/><rect x="3" y="7" width="1" height="1" fill="#222"/><rect x="3" y="9" width="1" height="1" fill="#222"/><rect x="3" y="11" width="1" height="1" fill="#222"/><rect x="3" y="13" width="1" height="1" fill="#222"/><rect x="3" y="15" width="1" height="1" fill="#222"/></svg>
<svg style="left:705px;top:720px;" width="22" height="20" viewBox="0 0 22 20"><rect x="3.500" y="3.500" width="11" height="11" fill="#fff" stroke="#333" stroke-width="1.300"/><circle cx="14" cy="14" r="5" fill="none" stroke="#333" stroke-width="1.300"/></svg>
<div style="left:730px;top:722px;width:1px;height:16px;background:#bbb"></div>
<svg style="left:733px;top:720px;" width="22" height="20" viewBox="0 0 22 20"><circle cx="11" cy="11" r="8" fill="#f6f6f6" stroke="#333" stroke-width="1.200"/><path d="M5 6Q11 12 17 16M17 6Q11 12 5 16" stroke="#333" fill="none" stroke-width=".9"/></svg>
<svg style="left:756px;top:720px;" width="22" height="20" viewBox="0 0 22 20"><circle cx="11" cy="11" r="8" fill="#f6f6f6" stroke="#333" stroke-width="1.200"/><path d="M5 6Q11 12 17 16M17 6Q11 12 5 16" stroke="#333" fill="none" stroke-width=".9"/></svg>
<svg style="left:779px;top:720px;" width="22" height="20" viewBox="0 0 22 20"><defs><radialGradient id="sb" cx=".4" cy=".3"><stop offset="0" stop-color="#8cc4ff"/><stop offset=".5" stop-color="#2a7ad8"/><stop offset="1" stop-color="#0e3f8e"/></radialGradient><radialGradient id="so" cx=".4" cy=".3"><stop offset="0" stop-color="#ffd27a"/><stop offset=".45" stop-color="#e0902a"/><stop offset="1" stop-color="#4a2a8e"/></radialGradient></defs><circle cx="11" cy="11" r="8" fill="url(#sb)"/></svg>
<svg style="left:802px;top:720px;" width="22" height="20" viewBox="0 0 22 20"><circle cx="11" cy="11" r="8" fill="url(#so)"/></svg>
<div style="left:827px;top:722px;width:1px;height:16px;background:#bbb"></div>
<svg style="left:831px;top:720px;" width="22" height="20" viewBox="0 0 22 20"><circle cx="11" cy="11" r="8" fill="#e4e6ea" stroke="#333" stroke-width="1.200"/><path d="M11 3Q17 6 15 19" fill="none" stroke="#777"/><rect x="12.500" y="12.500" width="9" height="8" fill="#f4f4f4" stroke="#444"/><path d="M14 15H20M14 17.500H20" stroke="#2f6fc4"/></svg>
<div style="left:854px;top:718px;width:8px;height:21px;background:#4a4a4a"></div>
<svg style="left:855px;top:722px;" width="6" height="6" viewBox="0 0 6 6"><path d="M.5 .5L5.500 5.500M5.500 .5L.5 5.500" stroke="#fff" stroke-width="1.600"/></svg><div style="left:0px;top:738px;width:1024px;height:30px;background:linear-gradient(#3f8cf3 0,#2a6fe6 10%,#245edb 30%,#2358d4 70%,#1f4fc4 100%);"></div>
<div style="left:0px;top:738px;width:97px;height:30px;background:linear-gradient(#5eb85e 0,#3f9a41 15%,#37913a 55%,#2f8033 100%);border-radius:0 12px 12px 0;box-shadow:inset -2px 0 4px rgba(0,40,0,.45), 2px 0 3px rgba(0,0,60,.4)"></div>
<svg style="left:10px;top:742.5px;" width="21" height="21" viewBox="0 0 21 21"><path d="M3 3.5Q6.500 1.500 9.500 3.500L8.500 9Q5.500 7.200 2 9Z" fill="#e8572a"/><path d="M11 4Q14 6 18 4L17 9.500Q13.500 11.500 10 9.500Z" fill="#7ec23f"/><path d="M1.800 10.500Q5.200 8.600 8.200 10.500L7.200 16Q4.200 14.200 .8 16Z" fill="#4a8be0"/><path d="M9.600 11Q12.800 13 16.600 11L15.600 16.500Q12.200 18.500 8.600 16.500Z" fill="#f5c23a"/></svg>
<div class="s" style="left:35px;top:741px;color:#fff;font-style:italic;font-size:19px;line-height:24px;text-shadow:1px 1px 1px #1a4a1a;letter-spacing:1px">开始</div>
<div style="left:106px;top:741px;width:158px;height:25px;background:linear-gradient(#5a9bf8 0,#3c81f3 12%,#3579ee 60%,#2f6fe2 100%);box-shadow:inset 0 1px 0 rgba(255,255,255,.25);border-radius:3px;border:1px solid #3572e4"></div><svg style="left:117px;top:745px;" width="17" height="17" viewBox="0 0 17 17"><circle cx="8.500" cy="8.500" r="7.800" fill="#f4f8ff" stroke="#a8c6f4"/><path d="M12 5.500Q8 3.500 6.500 6.500Q6 9 9.500 9.500Q12 10.500 10 12.500Q7.500 13.500 5 11.500" fill="none" stroke="#3f74d4" stroke-width="2.400" stroke-linecap="round"/></svg><div class="t" style="left:135px;top:747px;color:#fff">用户控制面板<span class="l"> - ....</span></div>
<div style="left:268px;top:741px;width:157px;height:25px;background:linear-gradient(#1c4bb0,#1e52c4 30%,#2058cc);box-shadow:inset 1px 1px 2px rgba(0,0,40,.6);border-radius:3px;border:1px solid #163e96"></div><div style="left:276px;top:745px;width:18px;height:18px;background:#d8d8d8;border:1px solid #555"></div><div style="left:277px;top:755px;width:16px;height:7px;background:#c01818"></div><div class="s" style="left:280px;top:743px;color:#111;font-weight:bold;font-size:12px"><span class="l">A</span></div><div class="t" style="left:297px;top:747px;color:#fff"><span class="l">AutoCAD 2013 - [...</span></div>
<div style="left:428px;top:741px;width:157px;height:25px;background:linear-gradient(#5a9bf8 0,#3c81f3 12%,#3579ee 60%,#2f6fe2 100%);box-shadow:inset 0 1px 0 rgba(255,255,255,.25);border-radius:3px;border:1px solid #3572e4"></div><svg style="left:436px;top:745px;" width="17" height="17" viewBox="0 0 17 17"><rect x=".5" y="1.500" width="16" height="14" rx="2" fill="#3b9be8" stroke="#d9ecfb"/><path d="M3 10Q3 7 6 7.500Q7.500 4.500 10.500 6.500Q14 6.500 14 9.500Q14 11.500 11.500 11.500H5Q3 11.500 3 10Z" fill="none" stroke="#fff" stroke-width="1.300"/></svg><div class="t" style="left:457px;top:747px;color:#fff"><span class="l">360</span>云盘</div>
<div style="left:588px;top:741px;width:157px;height:25px;background:linear-gradient(#5a9bf8 0,#3c81f3 12%,#3579ee 60%,#2f6fe2 100%);box-shadow:inset 0 1px 0 rgba(255,255,255,.25);border-radius:3px;border:1px solid #3572e4"></div><svg style="left:596px;top:746px;" width="16" height="14" viewBox="0 0 16 14"><path d="M1 3.2Q1 2 2.2 2H5.6L7 3.6H13.4Q14.6 3.6 14.6 4.8V11.6Q14.6 12.8 13.4 12.8H2.2Q1 12.8 1 11.6Z" fill="#f5d875" stroke="#b8912a" stroke-width="1"/><path d="M1.6 5.6H14V6.6H1.6Z" fill="#fff4c0" opacity=".8"/></svg><div class="t" style="left:617px;top:747px;color:#fff"><span class="l">B=650</span>大倾角皮带<span class="l">....</span></div>
<svg style="left:826px;top:742px;" width="11" height="22" viewBox="0 0 11 22"><rect x="3.500" y="1.500" width="6" height="4" fill="none" stroke="#fff" stroke-width="1.200"/><rect x="1" y="4" width="6" height="4.500" fill="#2a62d8" stroke="#fff" stroke-width="1.200"/><path d="M2.500 15H8.500L5.500 18.500Z" fill="#fff"/></svg>
<div style="left:893px;top:738px;width:131px;height:30px;background:linear-gradient(#3fb0f5 0,#1a9af0 12%,#1290ea 50%,#0f83dc 100%);border-left:1px solid #0a4fa8;box-shadow:inset 2px 0 2px rgba(140,210,255,.6)"></div>
<div style="left:885px;top:745px;width:18px;height:18px;border-radius:9px;background:radial-gradient(circle at 40% 35%,#7fc6ff,#2a7ee6);border:1px solid #bfe1ff"></div>
<svg style="left:885px;top:745.5px;" width="17" height="17" viewBox="0 0 17 17"><path d="M10 4.500L6 8.500L10 12.500" fill="none" stroke="#fff" stroke-width="2"/></svg>
<svg style="left:903px;top:744px;" width="18" height="19" viewBox="0 0 18 19"><ellipse cx="9" cy="10" rx="6" ry="7.500" fill="#1a1a1a"/><ellipse cx="9" cy="12.500" rx="3.800" ry="4.500" fill="#fff"/><ellipse cx="9" cy="8.200" rx="3.200" ry="1.300" fill="#f5a623"/><path d="M3 11Q9 8 15 11L15 13Q9 10.500 3 13Z" fill="#e0342c"/><ellipse cx="5.500" cy="17.500" rx="2.800" ry="1.200" fill="#f5a623"/><ellipse cx="12.500" cy="17.500" rx="2.800" ry="1.200" fill="#f5a623"/></svg>
<svg style="left:922px;top:746px;" width="16" height="15" viewBox="0 0 16 15"><rect x=".5" y=".5" width="15" height="14" rx="1.500" fill="#2f8fe0" stroke="#e8f4ff"/><path d="M3 9Q3 6.500 5.500 7Q7 4 10 6Q13 6 13 8.500Q13 10.500 11 10.500H4.500Q3 10.500 3 9Z" fill="none" stroke="#fff" stroke-width="1.200"/><rect x="1" y="12" width="14" height="2" fill="#fff"/></svg>
<svg style="left:940px;top:745px;" width="16" height="16" viewBox="0 0 16 16"><path d="M1 .5H6.500V6L11 .5H15.500L9 8L12 11.500L9 15H5.500L6.500 9V15.500H1Z" fill="#e0141e"/><path d="M8 8.500L15 15.500M15.500 10V15.500H10" stroke="#111" stroke-width="2.400" fill="none"/></svg>
<svg style="left:957px;top:745px;" width="22" height="17" viewBox="0 0 22 17"><rect x="1" y="3" width="10" height="8" fill="#7ec0ee" stroke="#e8f0f8"/><rect x="3" y="12" width="7" height="3" fill="#c7d2e0"/><path d="M13 9Q15 6.500 13 4M15.500 10.500Q18.500 6.500 15.500 2.500M18 12Q22 6.500 18 1" fill="none" stroke="#58d058" stroke-width="1.300"/></svg>
<div class="s" style="left:981px;top:747px;color:#eef6ff;letter-spacing:0;font-size:12px"><span class="l">10:00</span></div>
</body></html>
